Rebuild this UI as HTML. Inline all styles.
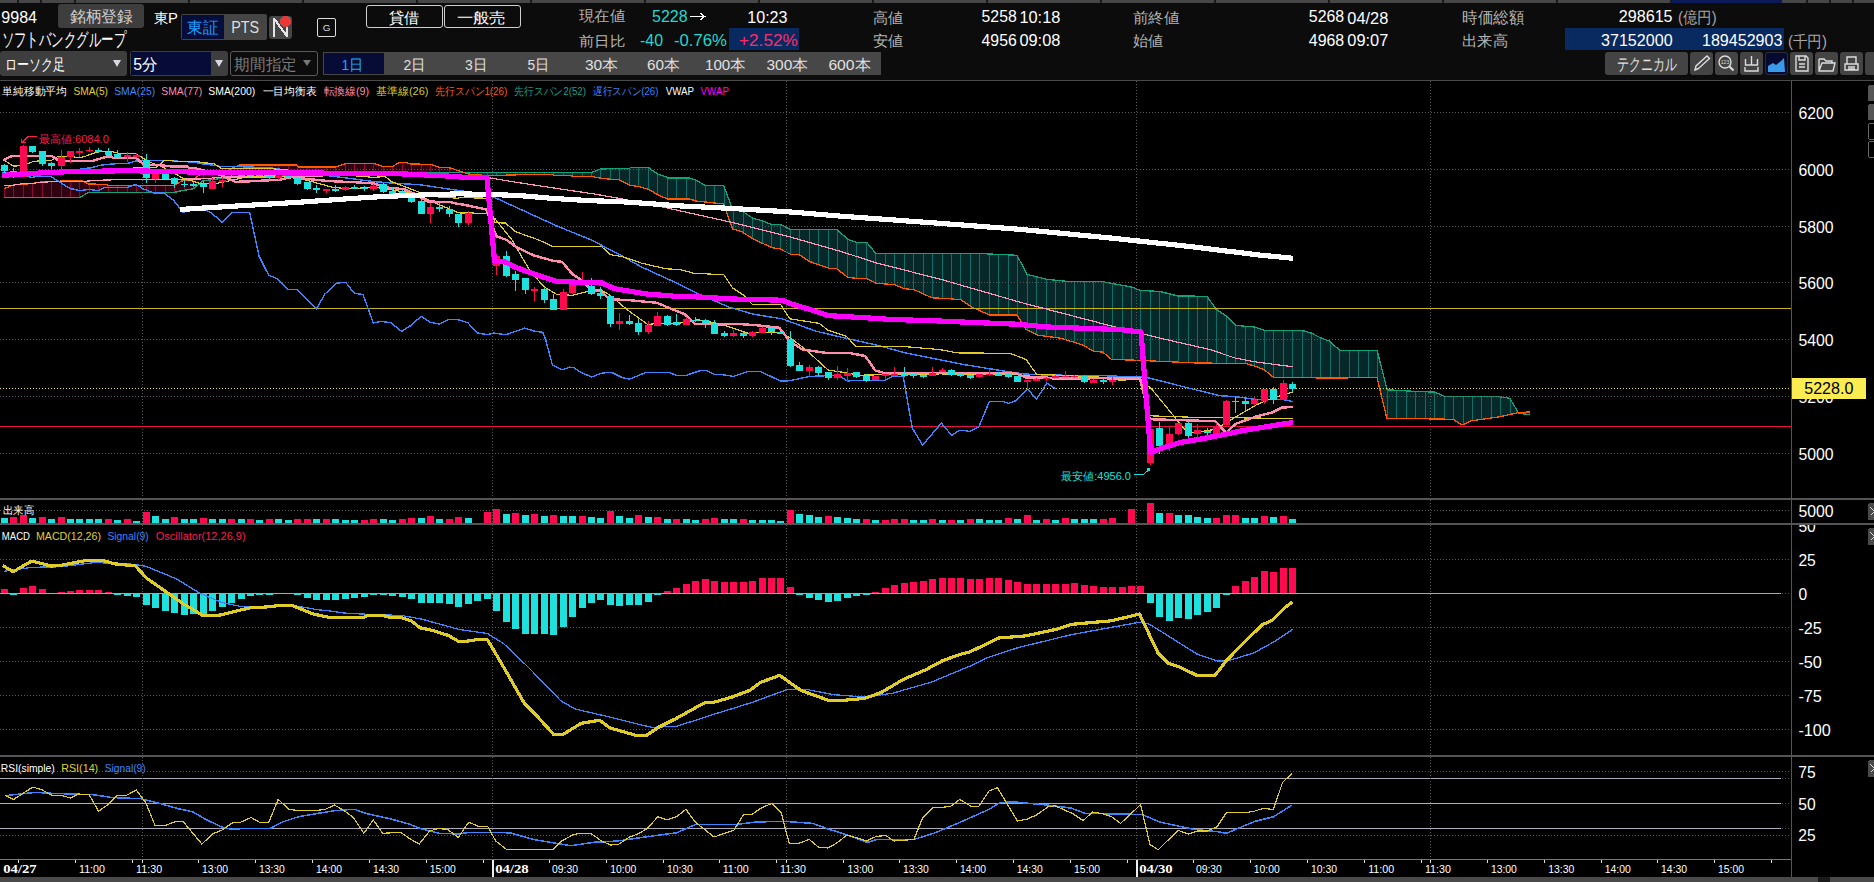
<!DOCTYPE html>
<html><head><meta charset="utf-8">
<style>
html,body{margin:0;padding:0;background:#000;width:1874px;height:882px;overflow:hidden;font-family:"Liberation Sans",sans-serif;}
#tb{position:absolute;left:0;top:0;width:1874px;height:80px;background:#0c0c0c;}
.a{position:absolute;white-space:nowrap;line-height:1;}
.btn{position:absolute;background:#3e3e3e;border-radius:3px;}
svg{position:absolute;left:0;top:0;}
</style></head><body>
<div id="tb">
<div style="position:absolute;left:0;top:0;width:1874px;height:3px;background:#464646"></div>
<div class="btn" style="left:58px;top:4px;width:86px;height:24px"></div>
<div style="position:absolute;left:181px;top:14px;width:86px;height:26px;background:#454545;border-radius:2px"></div>
<div style="position:absolute;left:182px;top:15px;width:42px;height:24px;background:#050d3a"></div>
<div class="btn" style="left:269px;top:16px;width:23px;height:23px;background:#454545"></div>
<div style="position:absolute;left:317px;top:18px;width:17px;height:17px;border:1px solid #ddd;border-radius:2px"></div>
<div style="position:absolute;left:366px;top:5px;width:75px;height:21px;border:1.5px solid #cfcfcf;border-radius:3px"></div>
<div style="position:absolute;left:444px;top:5px;width:75px;height:21px;border:1.5px solid #cfcfcf;border-radius:3px"></div>

<div style="position:absolute;left:729px;top:28px;width:70px;height:22px;background:#082a60"></div>


<div style="position:absolute;left:1565px;top:28px;width:219px;height:22px;background:#082a60"></div>

<div class="btn" style="left:0px;top:51px;width:127px;height:25px"></div>
<div style="position:absolute;left:113px;top:60px;width:0;height:0;border-left:4.5px solid transparent;border-right:4.5px solid transparent;border-top:7px solid #d8d8e0"></div>
<div class="btn" style="left:130px;top:51px;width:98px;height:25px"></div>
<div style="position:absolute;left:131px;top:52px;width:80px;height:23px;background:#060c36"></div>
<div style="position:absolute;left:215px;top:60px;width:0;height:0;border-left:4.5px solid transparent;border-right:4.5px solid transparent;border-top:7px solid #d8d8e0"></div>
<div style="position:absolute;left:230px;top:51px;width:86px;height:23px;border:1px solid #5a5a5a;border-radius:3px;background:#0c0c0c"></div>
<div style="position:absolute;left:303px;top:60px;width:0;height:0;border-left:4px solid transparent;border-right:4px solid transparent;border-top:6px solid #777"></div>
<div style="position:absolute;left:323px;top:52px;width:558px;height:23px;background:#474747"></div>
<div style="position:absolute;left:324px;top:53px;width:60px;height:21px;background:#060c36"></div>

<div class="btn" style="left:1605px;top:52px;width:83px;height:23px;background:#444"></div>
<div class="btn" style="left:1690px;top:52px;width:23px;height:23px;background:#444"></div>
<div class="btn" style="left:1715px;top:52px;width:23px;height:23px;background:#444"></div>
<div class="btn" style="left:1740px;top:52px;width:23px;height:23px;background:#444"></div>
<div class="btn" style="left:1765px;top:52px;width:23px;height:23px;background:#050b30;box-shadow:inset 0 0 0 1px #2a2a3a"></div>
<div class="btn" style="left:1790px;top:52px;width:23px;height:23px;background:#444"></div>
<div class="btn" style="left:1815px;top:52px;width:23px;height:23px;background:#444"></div>
<div class="btn" style="left:1840px;top:52px;width:23px;height:23px;background:#444"></div>
<div class="btn" style="left:1865px;top:52px;width:12px;height:23px;background:#444"></div>
<svg width="1874" height="80" style="position:absolute;left:0;top:0">
<g fill="none" stroke="#dcdcdc" stroke-width="1.4">
<path d="M1695,70 L1696,66 L1707,56 L1709.5,58.5 L1698.5,68.5 Z M1695,70 L1698.5,68.5"/>
<circle cx="1725" cy="62" r="6"/><path d="M1729.5,66.5 L1733.5,70.5" stroke-width="2.2"/>
<path d="M1751.5,56 V65 M1745.5,59 V65 H1757.5 V59 M1745,67 V71 H1758 V67"/>
<path d="M1796,56 H1806 L1808,58 V71 H1796 Z M1799,56 V60 H1805 V56 M1799,64 H1805 M1799,67 H1805"/>
<path d="M1819,59 V71 H1833 L1835,63 H1822 L1819,71 M1819,59 H1824 L1826,61 H1832 V63"/>
<path d="M1845,64 H1858 V70 H1845 Z M1847,64 V57 H1856 V64 M1848,67 H1855 M1848,69 H1855"/>
</g>
<text x="1725" y="64" font-size="5" fill="#dcdcdc" text-anchor="middle" font-family="Liberation Sans, sans-serif">123</text>
<path d="M1768,72 L1768,66 L1773,63 L1776,65 L1781,61 L1784,58 L1785,72 Z" fill="#3a9ae8"/>
</svg>

</div>
<svg width="1874" height="882" viewBox="0 0 1874 882" shape-rendering="crispEdges">
<rect x="0" y="81" width="1874" height="801" fill="#000"/>
<polygon points="4.0,188.6 4.5,188.5 5.0,188.3 5.5,188.1 6.0,187.9 6.5,187.7 7.0,187.5 7.5,187.3 8.0,187.1 8.5,186.9 9.0,186.7 9.5,186.5 10.0,186.3 10.5,186.1 11.0,185.9 11.5,185.7 12.0,185.5 12.5,185.3 13.0,185.1 13.5,184.9 14.0,184.7 14.5,184.7 15.0,184.6 15.5,184.6 16.0,184.5 16.5,184.5 17.0,184.5 17.5,184.4 18.0,184.4 18.5,184.3 19.0,184.3 19.5,184.3 20.0,184.2 20.5,184.2 21.0,184.1 21.5,184.1 22.0,184.1 22.5,184.0 23.0,184.0 23.5,184.0 24.0,184.0 24.5,184.0 25.0,183.9 25.5,183.9 26.0,183.9 26.5,183.9 27.0,183.9 27.5,183.9 28.0,183.8 28.5,183.8 29.0,183.8 29.5,183.8 30.0,183.8 30.5,183.8 31.0,183.7 31.5,183.7 32.0,183.7 32.5,183.7 33.0,183.6 33.5,183.4 34.0,183.3 34.5,183.2 35.0,183.0 35.5,182.9 36.0,182.7 36.5,182.6 37.0,182.4 37.5,182.3 38.0,182.3 38.5,182.3 39.0,182.2 39.5,182.2 40.0,182.2 40.5,182.2 41.0,182.1 41.5,182.1 42.0,182.1 42.5,182.1 43.0,182.0 43.5,182.0 44.0,182.0 44.5,182.0 45.0,181.9 45.5,181.9 46.0,181.9 46.5,181.9 47.0,181.8 47.5,181.8 48.0,181.8 48.5,181.8 49.0,181.7 49.5,181.7 50.0,181.7 50.5,181.7 51.0,181.6 51.5,181.6 52.0,181.6 52.5,181.6 53.0,181.5 53.5,181.5 54.0,181.5 54.5,181.5 55.0,181.4 55.5,181.4 56.0,181.4 56.5,181.4 57.0,181.3 57.5,181.3 58.0,181.3 58.5,181.3 59.0,181.2 59.5,181.2 60.0,181.2 60.5,181.1 61.0,181.1 61.5,181.1 62.0,181.1 62.5,181.0 63.0,181.0 63.5,181.0 64.0,181.0 64.5,180.9 65.0,180.9 65.5,180.9 66.0,180.9 66.5,180.8 67.0,180.8 67.5,180.8 68.0,180.7 68.5,180.7 69.0,180.7 69.5,180.7 70.0,180.6 70.5,180.6 71.0,180.6 71.5,180.6 72.0,180.6 72.5,180.6 73.0,180.6 73.5,180.6 74.0,180.6 74.5,180.6 75.0,180.6 75.5,180.6 76.0,180.6 76.5,180.6 77.0,180.6 77.5,180.6 78.0,180.6 78.5,180.6 79.0,180.6 79.5,180.6 80.0,180.6 80.5,180.6 81.0,180.6 81.5,180.6 82.0,180.6 82.5,180.9 83.0,181.1 83.5,181.4 84.0,181.6 84.5,181.9 85.0,182.1 85.5,182.4 86.0,182.6 86.5,182.9 87.0,183.1 87.5,183.4 88.0,183.6 88.5,183.9 89.0,184.0 89.5,184.0 90.0,184.0 90.5,184.0 91.0,184.0 91.5,184.1 92.0,184.1 92.5,184.1 93.0,184.1 93.5,184.1 94.0,184.1 94.5,184.1 95.0,184.1 95.5,184.1 96.0,184.2 96.5,184.2 97.0,184.2 97.5,184.2 98.0,184.2 98.5,184.2 99.0,184.2 99.5,184.2 100.0,184.2 100.5,184.3 101.0,184.3 101.5,184.3 102.0,184.3 102.5,184.3 103.0,184.3 103.5,184.3 104.0,184.3 104.5,184.3 105.0,184.3 105.5,184.4 106.0,184.4 106.5,184.4 107.0,184.4 107.5,184.4 108.0,185.3 108.5,185.6 109.0,185.6 109.5,185.6 110.0,185.6 110.5,185.6 111.0,185.6 111.5,185.6 112.0,185.6 112.5,185.6 113.0,185.6 113.5,185.6 114.0,185.6 114.5,185.6 115.0,185.6 115.5,185.6 116.0,185.6 116.5,185.5 117.0,185.5 117.5,185.5 118.0,185.5 118.5,185.5 119.0,185.5 119.5,185.5 120.0,185.5 120.5,185.5 121.0,185.5 121.5,185.5 122.0,185.5 122.5,185.5 123.0,185.5 123.5,185.5 124.0,185.5 124.5,185.5 125.0,185.5 125.5,185.5 126.0,185.5 126.5,185.5 127.0,185.5 127.5,185.5 128.0,185.5 128.5,185.5 129.0,185.5 129.5,185.5 130.0,185.5 130.5,185.5 131.0,185.5 131.5,185.5 132.0,185.5 132.5,185.5 133.0,185.4 133.5,185.4 134.0,185.4 134.5,185.4 135.0,185.4 135.5,185.4 136.0,185.4 136.5,185.4 137.0,185.4 137.5,185.4 138.0,185.4 138.5,185.4 139.0,185.4 139.5,185.4 140.0,185.4 140.5,185.4 141.0,185.4 141.5,185.4 142.0,185.4 142.5,185.4 143.0,185.4 143.5,185.4 144.0,185.4 144.5,185.4 145.0,185.4 145.5,185.4 146.0,185.4 146.5,185.4 147.0,185.4 147.5,185.4 148.0,185.4 148.5,185.4 149.0,185.4 149.5,185.3 150.0,185.3 150.5,185.3 151.0,185.3 151.5,185.3 152.0,185.3 152.5,185.3 153.0,185.3 153.5,185.3 154.0,185.3 154.5,185.3 155.0,185.3 155.5,185.3 156.0,185.3 156.5,185.3 157.0,185.3 157.5,185.3 158.0,185.3 158.5,185.3 159.0,185.3 159.5,185.3 160.0,185.3 160.5,185.3 161.0,185.3 161.5,185.3 162.0,185.3 162.5,185.3 163.0,185.3 163.5,185.3 164.0,185.3 164.5,185.3 165.0,185.3 165.5,185.3 166.0,185.2 166.5,185.2 167.0,185.2 167.5,185.2 168.0,185.2 168.5,185.2 169.0,185.2 169.5,185.2 170.0,185.2 170.5,185.2 171.0,185.2 171.5,185.2 172.0,185.2 172.5,185.2 173.0,185.2 173.5,185.2 174.0,185.2 174.5,185.0 175.0,184.8 175.5,184.5 176.0,184.2 176.5,183.9 177.0,183.7 177.5,183.4 178.0,183.1 178.5,182.9 179.0,182.6 179.5,182.3 180.0,182.0 180.5,181.8 181.0,181.5 181.5,181.2 182.0,181.0 182.5,180.9 183.0,180.9 183.5,180.8 184.0,180.8 184.5,180.7 185.0,180.6 185.5,180.6 186.0,180.5 186.5,180.5 187.0,180.4 187.5,180.4 188.0,180.3 188.5,180.3 189.0,180.2 189.5,180.1 190.0,180.1 190.5,180.0 191.0,180.0 191.5,179.9 192.0,179.9 192.5,179.8 193.0,179.7 193.5,179.6 194.0,179.2 194.5,178.8 195.0,178.4 195.5,178.0 196.0,177.6 196.5,177.2 197.0,176.8 197.5,176.4 198.0,176.0 198.5,175.6 199.0,175.2 199.5,174.8 200.0,174.6 200.5,174.6 201.0,174.6 201.5,174.6 202.0,174.5 202.5,174.5 203.0,174.5 203.5,174.5 204.0,174.5 204.5,174.5 205.0,174.5 205.5,174.4 206.0,174.4 206.5,174.4 207.0,174.4 207.5,174.4 208.0,174.4 208.5,174.4 209.0,174.3 209.5,174.3 210.0,174.3 210.5,174.3 211.0,174.3 211.5,174.3 212.0,174.3 212.5,174.3 213.0,174.2 213.5,174.2 214.0,174.2 214.5,174.2 215.0,174.2 215.5,174.2 216.0,174.2 216.5,174.1 217.0,174.1 217.5,174.1 218.0,174.1 218.5,174.1 219.0,174.1 219.5,174.1 220.0,174.0 220.5,174.0 221.0,174.0 221.5,174.0 222.0,173.7 222.5,173.4 223.0,173.0 223.5,172.7 224.0,172.4 224.5,172.0 225.0,171.7 225.5,171.4 226.0,171.1 226.5,170.9 227.0,170.7 227.5,170.4 228.0,170.2 228.5,170.0 229.0,169.7 229.5,169.5 230.0,169.3 230.5,169.0 231.0,168.8 231.5,168.6 232.0,168.3 232.5,168.1 233.0,167.9 233.5,167.6 234.0,167.4 234.5,167.2 235.0,166.9 235.5,166.7 236.0,166.5 236.5,166.3 237.0,166.0 237.5,165.8 238.0,165.6 238.5,165.3 239.0,165.1 239.5,165.0 240.0,165.0 240.5,165.0 241.0,165.0 241.5,165.0 242.0,165.0 242.5,165.0 243.0,165.0 243.5,165.0 244.0,165.0 244.5,165.0 245.0,165.0 245.5,165.0 246.0,165.0 246.5,165.0 247.0,165.0 247.5,165.0 248.0,165.0 248.5,165.0 249.0,165.0 249.5,165.0 250.0,165.0 250.5,165.0 251.0,165.0 251.5,165.0 252.0,165.0 252.5,165.0 253.0,165.0 253.5,165.0 254.0,165.0 254.5,165.0 255.0,165.0 255.5,165.0 256.0,165.0 256.5,165.0 257.0,165.0 257.5,165.0 258.0,165.0 258.5,165.0 259.0,165.0 259.5,165.0 260.0,165.0 260.5,165.0 261.0,165.0 261.5,165.0 262.0,165.0 262.5,165.0 263.0,165.0 263.5,165.0 264.0,165.0 264.5,165.0 265.0,165.0 265.5,165.0 266.0,165.0 266.5,165.0 267.0,165.0 267.5,165.0 268.0,165.0 268.5,165.0 269.0,165.0 269.5,165.0 270.0,165.0 270.5,165.0 271.0,165.0 271.5,165.0 272.0,165.0 272.5,165.0 273.0,165.0 273.5,165.0 274.0,165.0 274.5,165.0 275.0,165.0 275.5,165.0 276.0,165.0 276.5,165.0 277.0,165.0 277.5,165.0 278.0,165.0 278.5,165.0 279.0,165.0 279.5,165.0 280.0,165.0 280.5,165.0 281.0,165.0 281.5,165.0 282.0,165.0 282.5,165.0 283.0,165.0 283.5,165.0 284.0,165.0 284.5,165.0 285.0,165.0 285.5,165.0 286.0,165.0 286.5,165.0 287.0,165.0 287.5,165.0 288.0,165.0 288.5,165.0 289.0,165.0 289.5,165.0 290.0,165.0 290.5,165.0 291.0,165.0 291.5,165.0 292.0,165.0 292.5,165.0 293.0,165.0 293.5,165.0 294.0,165.0 294.5,165.0 295.0,165.0 295.5,165.0 296.0,165.0 296.5,165.0 297.0,165.3 297.5,166.1 298.0,166.9 298.5,166.9 299.0,166.9 299.5,166.9 300.0,166.9 300.5,166.9 301.0,166.9 301.5,166.9 302.0,166.9 302.5,166.9 303.0,166.9 303.5,166.9 304.0,166.9 304.5,166.9 305.0,166.9 305.5,166.9 306.0,166.9 306.5,166.9 307.0,166.9 307.5,166.9 308.0,166.9 308.5,166.9 309.0,166.9 309.5,166.9 310.0,166.9 310.5,166.9 311.0,166.9 311.5,166.9 312.0,166.9 312.5,166.9 313.0,166.9 313.5,166.9 314.0,166.9 314.5,166.9 315.0,166.9 315.5,166.9 316.0,166.9 316.5,166.9 317.0,166.9 317.5,166.9 318.0,166.9 318.5,166.9 319.0,166.9 319.5,166.9 320.0,166.9 320.5,166.9 321.0,166.9 321.5,166.9 322.0,166.9 322.5,166.9 323.0,166.9 323.5,166.9 324.0,166.9 324.5,166.9 325.0,166.9 325.5,166.9 326.0,166.9 326.5,166.9 327.0,166.9 327.5,166.9 328.0,166.9 328.5,166.9 329.0,166.9 329.5,166.9 330.0,166.9 330.5,166.9 331.0,166.9 331.5,166.9 332.0,166.9 332.5,166.9 333.0,166.9 333.5,166.9 334.0,166.9 334.5,166.9 335.0,166.9 335.5,166.8 336.0,166.7 336.5,166.5 337.0,166.4 337.5,166.2 338.0,166.1 338.5,165.9 339.0,165.7 339.5,165.6 340.0,165.4 340.5,165.3 341.0,165.1 341.5,165.0 342.0,164.8 342.5,164.6 343.0,164.5 343.5,164.3 344.0,164.2 344.5,164.0 345.0,163.9 345.5,163.7 346.0,163.7 346.5,163.7 347.0,163.7 347.5,163.7 348.0,163.7 348.5,163.7 349.0,163.7 349.5,163.7 350.0,163.7 350.5,163.7 351.0,163.7 351.5,163.7 352.0,163.7 352.5,163.7 353.0,163.7 353.5,163.7 354.0,163.7 354.5,163.7 355.0,163.7 355.5,163.7 356.0,163.7 356.5,163.7 357.0,163.7 357.5,163.7 358.0,163.7 358.5,163.7 359.0,163.7 359.5,163.7 360.0,163.7 360.5,163.7 361.0,163.7 361.5,163.7 362.0,163.7 362.5,163.7 363.0,163.7 363.5,163.7 364.0,163.7 364.5,163.7 365.0,163.7 365.5,163.7 366.0,163.7 366.5,163.7 367.0,163.7 367.5,163.7 368.0,163.7 368.5,163.7 369.0,163.7 369.5,163.7 370.0,163.7 370.5,163.7 371.0,163.7 371.5,163.7 372.0,163.7 372.5,163.7 373.0,163.7 373.5,163.7 374.0,163.7 374.5,163.7 375.0,163.7 375.5,163.9 376.0,164.1 376.5,164.3 377.0,164.5 377.5,164.6 378.0,164.8 378.5,165.0 379.0,165.2 379.5,165.4 380.0,165.6 380.5,165.8 381.0,166.0 381.5,166.2 382.0,166.3 382.5,166.5 383.0,166.5 383.5,166.5 384.0,166.5 384.5,166.5 385.0,166.5 385.5,166.5 386.0,166.5 386.5,166.5 387.0,166.5 387.5,166.5 388.0,166.5 388.5,166.5 389.0,166.5 389.5,166.5 390.0,166.5 390.5,166.5 391.0,166.5 391.5,166.5 392.0,166.5 392.5,166.5 393.0,166.2 393.5,165.9 394.0,165.6 394.5,165.3 395.0,165.0 395.5,164.7 396.0,164.4 396.5,164.1 397.0,163.8 397.5,163.5 398.0,163.2 398.5,162.9 399.0,162.6 399.5,162.5 400.0,162.5 400.5,162.5 401.0,162.5 401.5,162.5 402.0,162.5 402.5,162.5 403.0,162.5 403.5,162.5 404.0,162.5 404.5,162.5 405.0,162.5 405.5,162.5 406.0,162.6 406.5,162.8 407.0,162.9 407.5,163.0 408.0,163.2 408.5,163.3 409.0,163.4 409.5,163.6 410.0,163.7 410.5,163.8 411.0,163.9 411.5,163.9 412.0,163.9 412.5,163.9 413.0,164.0 413.5,164.0 414.0,164.0 414.5,164.0 415.0,164.0 415.5,164.0 416.0,164.0 416.5,164.1 417.0,164.1 417.5,164.1 418.0,164.1 418.5,164.1 419.0,164.1 419.5,164.1 420.0,164.1 420.5,164.2 421.0,164.2 421.5,164.2 422.0,164.2 422.5,164.2 423.0,164.2 423.5,164.2 424.0,164.2 424.5,164.3 425.0,164.3 425.5,164.3 426.0,164.3 426.5,164.3 427.0,164.3 427.5,164.3 428.0,164.3 428.5,164.4 429.0,164.4 429.5,164.4 430.0,164.4 430.5,164.5 431.0,164.7 431.5,164.8 432.0,164.9 432.5,165.0 433.0,165.2 433.5,165.3 434.0,165.4 434.5,165.5 435.0,165.7 435.5,165.8 436.0,166.0 436.5,166.2 437.0,166.4 437.5,166.6 438.0,166.7 438.5,166.9 439.0,167.1 439.5,167.3 440.0,167.3 440.5,167.3 441.0,167.4 441.5,167.4 442.0,167.4 442.5,167.5 443.0,167.5 443.5,167.5 444.0,167.5 444.5,167.6 445.0,167.6 445.5,167.6 446.0,167.6 446.5,167.7 447.0,167.7 447.5,167.7 448.0,167.7 448.5,167.8 449.0,167.8 449.5,167.9 450.0,168.0 450.5,168.2 451.0,168.3 451.5,168.5 452.0,168.6 452.5,168.8 453.0,168.9 453.5,169.1 454.0,169.2 454.5,169.4 455.0,169.6 455.5,169.7 456.0,169.9 456.5,170.1 457.0,170.3 457.5,170.5 458.0,170.6 458.5,170.8 459.0,171.0 459.5,171.2 460.0,171.3 460.5,171.5 461.0,171.7 461.5,171.8 462.0,172.0 462.5,172.2 463.0,172.3 463.5,172.5 464.0,172.6 464.5,172.8 464.5,172.7 464.0,172.7 463.5,172.7 463.0,172.7 462.5,172.7 462.0,172.7 461.5,172.7 461.0,172.7 460.5,172.7 460.0,172.7 459.5,172.7 459.0,172.7 458.5,172.7 458.0,172.7 457.5,172.7 457.0,172.7 456.5,172.7 456.0,172.7 455.5,172.7 455.0,172.7 454.5,172.7 454.0,172.7 453.5,172.7 453.0,172.7 452.5,172.7 452.0,172.7 451.5,172.7 451.0,172.7 450.5,172.7 450.0,172.7 449.5,172.7 449.0,172.7 448.5,172.7 448.0,172.7 447.5,172.7 447.0,172.7 446.5,172.7 446.0,172.7 445.5,172.7 445.0,172.7 444.5,172.7 444.0,172.7 443.5,172.7 443.0,172.7 442.5,172.7 442.0,172.7 441.5,172.7 441.0,172.7 440.5,172.7 440.0,172.7 439.5,172.7 439.0,172.7 438.5,172.7 438.0,172.7 437.5,172.7 437.0,172.7 436.5,172.7 436.0,172.7 435.5,172.7 435.0,172.7 434.5,172.7 434.0,172.7 433.5,172.7 433.0,172.7 432.5,172.7 432.0,172.7 431.5,172.7 431.0,172.7 430.5,172.7 430.0,172.7 429.5,172.7 429.0,172.7 428.5,172.7 428.0,172.8 427.5,172.8 427.0,172.8 426.5,172.8 426.0,172.8 425.5,172.8 425.0,172.8 424.5,172.9 424.0,172.9 423.5,172.9 423.0,172.9 422.5,172.9 422.0,172.9 421.5,172.9 421.0,173.0 420.5,173.0 420.0,173.0 419.5,173.0 419.0,173.0 418.5,173.0 418.0,173.0 417.5,173.1 417.0,173.1 416.5,173.1 416.0,173.1 415.5,173.1 415.0,173.1 414.5,173.1 414.0,173.2 413.5,173.2 413.0,173.2 412.5,173.2 412.0,173.2 411.5,173.2 411.0,173.2 410.5,173.3 410.0,173.3 409.5,173.3 409.0,173.3 408.5,173.3 408.0,173.3 407.5,173.3 407.0,173.4 406.5,173.4 406.0,173.4 405.5,173.4 405.0,173.4 404.5,173.4 404.0,173.4 403.5,173.5 403.0,173.5 402.5,173.5 402.0,173.5 401.5,173.5 401.0,173.5 400.5,173.5 400.0,173.6 399.5,173.6 399.0,173.6 398.5,173.6 398.0,173.6 397.5,173.6 397.0,173.6 396.5,173.7 396.0,173.7 395.5,173.7 395.0,173.7 394.5,173.7 394.0,173.7 393.5,173.7 393.0,173.8 392.5,173.8 392.0,173.8 391.5,173.8 391.0,173.8 390.5,173.8 390.0,173.8 389.5,173.9 389.0,173.9 388.5,173.9 388.0,173.9 387.5,173.9 387.0,173.9 386.5,173.9 386.0,174.0 385.5,174.0 385.0,174.0 384.5,174.0 384.0,174.0 383.5,174.0 383.0,174.0 382.5,174.1 382.0,174.1 381.5,174.1 381.0,174.1 380.5,174.1 380.0,174.1 379.5,174.1 379.0,174.2 378.5,174.2 378.0,174.2 377.5,174.2 377.0,174.2 376.5,174.2 376.0,174.2 375.5,174.3 375.0,174.3 374.5,174.3 374.0,174.3 373.5,174.3 373.0,174.3 372.5,174.3 372.0,174.4 371.5,174.4 371.0,174.4 370.5,174.4 370.0,174.4 369.5,174.4 369.0,174.4 368.5,174.5 368.0,174.5 367.5,174.5 367.0,174.5 366.5,174.5 366.0,174.5 365.5,174.5 365.0,174.6 364.5,174.6 364.0,174.6 363.5,174.6 363.0,174.6 362.5,174.6 362.0,174.6 361.5,174.6 361.0,174.7 360.5,174.7 360.0,174.7 359.5,174.7 359.0,174.7 358.5,174.7 358.0,174.7 357.5,174.8 357.0,174.8 356.5,174.8 356.0,174.8 355.5,174.8 355.0,174.8 354.5,174.8 354.0,174.9 353.5,174.9 353.0,174.9 352.5,174.9 352.0,174.9 351.5,174.9 351.0,174.9 350.5,175.0 350.0,175.0 349.5,175.0 349.0,175.0 348.5,175.0 348.0,175.0 347.5,175.0 347.0,175.1 346.5,175.1 346.0,175.1 345.5,175.1 345.0,175.1 344.5,175.1 344.0,175.1 343.5,175.2 343.0,175.2 342.5,175.2 342.0,175.2 341.5,175.2 341.0,175.2 340.5,175.2 340.0,175.3 339.5,175.3 339.0,175.3 338.5,175.3 338.0,175.3 337.5,175.3 337.0,175.3 336.5,175.4 336.0,175.4 335.5,175.4 335.0,175.4 334.5,175.4 334.0,175.4 333.5,175.4 333.0,175.5 332.5,175.5 332.0,175.5 331.5,175.5 331.0,175.5 330.5,175.5 330.0,175.5 329.5,175.6 329.0,175.6 328.5,175.6 328.0,175.6 327.5,175.6 327.0,175.6 326.5,175.6 326.0,175.7 325.5,175.7 325.0,175.7 324.5,175.7 324.0,175.7 323.5,175.7 323.0,175.7 322.5,175.8 322.0,175.8 321.5,175.8 321.0,175.8 320.5,175.8 320.0,175.8 319.5,175.8 319.0,175.9 318.5,175.9 318.0,175.9 317.5,175.9 317.0,175.9 316.5,175.9 316.0,175.9 315.5,176.0 315.0,176.0 314.5,176.0 314.0,176.0 313.5,176.0 313.0,176.0 312.5,176.0 312.0,176.1 311.5,176.1 311.0,176.1 310.5,176.1 310.0,176.1 309.5,176.1 309.0,176.1 308.5,176.2 308.0,176.2 307.5,176.2 307.0,176.2 306.5,176.2 306.0,176.2 305.5,176.2 305.0,176.3 304.5,176.3 304.0,176.3 303.5,176.3 303.0,176.3 302.5,176.3 302.0,176.3 301.5,176.4 301.0,176.4 300.5,176.4 300.0,176.4 299.5,176.4 299.0,176.4 298.5,176.4 298.0,176.4 297.5,176.4 297.0,176.4 296.5,176.4 296.0,176.4 295.5,176.4 295.0,176.4 294.5,176.4 294.0,176.4 293.5,176.4 293.0,176.4 292.5,176.4 292.0,176.4 291.5,176.4 291.0,176.4 290.5,176.4 290.0,176.4 289.5,176.4 289.0,176.4 288.5,176.4 288.0,176.4 287.5,176.4 287.0,176.4 286.5,176.4 286.0,176.4 285.5,176.4 285.0,176.4 284.5,176.4 284.0,176.4 283.5,176.4 283.0,176.4 282.5,176.4 282.0,176.4 281.5,176.4 281.0,176.4 280.5,176.4 280.0,176.4 279.5,176.4 279.0,176.4 278.5,176.4 278.0,176.4 277.5,176.4 277.0,176.4 276.5,176.4 276.0,176.4 275.5,176.4 275.0,176.4 274.5,176.4 274.0,176.4 273.5,176.4 273.0,176.4 272.5,176.4 272.0,176.4 271.5,176.4 271.0,176.4 270.5,176.4 270.0,176.4 269.5,176.5 269.0,176.5 268.5,176.5 268.0,176.5 267.5,176.5 267.0,176.5 266.5,176.5 266.0,176.5 265.5,176.5 265.0,176.5 264.5,176.5 264.0,176.5 263.5,176.5 263.0,176.5 262.5,176.5 262.0,176.5 261.5,176.5 261.0,176.5 260.5,176.5 260.0,176.5 259.5,176.5 259.0,176.5 258.5,176.5 258.0,176.5 257.5,176.5 257.0,176.5 256.5,176.5 256.0,176.5 255.5,176.5 255.0,176.5 254.5,176.5 254.0,176.5 253.5,176.5 253.0,176.5 252.5,176.5 252.0,176.5 251.5,176.5 251.0,176.5 250.5,176.5 250.0,176.5 249.5,176.5 249.0,176.5 248.5,176.5 248.0,176.5 247.5,176.5 247.0,176.5 246.5,176.5 246.0,176.5 245.5,176.5 245.0,176.5 244.5,176.5 244.0,176.5 243.5,176.5 243.0,176.5 242.5,176.5 242.0,176.5 241.5,176.5 241.0,176.5 240.5,176.5 240.0,176.5 239.5,176.5 239.0,176.6 238.5,176.6 238.0,176.7 237.5,176.7 237.0,176.8 236.5,176.8 236.0,176.9 235.5,176.9 235.0,177.0 234.5,177.0 234.0,177.1 233.5,177.1 233.0,177.2 232.5,177.2 232.0,177.2 231.5,177.3 231.0,177.3 230.5,177.4 230.0,177.4 229.5,177.5 229.0,177.5 228.5,177.6 228.0,177.6 227.5,177.7 227.0,177.7 226.5,177.8 226.0,177.8 225.5,177.9 225.0,177.9 224.5,178.0 224.0,178.0 223.5,178.1 223.0,178.1 222.5,178.2 222.0,178.3 221.5,178.3 221.0,178.4 220.5,178.5 220.0,178.6 219.5,178.6 219.0,178.7 218.5,178.8 218.0,178.8 217.5,178.9 217.0,179.0 216.5,179.0 216.0,179.1 215.5,179.2 215.0,179.2 214.5,179.3 214.0,179.4 213.5,179.5 213.0,179.5 212.5,179.6 212.0,179.7 211.5,179.7 211.0,179.8 210.5,179.9 210.0,179.9 209.5,180.0 209.0,180.1 208.5,180.2 208.0,180.2 207.5,180.3 207.0,180.4 206.5,180.4 206.0,180.5 205.5,180.6 205.0,180.6 204.5,180.7 204.0,180.8 203.5,180.8 203.0,180.9 202.5,181.0 202.0,181.4 201.5,181.8 201.0,182.3 200.5,182.7 200.0,183.2 199.5,183.7 199.0,184.1 198.5,184.6 198.0,185.0 197.5,185.5 197.0,185.9 196.5,186.4 196.0,186.9 195.5,187.3 195.0,187.8 194.5,188.2 194.0,188.7 193.5,188.8 193.0,188.9 192.5,188.9 192.0,189.0 191.5,189.1 191.0,189.2 190.5,189.2 190.0,189.3 189.5,189.4 189.0,189.5 188.5,189.6 188.0,189.6 187.5,189.7 187.0,189.8 186.5,189.9 186.0,190.0 185.5,190.0 185.0,190.1 184.5,190.2 184.0,190.3 183.5,190.3 183.0,190.4 182.5,190.5 182.0,190.6 181.5,190.7 181.0,190.8 180.5,190.9 180.0,191.1 179.5,191.2 179.0,191.3 178.5,191.4 178.0,191.5 177.5,191.6 177.0,191.8 176.5,191.9 176.0,192.0 175.5,192.1 175.0,192.2 174.5,192.4 174.0,192.4 173.5,192.4 173.0,192.4 172.5,192.4 172.0,192.4 171.5,192.4 171.0,192.4 170.5,192.4 170.0,192.4 169.5,192.4 169.0,192.4 168.5,192.4 168.0,192.4 167.5,192.4 167.0,192.4 166.5,192.4 166.0,192.4 165.5,192.4 165.0,192.4 164.5,192.4 164.0,192.4 163.5,192.4 163.0,192.4 162.5,192.4 162.0,192.4 161.5,192.4 161.0,192.4 160.5,192.4 160.0,192.4 159.5,192.4 159.0,192.4 158.5,192.4 158.0,192.4 157.5,192.4 157.0,192.4 156.5,192.4 156.0,192.4 155.5,192.4 155.0,192.4 154.5,192.4 154.0,192.4 153.5,192.4 153.0,192.4 152.5,192.4 152.0,192.4 151.5,192.4 151.0,192.4 150.5,192.4 150.0,192.4 149.5,192.4 149.0,192.4 148.5,192.4 148.0,192.4 147.5,192.4 147.0,192.4 146.5,192.4 146.0,192.4 145.5,192.4 145.0,192.4 144.5,192.4 144.0,192.4 143.5,192.4 143.0,192.4 142.5,192.4 142.0,192.4 141.5,192.4 141.0,192.4 140.5,192.4 140.0,192.4 139.5,192.4 139.0,192.4 138.5,192.4 138.0,192.4 137.5,192.4 137.0,192.4 136.5,192.4 136.0,192.4 135.5,192.4 135.0,192.4 134.5,192.4 134.0,192.4 133.5,192.4 133.0,192.4 132.5,192.4 132.0,192.4 131.5,192.4 131.0,192.4 130.5,192.4 130.0,192.4 129.5,192.4 129.0,192.4 128.5,192.4 128.0,192.4 127.5,192.4 127.0,192.4 126.5,192.4 126.0,192.4 125.5,192.4 125.0,192.4 124.5,192.4 124.0,192.4 123.5,192.4 123.0,192.4 122.5,192.4 122.0,192.4 121.5,192.4 121.0,192.4 120.5,192.4 120.0,192.4 119.5,192.4 119.0,192.4 118.5,192.4 118.0,192.4 117.5,192.4 117.0,192.4 116.5,192.4 116.0,192.4 115.5,192.4 115.0,192.4 114.5,192.4 114.0,192.4 113.5,192.4 113.0,192.4 112.5,192.4 112.0,192.4 111.5,192.4 111.0,192.4 110.5,192.4 110.0,192.4 109.5,192.4 109.0,192.4 108.5,192.4 108.0,192.4 107.5,192.4 107.0,192.4 106.5,192.4 106.0,192.4 105.5,192.4 105.0,192.4 104.5,192.4 104.0,192.4 103.5,192.4 103.0,192.4 102.5,192.4 102.0,192.4 101.5,192.4 101.0,192.4 100.5,192.4 100.0,192.4 99.5,192.4 99.0,192.4 98.5,192.4 98.0,192.4 97.5,192.4 97.0,192.4 96.5,192.4 96.0,192.4 95.5,192.4 95.0,192.4 94.5,192.4 94.0,192.4 93.5,192.4 93.0,192.4 92.5,192.4 92.0,192.4 91.5,192.4 91.0,192.4 90.5,192.4 90.0,192.4 89.5,192.4 89.0,192.4 88.5,192.4 88.0,192.7 87.5,193.0 87.0,193.3 86.5,193.5 86.0,193.8 85.5,194.1 85.0,194.4 84.5,194.7 84.0,195.0 83.5,195.3 83.0,195.6 82.5,195.8 82.0,196.1 81.5,196.4 81.0,196.7 80.5,197.0 80.0,197.3 79.5,197.4 79.0,197.4 78.5,197.4 78.0,197.4 77.5,197.4 77.0,197.4 76.5,197.4 76.0,197.4 75.5,197.4 75.0,197.4 74.5,197.4 74.0,197.4 73.5,197.4 73.0,197.4 72.5,197.4 72.0,197.4 71.5,197.4 71.0,197.4 70.5,197.4 70.0,197.4 69.5,197.4 69.0,197.4 68.5,197.4 68.0,197.4 67.5,197.4 67.0,197.4 66.5,197.4 66.0,197.4 65.5,197.4 65.0,197.4 64.5,197.4 64.0,197.4 63.5,197.4 63.0,197.4 62.5,197.4 62.0,197.4 61.5,197.4 61.0,197.4 60.5,197.4 60.0,197.4 59.5,197.4 59.0,197.4 58.5,197.4 58.0,197.4 57.5,197.4 57.0,197.4 56.5,197.4 56.0,197.4 55.5,197.4 55.0,197.4 54.5,197.4 54.0,197.4 53.5,197.4 53.0,197.4 52.5,197.4 52.0,197.4 51.5,197.4 51.0,197.4 50.5,197.4 50.0,197.4 49.5,197.4 49.0,197.4 48.5,197.4 48.0,197.4 47.5,197.4 47.0,197.4 46.5,197.4 46.0,197.4 45.5,197.4 45.0,197.4 44.5,197.4 44.0,197.4 43.5,197.4 43.0,197.4 42.5,197.4 42.0,197.4 41.5,197.4 41.0,197.4 40.5,197.4 40.0,197.4 39.5,197.4 39.0,197.4 38.5,197.4 38.0,197.4 37.5,197.4 37.0,197.4 36.5,197.4 36.0,197.4 35.5,197.4 35.0,197.4 34.5,197.4 34.0,197.4 33.5,197.4 33.0,197.4 32.5,197.4 32.0,197.4 31.5,197.4 31.0,197.4 30.5,197.4 30.0,197.4 29.5,197.4 29.0,197.4 28.5,197.4 28.0,197.4 27.5,197.4 27.0,197.4 26.5,197.4 26.0,197.4 25.5,197.4 25.0,197.4 24.5,197.4 24.0,197.4 23.5,197.4 23.0,197.4 22.5,197.4 22.0,197.4 21.5,197.4 21.0,197.4 20.5,197.4 20.0,197.4 19.5,197.4 19.0,197.4 18.5,197.4 18.0,197.4 17.5,197.4 17.0,197.4 16.5,197.4 16.0,197.4 15.5,197.4 15.0,197.4 14.5,197.4 14.0,197.4 13.5,197.4 13.0,197.4 12.5,197.4 12.0,197.4 11.5,197.4 11.0,197.4 10.5,197.4 10.0,197.4 9.5,197.4 9.0,197.4 8.5,197.4 8.0,197.4 7.5,197.4 7.0,197.4 6.5,197.4 6.0,197.4 5.5,197.4 5.0,197.4 4.5,197.4 4.0,197.4" fill="#300010"/>
<polygon points="464.5,172.8 465.0,172.9 465.5,173.1 466.0,173.3 466.5,173.4 467.0,173.6 467.5,173.7 468.0,173.9 468.5,174.0 469.0,174.0 469.5,174.1 470.0,174.1 470.5,174.2 471.0,174.2 471.5,174.3 472.0,174.3 472.5,174.3 473.0,174.4 473.5,174.4 474.0,174.5 474.5,174.5 475.0,174.5 475.5,174.6 476.0,174.6 476.5,174.7 477.0,174.7 477.5,174.8 478.0,174.8 478.5,174.8 479.0,174.9 479.5,174.9 480.0,175.0 480.5,175.0 481.0,175.0 481.5,175.1 482.0,175.1 482.5,175.2 483.0,175.2 483.5,175.2 484.0,175.3 484.5,175.3 485.0,175.4 485.5,175.4 486.0,175.5 486.5,175.5 487.0,175.5 487.5,175.5 488.0,175.5 488.5,175.5 489.0,175.5 489.5,175.4 490.0,175.4 490.5,175.4 491.0,175.4 491.5,175.4 492.0,175.4 492.5,175.4 493.0,175.4 493.5,175.4 494.0,175.4 494.5,175.4 495.0,175.4 495.5,175.3 496.0,175.3 496.5,175.3 497.0,175.3 497.5,175.3 498.0,175.3 498.5,175.3 499.0,175.3 499.5,175.3 500.0,175.3 500.5,175.3 501.0,175.2 501.5,175.2 502.0,175.2 502.5,175.2 503.0,175.2 503.5,175.2 504.0,175.2 504.5,175.2 505.0,175.2 505.5,175.2 506.0,175.2 506.5,175.2 507.0,175.1 507.5,175.1 508.0,175.1 508.5,175.1 509.0,175.1 509.5,175.1 510.0,175.1 510.5,175.1 511.0,175.1 511.5,175.1 512.0,175.1 512.5,175.1 513.0,175.0 513.5,175.0 514.0,175.0 514.5,175.0 515.0,175.0 515.5,174.9 516.0,174.7 516.5,174.5 517.0,174.5 517.5,174.5 518.0,174.5 518.5,174.5 519.0,174.5 519.5,174.5 520.0,174.5 520.5,174.5 521.0,174.5 521.5,174.5 522.0,174.5 522.5,174.5 523.0,174.5 523.5,174.5 524.0,174.5 524.5,174.5 525.0,174.5 525.5,174.5 526.0,174.5 526.5,174.5 527.0,174.5 527.5,174.5 528.0,174.5 528.5,174.5 529.0,174.5 529.5,174.5 530.0,174.5 530.5,174.5 531.0,174.5 531.5,174.5 532.0,174.5 532.5,174.5 533.0,174.5 533.5,174.5 534.0,174.5 534.5,174.5 535.0,174.5 535.5,174.5 536.0,174.5 536.5,174.5 537.0,174.5 537.5,174.5 538.0,174.5 538.5,174.5 539.0,174.5 539.5,174.5 540.0,174.5 540.5,174.5 541.0,174.5 541.5,174.5 542.0,174.5 542.5,174.5 543.0,174.5 543.5,174.5 544.0,174.5 544.5,174.5 545.0,174.5 545.5,174.5 546.0,174.5 546.5,174.5 547.0,174.5 547.5,174.5 548.0,174.5 548.5,174.5 549.0,174.5 549.5,174.5 550.0,174.5 550.5,174.5 551.0,174.5 551.5,174.5 552.0,174.5 552.5,174.5 553.0,174.5 553.5,175.1 554.0,175.5 554.5,175.5 555.0,175.5 555.5,175.5 556.0,175.5 556.5,175.5 557.0,175.5 557.5,175.5 558.0,175.5 558.5,175.5 559.0,175.5 559.5,175.5 560.0,175.5 560.5,175.5 561.0,175.5 561.5,175.5 562.0,175.5 562.5,175.5 563.0,175.6 563.5,175.6 564.0,175.6 564.5,175.6 565.0,175.6 565.5,175.6 566.0,175.6 566.5,175.6 567.0,175.6 567.5,175.6 568.0,175.6 568.5,175.6 569.0,175.6 569.5,175.6 570.0,175.6 570.5,175.6 571.0,175.6 571.5,175.6 572.0,176.4 572.5,176.4 573.0,176.4 573.5,176.4 574.0,176.4 574.5,176.4 575.0,176.4 575.5,176.4 576.0,176.4 576.5,176.4 577.0,176.4 577.5,176.4 578.0,176.4 578.5,176.4 579.0,176.4 579.5,176.4 580.0,176.4 580.5,176.4 581.0,176.4 581.5,176.4 582.0,176.4 582.5,176.4 583.0,176.4 583.5,176.4 584.0,176.4 584.5,176.4 585.0,176.4 585.5,176.4 586.0,176.4 586.5,176.4 587.0,176.4 587.5,176.4 588.0,176.4 588.5,176.4 589.0,176.4 589.5,176.4 590.0,176.4 590.5,176.4 591.0,176.4 591.5,176.5 592.0,176.6 592.5,176.7 593.0,176.7 593.5,176.8 594.0,176.9 594.5,177.0 595.0,177.1 595.5,177.2 596.0,177.3 596.5,177.4 597.0,177.5 597.5,177.6 598.0,177.6 598.5,177.7 599.0,177.8 599.5,177.9 600.0,178.0 600.5,178.1 601.0,178.1 601.5,178.2 602.0,178.2 602.5,178.3 603.0,178.3 603.5,178.4 604.0,178.5 604.5,178.5 605.0,178.6 605.5,178.6 606.0,178.7 606.5,178.8 607.0,178.8 607.5,178.9 608.0,178.9 608.5,179.0 609.0,179.0 609.5,179.1 610.0,179.2 610.5,179.2 611.0,179.2 611.5,179.2 612.0,179.2 612.5,179.2 613.0,179.2 613.5,179.2 614.0,179.2 614.5,179.2 615.0,179.2 615.5,179.2 616.0,179.2 616.5,179.2 617.0,179.2 617.5,179.2 618.0,179.2 618.5,179.4 619.0,179.7 619.5,179.9 620.0,180.2 620.5,180.4 621.0,180.7 621.5,180.9 622.0,181.2 622.5,181.4 623.0,181.7 623.5,181.9 624.0,182.2 624.5,182.4 625.0,182.7 625.5,182.9 626.0,183.2 626.5,183.4 627.0,183.7 627.5,183.9 628.0,184.2 628.5,184.4 629.0,184.7 629.5,184.9 630.0,185.1 630.5,185.2 631.0,185.3 631.5,185.3 632.0,185.4 632.5,185.5 633.0,185.6 633.5,185.7 634.0,185.8 634.5,185.9 635.0,186.0 635.5,186.1 636.0,186.2 636.5,186.3 637.0,186.4 637.5,186.4 638.0,186.5 638.5,186.6 639.0,186.7 639.5,186.8 640.0,186.9 640.5,187.0 641.0,187.2 641.5,187.3 642.0,187.5 642.5,187.6 643.0,187.8 643.5,187.9 644.0,188.1 644.5,188.2 645.0,188.4 645.5,188.5 646.0,188.7 646.5,188.8 647.0,189.0 647.5,189.1 648.0,189.3 648.5,189.4 649.0,189.6 649.5,189.9 650.0,190.2 650.5,190.5 651.0,190.8 651.5,191.0 652.0,191.3 652.5,191.6 653.0,191.9 653.5,192.2 654.0,192.5 654.5,192.8 655.0,193.1 655.5,193.3 656.0,193.6 656.5,193.9 657.0,194.2 657.5,194.5 658.0,194.7 658.5,195.0 659.0,195.2 659.5,195.4 660.0,195.7 660.5,195.9 661.0,196.1 661.5,196.3 662.0,196.6 662.5,196.8 663.0,197.0 663.5,197.3 664.0,197.5 664.5,197.7 665.0,197.9 665.5,198.2 666.0,198.4 666.5,198.6 667.0,198.9 667.5,199.0 668.0,199.0 668.5,199.0 669.0,199.0 669.5,199.0 670.0,199.0 670.5,199.0 671.0,199.0 671.5,199.0 672.0,199.0 672.5,199.0 673.0,199.0 673.5,199.0 674.0,199.0 674.5,199.0 675.0,199.0 675.5,199.0 676.0,199.0 676.5,199.0 677.0,199.0 677.5,199.0 678.0,199.0 678.5,199.0 679.0,199.0 679.5,199.0 680.0,199.0 680.5,199.0 681.0,199.0 681.5,199.0 682.0,199.0 682.5,199.0 683.0,199.0 683.5,199.0 684.0,199.0 684.5,199.0 685.0,199.0 685.5,199.0 686.0,199.0 686.5,199.0 687.0,199.0 687.5,199.0 688.0,199.0 688.5,199.0 689.0,199.0 689.5,199.0 690.0,199.0 690.5,199.2 691.0,199.4 691.5,199.5 692.0,199.7 692.5,199.9 693.0,200.0 693.5,200.2 694.0,200.3 694.5,200.5 695.0,200.7 695.5,200.8 696.0,201.0 696.5,201.1 697.0,201.2 697.5,201.2 698.0,201.3 698.5,201.3 699.0,201.4 699.5,201.4 700.0,201.5 700.5,201.5 701.0,201.6 701.5,201.6 702.0,201.7 702.5,201.7 703.0,201.8 703.5,201.8 704.0,201.9 704.5,201.9 705.0,202.0 705.5,202.0 706.0,202.1 706.5,202.2 707.0,202.2 707.5,202.3 708.0,202.3 708.5,202.4 709.0,202.4 709.5,202.5 710.0,202.5 710.5,202.6 711.0,202.6 711.5,202.7 712.0,202.7 712.5,202.8 713.0,202.8 713.5,202.9 714.0,202.9 714.5,203.0 715.0,203.0 715.5,203.1 716.0,203.1 716.5,203.2 717.0,203.2 717.5,203.3 718.0,203.3 718.5,203.4 719.0,203.4 719.5,203.5 720.0,203.5 720.5,203.6 721.0,203.6 721.5,203.7 722.0,203.7 722.5,203.8 723.0,203.8 723.5,203.9 724.0,205.3 724.5,206.7 725.0,208.1 725.5,209.5 726.0,210.8 726.5,212.2 727.0,213.6 727.5,215.0 728.0,216.4 728.5,217.8 729.0,219.2 729.5,220.6 730.0,222.0 730.5,223.3 731.0,224.7 731.5,226.1 732.0,227.5 732.5,228.9 733.0,229.0 733.5,229.2 734.0,229.3 734.5,229.5 735.0,229.6 735.5,229.8 736.0,229.9 736.5,230.1 737.0,230.2 737.5,230.4 738.0,230.5 738.5,230.7 739.0,230.8 739.5,231.0 740.0,231.1 740.5,231.3 741.0,231.4 741.5,231.6 742.0,231.9 742.5,232.2 743.0,232.5 743.5,232.8 744.0,233.1 744.5,233.4 745.0,233.8 745.5,234.1 746.0,234.4 746.5,234.7 747.0,235.0 747.5,235.3 748.0,235.7 748.5,236.0 749.0,236.3 749.5,236.6 750.0,236.9 750.5,237.2 751.0,237.6 751.5,237.9 752.0,238.2 752.5,238.5 753.0,238.7 753.5,239.0 754.0,239.2 754.5,239.5 755.0,239.7 755.5,239.9 756.0,240.2 756.5,240.4 757.0,240.7 757.5,240.9 758.0,241.1 758.5,241.4 759.0,241.6 759.5,241.9 760.0,242.1 760.5,242.3 761.0,242.6 761.5,242.8 762.0,243.1 762.5,243.3 763.0,243.5 763.5,243.8 764.0,244.0 764.5,244.2 765.0,244.5 765.5,244.7 766.0,245.0 766.5,245.2 767.0,245.4 767.5,245.7 768.0,245.9 768.5,246.2 769.0,246.4 769.5,246.6 770.0,246.9 770.5,247.1 771.0,247.4 771.5,247.6 772.0,247.7 772.5,247.7 773.0,247.8 773.5,247.9 774.0,248.0 774.5,248.0 775.0,248.1 775.5,248.2 776.0,248.3 776.5,248.3 777.0,248.4 777.5,248.5 778.0,248.6 778.5,248.6 779.0,248.7 779.5,248.8 780.0,249.0 780.5,249.2 781.0,249.5 781.5,249.7 782.0,250.0 782.5,250.2 783.0,250.5 783.5,250.7 784.0,251.0 784.5,251.2 785.0,251.5 785.5,251.7 786.0,252.0 786.5,252.2 787.0,252.5 787.5,252.7 788.0,253.0 788.5,253.2 789.0,253.5 789.5,253.7 790.0,254.0 790.5,254.2 791.0,254.3 791.5,254.4 792.0,254.4 792.5,254.4 793.0,254.4 793.5,254.5 794.0,254.5 794.5,254.5 795.0,254.5 795.5,254.6 796.0,254.6 796.5,254.6 797.0,254.7 797.5,254.7 798.0,254.7 798.5,254.7 799.0,254.8 799.5,254.8 800.0,255.1 800.5,255.4 801.0,255.7 801.5,256.1 802.0,256.4 802.5,256.7 803.0,257.1 803.5,257.4 804.0,257.7 804.5,258.1 805.0,258.4 805.5,258.8 806.0,259.1 806.5,259.4 807.0,259.8 807.5,260.1 808.0,260.4 808.5,260.8 809.0,261.1 809.5,261.4 810.0,261.6 810.5,261.8 811.0,262.0 811.5,262.2 812.0,262.3 812.5,262.5 813.0,262.7 813.5,262.9 814.0,263.0 814.5,263.2 815.0,263.4 815.5,263.6 816.0,263.7 816.5,263.9 817.0,264.1 817.5,264.3 818.0,264.4 818.5,264.6 819.0,264.8 819.5,265.0 820.0,265.1 820.5,265.3 821.0,265.5 821.5,265.7 822.0,265.8 822.5,266.0 823.0,266.2 823.5,266.4 824.0,266.6 824.5,266.7 825.0,266.9 825.5,267.1 826.0,267.3 826.5,267.4 827.0,267.6 827.5,267.8 828.0,268.0 828.5,268.1 829.0,268.2 829.5,268.3 830.0,268.3 830.5,268.3 831.0,268.4 831.5,268.4 832.0,268.4 832.5,268.5 833.0,268.5 833.5,268.6 834.0,268.6 834.5,268.6 835.0,268.7 835.5,268.7 836.0,268.7 836.5,268.8 837.0,269.0 837.5,269.3 838.0,269.7 838.5,270.1 839.0,270.5 839.5,270.9 840.0,271.3 840.5,271.7 841.0,272.1 841.5,272.5 842.0,272.9 842.5,273.2 843.0,273.6 843.5,274.0 844.0,274.4 844.5,274.8 845.0,275.2 845.5,275.6 846.0,276.0 846.5,276.4 847.0,276.8 847.5,277.1 848.0,277.3 848.5,277.4 849.0,277.5 849.5,277.5 850.0,277.6 850.5,277.6 851.0,277.7 851.5,277.8 852.0,277.8 852.5,277.9 853.0,277.9 853.5,278.0 854.0,278.1 854.5,278.1 855.0,278.2 855.5,278.2 856.0,278.3 856.5,278.4 857.0,278.4 857.5,278.4 858.0,278.4 858.5,278.5 859.0,278.5 859.5,278.5 860.0,278.5 860.5,278.5 861.0,278.6 861.5,278.6 862.0,278.6 862.5,278.6 863.0,278.6 863.5,278.7 864.0,278.7 864.5,278.7 865.0,278.7 865.5,278.7 866.0,278.8 866.5,278.8 867.0,278.9 867.5,279.2 868.0,279.4 868.5,279.7 869.0,279.9 869.5,280.2 870.0,280.4 870.5,280.7 871.0,280.9 871.5,281.2 872.0,281.4 872.5,281.7 873.0,281.9 873.5,282.2 874.0,282.4 874.5,282.7 875.0,282.9 875.5,283.2 876.0,283.3 876.5,283.4 877.0,283.4 877.5,283.4 878.0,283.5 878.5,283.5 879.0,283.5 879.5,283.6 880.0,283.6 880.5,283.6 881.0,283.7 881.5,283.7 882.0,283.7 882.5,283.8 883.0,283.8 883.5,283.9 884.0,283.9 884.5,283.9 885.0,284.0 885.5,284.0 886.0,284.0 886.5,284.1 887.0,284.1 887.5,284.1 888.0,284.2 888.5,284.2 889.0,284.2 889.5,284.3 890.0,284.3 890.5,284.4 891.0,284.4 891.5,284.4 892.0,284.5 892.5,284.5 893.0,284.5 893.5,284.6 894.0,284.6 894.5,284.8 895.0,285.0 895.5,285.2 896.0,285.4 896.5,285.5 897.0,285.7 897.5,285.9 898.0,286.1 898.5,286.3 899.0,286.5 899.5,286.7 900.0,286.9 900.5,287.1 901.0,287.3 901.5,287.4 902.0,287.6 902.5,287.8 903.0,288.0 903.5,288.2 904.0,288.4 904.5,288.6 905.0,288.7 905.5,288.8 906.0,288.8 906.5,288.9 907.0,288.9 907.5,289.0 908.0,289.0 908.5,289.1 909.0,289.1 909.5,289.2 910.0,289.2 910.5,289.3 911.0,289.3 911.5,289.4 912.0,289.4 912.5,289.5 913.0,289.5 913.5,289.6 914.0,289.6 914.5,289.9 915.0,290.1 915.5,290.3 916.0,290.6 916.5,290.8 917.0,291.0 917.5,291.2 918.0,291.5 918.5,291.7 919.0,291.9 919.5,292.1 920.0,292.4 920.5,292.6 921.0,292.8 921.5,293.0 922.0,293.3 922.5,293.5 923.0,293.7 923.5,293.9 924.0,294.2 924.5,294.4 925.0,294.6 925.5,294.9 926.0,295.1 926.5,295.3 927.0,295.5 927.5,295.8 928.0,296.0 928.5,296.2 929.0,296.4 929.5,296.7 930.0,296.9 930.5,297.1 931.0,297.3 931.5,297.6 932.0,297.8 932.5,297.8 933.0,297.9 933.5,297.9 934.0,297.9 934.5,297.9 935.0,298.0 935.5,298.0 936.0,298.0 936.5,298.1 937.0,298.1 937.5,298.1 938.0,298.1 938.5,298.2 939.0,298.2 939.5,298.2 940.0,298.2 940.5,298.3 941.0,298.3 941.5,298.3 942.0,298.4 942.5,298.4 943.0,298.4 943.5,298.4 944.0,298.5 944.5,298.5 945.0,298.5 945.5,298.6 946.0,298.6 946.5,298.6 947.0,298.6 947.5,298.7 948.0,298.7 948.5,298.7 949.0,298.7 949.5,298.8 950.0,298.8 950.5,298.8 951.0,298.9 951.5,298.9 952.0,299.0 952.5,299.0 953.0,299.1 953.5,299.1 954.0,299.1 954.5,299.2 955.0,299.2 955.5,299.3 956.0,299.3 956.5,299.3 957.0,299.4 957.5,299.4 958.0,299.5 958.5,299.5 959.0,299.6 959.5,299.6 960.0,299.6 960.5,299.7 961.0,299.8 961.5,300.2 962.0,300.5 962.5,300.8 963.0,301.2 963.5,301.5 964.0,301.8 964.5,302.2 965.0,302.5 965.5,302.8 966.0,303.2 966.5,303.5 967.0,303.9 967.5,304.2 968.0,304.5 968.5,304.9 969.0,305.2 969.5,305.5 970.0,305.9 970.5,306.2 971.0,306.5 971.5,306.9 972.0,307.1 972.5,307.4 973.0,307.6 973.5,307.8 974.0,308.0 974.5,308.3 975.0,308.5 975.5,308.7 976.0,308.9 976.5,309.1 977.0,309.4 977.5,309.6 978.0,309.8 978.5,310.0 979.0,310.3 979.5,310.5 980.0,310.7 980.5,310.9 981.0,311.2 981.5,311.4 982.0,311.6 982.5,311.8 983.0,312.1 983.5,312.3 984.0,312.5 984.5,312.7 985.0,313.0 985.5,313.2 986.0,313.4 986.5,313.6 987.0,313.8 987.5,314.1 988.0,314.3 988.5,314.5 989.0,314.7 989.5,315.0 990.0,315.1 990.5,315.1 991.0,315.1 991.5,315.1 992.0,315.1 992.5,315.1 993.0,315.1 993.5,315.1 994.0,315.1 994.5,315.1 995.0,315.1 995.5,315.1 996.0,315.1 996.5,315.1 997.0,315.1 997.5,315.1 998.0,315.1 998.5,315.1 999.0,315.1 999.5,315.1 1000.0,315.1 1000.5,315.1 1001.0,315.1 1001.5,315.1 1002.0,315.1 1002.5,315.1 1003.0,315.1 1003.5,315.1 1004.0,315.1 1004.5,315.1 1005.0,315.1 1005.5,315.1 1006.0,315.1 1006.5,315.1 1007.0,315.1 1007.5,315.1 1008.0,315.1 1008.5,315.1 1009.0,315.1 1009.5,315.1 1010.0,315.1 1010.5,315.1 1011.0,315.1 1011.5,315.1 1012.0,315.1 1012.5,315.1 1013.0,315.1 1013.5,315.1 1014.0,315.1 1014.5,315.1 1015.0,315.1 1015.5,315.1 1016.0,315.1 1016.5,315.1 1017.0,315.1 1017.5,315.9 1018.0,316.7 1018.5,317.5 1019.0,318.3 1019.5,319.1 1020.0,319.9 1020.5,320.7 1021.0,321.5 1021.5,322.3 1022.0,323.1 1022.5,323.9 1023.0,324.7 1023.5,325.5 1024.0,326.3 1024.5,327.1 1025.0,327.8 1025.5,328.6 1026.0,329.4 1026.5,329.8 1027.0,330.0 1027.5,330.3 1028.0,330.5 1028.5,330.7 1029.0,331.0 1029.5,331.2 1030.0,331.5 1030.5,331.7 1031.0,331.9 1031.5,332.2 1032.0,332.4 1032.5,332.6 1033.0,332.9 1033.5,333.1 1034.0,333.3 1034.5,333.6 1035.0,333.8 1035.5,334.1 1036.0,334.3 1036.5,334.5 1037.0,334.8 1037.5,335.0 1038.0,335.2 1038.5,335.3 1039.0,335.3 1039.5,335.4 1040.0,335.5 1040.5,335.5 1041.0,335.6 1041.5,335.7 1042.0,335.7 1042.5,335.8 1043.0,335.9 1043.5,335.9 1044.0,336.0 1044.5,336.1 1045.0,336.1 1045.5,336.2 1046.0,336.3 1046.5,336.3 1047.0,336.4 1047.5,336.5 1048.0,336.5 1048.5,336.6 1049.0,336.7 1049.5,336.7 1050.0,336.8 1050.5,336.9 1051.0,336.9 1051.5,337.0 1052.0,337.1 1052.5,337.1 1053.0,337.2 1053.5,337.2 1054.0,337.3 1054.5,337.4 1055.0,337.4 1055.5,337.5 1056.0,337.6 1056.5,337.6 1057.0,337.7 1057.5,337.8 1058.0,337.8 1058.5,337.9 1059.0,338.0 1059.5,338.0 1060.0,338.1 1060.5,338.2 1061.0,338.4 1061.5,338.5 1062.0,338.7 1062.5,338.8 1063.0,339.0 1063.5,339.1 1064.0,339.3 1064.5,339.4 1065.0,339.6 1065.5,339.7 1066.0,339.9 1066.5,340.0 1067.0,340.2 1067.5,340.3 1068.0,340.5 1068.5,340.6 1069.0,340.8 1069.5,340.9 1070.0,341.1 1070.5,341.2 1071.0,341.4 1071.5,341.5 1072.0,341.7 1072.5,341.8 1073.0,342.0 1073.5,342.1 1074.0,342.3 1074.5,342.4 1075.0,342.6 1075.5,342.7 1076.0,342.9 1076.5,343.0 1077.0,343.2 1077.5,343.3 1078.0,343.5 1078.5,343.6 1079.0,343.7 1079.5,343.9 1080.0,344.0 1080.5,344.2 1081.0,344.3 1081.5,344.5 1082.0,344.6 1082.5,344.9 1083.0,345.2 1083.5,345.4 1084.0,345.7 1084.5,346.0 1085.0,346.3 1085.5,346.6 1086.0,346.9 1086.5,347.1 1087.0,347.4 1087.5,347.7 1088.0,348.0 1088.5,348.3 1089.0,348.6 1089.5,348.8 1090.0,349.1 1090.5,349.4 1091.0,349.7 1091.5,350.0 1092.0,350.3 1092.5,350.5 1093.0,350.8 1093.5,351.1 1094.0,351.4 1094.5,351.4 1095.0,351.5 1095.5,351.5 1096.0,351.6 1096.5,351.6 1097.0,351.6 1097.5,351.7 1098.0,351.7 1098.5,351.8 1099.0,351.8 1099.5,351.8 1100.0,351.9 1100.5,351.9 1101.0,352.0 1101.5,352.0 1102.0,352.0 1102.5,352.1 1103.0,352.3 1103.5,352.7 1104.0,353.1 1104.5,353.5 1105.0,354.0 1105.5,354.4 1106.0,354.8 1106.5,355.2 1107.0,355.6 1107.5,356.1 1108.0,356.5 1108.5,356.9 1109.0,357.3 1109.5,357.7 1110.0,358.2 1110.5,358.6 1111.0,359.0 1111.5,359.4 1112.0,359.5 1112.5,359.5 1113.0,359.5 1113.5,359.5 1114.0,359.6 1114.5,359.6 1115.0,359.6 1115.5,359.6 1116.0,359.6 1116.5,359.6 1117.0,359.6 1117.5,359.7 1118.0,359.7 1118.5,359.7 1119.0,359.7 1119.5,359.7 1120.0,359.7 1120.5,359.7 1121.0,359.7 1121.5,359.8 1122.0,359.8 1122.5,359.8 1123.0,359.8 1123.5,359.8 1124.0,359.8 1124.5,359.8 1125.0,359.8 1125.5,359.9 1126.0,359.9 1126.5,359.9 1127.0,359.9 1127.5,359.9 1128.0,359.9 1128.5,359.9 1129.0,360.0 1129.5,360.0 1130.0,360.0 1130.5,360.0 1131.0,360.0 1131.5,360.0 1132.0,360.1 1132.5,360.1 1133.0,360.1 1133.5,360.1 1134.0,360.1 1134.5,360.2 1135.0,360.2 1135.5,360.2 1136.0,360.2 1136.5,360.3 1137.0,360.3 1137.5,360.3 1138.0,360.3 1138.5,360.3 1139.0,360.4 1139.5,360.4 1140.0,360.4 1140.5,360.4 1141.0,360.5 1141.5,360.5 1142.0,360.5 1142.5,360.5 1143.0,360.6 1143.5,360.6 1144.0,360.6 1144.5,360.6 1145.0,360.6 1145.5,360.7 1146.0,360.7 1146.5,360.7 1147.0,360.7 1147.5,360.8 1148.0,360.8 1148.5,360.8 1149.0,360.8 1149.5,360.8 1150.0,360.9 1150.5,360.9 1151.0,360.9 1151.5,360.9 1152.0,361.0 1152.5,361.0 1153.0,361.0 1153.5,361.0 1154.0,361.1 1154.5,361.1 1155.0,361.1 1155.5,361.1 1156.0,361.1 1156.5,361.2 1157.0,361.2 1157.5,361.2 1158.0,361.2 1158.5,361.3 1159.0,361.3 1159.5,361.3 1160.0,361.3 1160.5,361.3 1161.0,361.4 1161.5,361.4 1162.0,361.4 1162.5,361.4 1163.0,361.5 1163.5,361.5 1164.0,361.5 1164.5,361.5 1165.0,361.6 1165.5,361.6 1166.0,361.6 1166.5,361.6 1167.0,361.6 1167.5,361.7 1168.0,361.7 1168.5,361.7 1169.0,361.7 1169.5,361.8 1170.0,361.8 1170.5,361.8 1171.0,361.8 1171.5,361.8 1172.0,361.9 1172.5,361.9 1173.0,361.9 1173.5,361.9 1174.0,362.0 1174.5,362.0 1175.0,362.0 1175.5,362.0 1176.0,362.1 1176.5,362.1 1177.0,362.1 1177.5,362.1 1178.0,362.1 1178.5,362.2 1179.0,362.2 1179.5,362.2 1180.0,362.2 1180.5,362.3 1181.0,362.3 1181.5,362.3 1182.0,362.3 1182.5,362.3 1183.0,362.4 1183.5,362.4 1184.0,362.4 1184.5,362.4 1185.0,362.5 1185.5,362.5 1186.0,362.5 1186.5,362.5 1187.0,362.6 1187.5,362.6 1188.0,362.6 1188.5,362.6 1189.0,362.6 1189.5,362.7 1190.0,362.7 1190.5,362.7 1191.0,362.7 1191.5,362.8 1192.0,362.8 1192.5,362.8 1193.0,362.8 1193.5,362.8 1194.0,362.9 1194.5,362.9 1195.0,362.9 1195.5,362.9 1196.0,363.0 1196.5,363.0 1197.0,363.0 1197.5,363.0 1198.0,363.0 1198.5,363.0 1199.0,363.0 1199.5,363.0 1200.0,363.0 1200.5,363.0 1201.0,363.0 1201.5,363.0 1202.0,363.1 1202.5,363.1 1203.0,363.1 1203.5,363.1 1204.0,363.1 1204.5,363.1 1205.0,363.1 1205.5,363.1 1206.0,363.1 1206.5,363.1 1207.0,363.1 1207.5,363.1 1208.0,363.1 1208.5,363.1 1209.0,363.1 1209.5,363.1 1210.0,363.1 1210.5,363.1 1211.0,363.1 1211.5,363.2 1212.0,363.2 1212.5,363.2 1213.0,363.2 1213.5,363.2 1214.0,363.2 1214.5,363.2 1215.0,363.2 1215.5,363.2 1216.0,363.2 1216.5,363.2 1217.0,363.2 1217.5,363.2 1218.0,363.2 1218.5,363.2 1219.0,363.2 1219.5,363.2 1220.0,363.2 1220.5,363.2 1221.0,363.2 1221.5,363.3 1222.0,363.3 1222.5,363.3 1223.0,363.3 1223.5,363.3 1224.0,363.3 1224.5,363.3 1225.0,363.3 1225.5,363.3 1226.0,363.3 1226.5,363.3 1227.0,363.3 1227.5,363.3 1228.0,363.3 1228.5,363.3 1229.0,363.3 1229.5,363.3 1230.0,363.3 1230.5,363.3 1231.0,363.4 1231.5,363.4 1232.0,363.4 1232.5,363.4 1233.0,363.4 1233.5,363.4 1234.0,363.4 1234.5,363.4 1235.0,363.4 1235.5,363.4 1236.0,363.4 1236.5,363.4 1237.0,363.4 1237.5,363.4 1238.0,363.4 1238.5,363.4 1239.0,363.4 1239.5,363.4 1240.0,363.4 1240.5,363.4 1241.0,363.5 1241.5,363.5 1242.0,363.5 1242.5,363.5 1243.0,363.5 1243.5,363.5 1244.0,363.5 1244.5,363.5 1245.0,363.5 1245.5,363.5 1246.0,363.6 1246.5,363.8 1247.0,363.9 1247.5,364.0 1248.0,364.2 1248.5,364.3 1249.0,364.5 1249.5,364.6 1250.0,364.7 1250.5,364.9 1251.0,365.0 1251.5,365.1 1252.0,365.3 1252.5,365.4 1253.0,365.6 1253.5,365.7 1254.0,365.8 1254.5,366.0 1255.0,366.1 1255.5,366.3 1256.0,366.5 1256.5,366.7 1257.0,366.9 1257.5,367.1 1258.0,367.3 1258.5,367.5 1259.0,367.6 1259.5,367.8 1260.0,368.0 1260.5,368.2 1261.0,368.4 1261.5,368.6 1262.0,368.8 1262.5,369.0 1263.0,369.1 1263.5,369.3 1264.0,369.6 1264.5,370.0 1265.0,370.4 1265.5,370.8 1266.0,371.2 1266.5,371.7 1267.0,372.1 1267.5,372.5 1268.0,372.9 1268.5,373.3 1269.0,373.7 1269.5,374.1 1270.0,374.5 1270.5,374.9 1271.0,375.3 1271.5,375.7 1272.0,376.1 1272.5,376.5 1273.0,376.9 1273.5,377.3 1274.0,377.6 1274.5,377.6 1275.0,377.6 1275.5,377.6 1276.0,377.6 1276.5,377.6 1277.0,377.6 1277.5,377.6 1278.0,377.6 1278.5,377.6 1279.0,377.6 1279.5,377.6 1280.0,377.6 1280.5,377.6 1281.0,377.6 1281.5,377.6 1282.0,377.6 1282.5,377.7 1283.0,377.7 1283.5,377.7 1284.0,377.7 1284.5,377.7 1285.0,377.7 1285.5,377.7 1286.0,377.7 1286.5,377.7 1287.0,377.7 1287.5,377.7 1288.0,377.7 1288.5,377.7 1289.0,377.7 1289.5,377.7 1290.0,377.7 1290.5,377.7 1291.0,377.7 1291.5,377.7 1292.0,377.7 1292.5,377.7 1293.0,377.7 1293.5,377.7 1294.0,377.7 1294.5,377.7 1295.0,377.7 1295.5,377.7 1296.0,377.7 1296.5,377.7 1297.0,377.7 1297.5,377.7 1298.0,377.7 1298.5,377.7 1299.0,377.8 1299.5,377.8 1300.0,377.8 1300.5,377.8 1301.0,377.8 1301.5,377.8 1302.0,377.8 1302.5,377.8 1303.0,377.8 1303.5,377.8 1304.0,377.8 1304.5,377.8 1305.0,377.8 1305.5,377.8 1306.0,377.8 1306.5,377.8 1307.0,377.8 1307.5,377.8 1308.0,377.8 1308.5,377.8 1309.0,377.8 1309.5,377.8 1310.0,377.8 1310.5,377.8 1311.0,377.8 1311.5,377.8 1312.0,377.8 1312.5,377.8 1313.0,377.8 1313.5,377.8 1314.0,377.8 1314.5,377.8 1315.0,377.9 1315.5,377.9 1316.0,377.9 1316.5,377.9 1317.0,377.9 1317.5,377.9 1318.0,377.9 1318.5,377.9 1319.0,377.9 1319.5,377.9 1320.0,377.9 1320.5,377.9 1321.0,377.9 1321.5,377.9 1322.0,377.9 1322.5,377.9 1323.0,377.9 1323.5,377.9 1324.0,377.9 1324.5,377.9 1325.0,377.9 1325.5,377.9 1326.0,377.9 1326.5,377.9 1327.0,377.9 1327.5,377.9 1328.0,377.9 1328.5,377.9 1329.0,377.9 1329.5,377.9 1330.0,377.9 1330.5,377.9 1331.0,377.9 1331.5,378.0 1332.0,378.0 1332.5,378.0 1333.0,378.0 1333.5,378.0 1334.0,378.0 1334.5,378.0 1335.0,378.0 1335.5,378.0 1336.0,378.0 1336.5,378.0 1337.0,378.0 1337.5,378.0 1338.0,378.0 1338.5,378.0 1339.0,378.0 1339.5,378.0 1340.0,378.0 1340.5,378.0 1341.0,378.0 1341.5,378.0 1342.0,378.0 1342.5,378.0 1343.0,377.9 1343.5,377.9 1344.0,377.9 1344.5,377.9 1345.0,377.9 1345.5,377.9 1346.0,377.9 1346.5,377.9 1347.0,377.9 1347.5,377.9 1348.0,377.9 1348.5,377.9 1349.0,377.8 1349.5,377.8 1350.0,377.8 1350.5,377.8 1351.0,377.8 1351.5,377.8 1352.0,377.8 1352.5,377.8 1353.0,377.8 1353.5,377.8 1354.0,377.8 1354.5,377.8 1355.0,377.8 1355.5,377.7 1356.0,377.7 1356.5,377.7 1357.0,377.7 1357.5,377.7 1358.0,377.7 1358.5,377.7 1359.0,377.7 1359.5,377.7 1360.0,377.7 1360.5,377.7 1361.0,377.7 1361.5,377.6 1362.0,377.6 1362.5,377.6 1363.0,377.6 1363.5,377.6 1364.0,377.6 1364.5,377.6 1365.0,377.6 1365.5,377.6 1366.0,377.6 1366.5,377.6 1367.0,377.6 1367.5,377.6 1368.0,377.5 1368.5,377.5 1369.0,377.5 1369.5,377.5 1370.0,377.5 1370.5,377.5 1371.0,377.5 1371.5,377.5 1372.0,377.5 1372.5,377.5 1373.0,377.5 1373.5,377.5 1374.0,377.4 1374.5,377.4 1375.0,377.4 1375.5,377.4 1376.0,377.4 1376.5,377.4 1377.0,377.4 1377.5,379.5 1378.0,381.6 1378.5,383.6 1379.0,385.7 1379.5,387.8 1380.0,389.9 1380.5,392.0 1381.0,394.1 1381.5,396.1 1382.0,398.2 1382.5,400.3 1383.0,402.4 1383.5,404.5 1384.0,406.5 1384.5,408.6 1385.0,410.7 1385.5,412.8 1386.0,414.9 1386.5,417.0 1387.0,418.2 1387.5,418.2 1388.0,418.2 1388.5,418.2 1389.0,418.2 1389.5,418.2 1390.0,418.2 1390.5,418.3 1391.0,418.3 1391.5,418.3 1392.0,418.3 1392.5,418.3 1393.0,418.3 1393.5,418.3 1394.0,418.3 1394.5,418.3 1395.0,418.3 1395.5,418.3 1396.0,418.3 1396.5,418.3 1397.0,418.4 1397.5,418.4 1398.0,418.4 1398.5,418.4 1399.0,418.4 1399.5,418.4 1400.0,418.4 1400.5,418.4 1401.0,418.4 1401.5,418.4 1402.0,418.4 1402.5,418.4 1403.0,418.4 1403.5,418.5 1404.0,418.5 1404.5,418.5 1405.0,418.5 1405.5,418.5 1406.0,418.5 1406.5,418.5 1407.0,418.5 1407.5,418.5 1408.0,418.5 1408.5,418.5 1409.0,418.5 1409.5,418.5 1410.0,418.6 1410.5,418.6 1411.0,418.6 1411.5,418.6 1412.0,418.6 1412.5,418.6 1413.0,418.6 1413.5,418.6 1414.0,418.6 1414.5,418.6 1415.0,418.6 1415.5,418.6 1416.0,418.6 1416.5,418.7 1417.0,418.7 1417.5,418.7 1418.0,418.7 1418.5,418.7 1419.0,418.7 1419.5,418.7 1420.0,418.7 1420.5,418.7 1421.0,418.7 1421.5,418.7 1422.0,418.7 1422.5,418.7 1423.0,418.8 1423.5,418.8 1424.0,418.8 1424.5,418.8 1425.0,418.8 1425.5,418.8 1426.0,418.8 1426.5,418.8 1427.0,418.8 1427.5,418.8 1428.0,418.8 1428.5,418.8 1429.0,418.9 1429.5,418.9 1430.0,418.9 1430.5,418.9 1431.0,418.9 1431.5,418.9 1432.0,418.9 1432.5,418.9 1433.0,418.9 1433.5,418.9 1434.0,419.0 1434.5,419.0 1435.0,419.0 1435.5,419.0 1436.0,419.0 1436.5,419.0 1437.0,419.0 1437.5,419.0 1438.0,419.0 1438.5,419.0 1439.0,419.0 1439.5,419.1 1440.0,419.1 1440.5,419.1 1441.0,419.1 1441.5,419.1 1442.0,419.1 1442.5,419.1 1443.0,419.1 1443.5,419.1 1444.0,419.1 1444.5,419.1 1445.0,419.2 1445.5,419.2 1446.0,419.2 1446.5,419.2 1447.0,419.2 1447.5,419.2 1448.0,419.2 1448.5,419.2 1449.0,419.2 1449.5,419.2 1450.0,419.2 1450.5,419.3 1451.0,419.3 1451.5,419.3 1452.0,419.3 1452.5,419.3 1453.0,419.3 1453.5,419.6 1454.0,419.9 1454.5,420.2 1455.0,420.6 1455.5,420.9 1456.0,421.2 1456.5,421.5 1457.0,421.8 1457.5,422.1 1458.0,422.5 1458.5,422.8 1459.0,423.1 1459.5,423.4 1460.0,423.7 1460.5,424.1 1461.0,424.4 1461.5,424.7 1462.0,425.0 1462.5,424.8 1463.0,424.5 1463.5,424.3 1464.0,424.1 1464.5,423.9 1465.0,423.6 1465.5,423.4 1466.0,423.2 1466.5,422.9 1467.0,422.7 1467.5,422.5 1468.0,422.3 1468.5,422.0 1469.0,421.8 1469.5,421.6 1470.0,421.4 1470.5,421.1 1471.0,420.9 1471.5,420.8 1472.0,420.8 1472.5,420.7 1473.0,420.6 1473.5,420.5 1474.0,420.5 1474.5,420.4 1475.0,420.3 1475.5,420.3 1476.0,420.2 1476.5,420.1 1477.0,420.0 1477.5,420.0 1478.0,419.9 1478.5,419.8 1479.0,419.8 1479.5,419.7 1480.0,419.6 1480.5,419.5 1481.0,419.5 1481.5,419.4 1482.0,419.3 1482.5,419.3 1483.0,419.2 1483.5,419.1 1484.0,419.0 1484.5,419.0 1485.0,418.9 1485.5,418.8 1486.0,418.8 1486.5,418.7 1487.0,418.6 1487.5,418.5 1488.0,418.5 1488.5,418.4 1489.0,418.3 1489.5,418.3 1490.0,418.2 1490.5,418.1 1491.0,418.0 1491.5,418.0 1492.0,417.9 1492.5,417.8 1493.0,417.8 1493.5,417.7 1494.0,417.6 1494.5,417.5 1495.0,417.5 1495.5,417.4 1496.0,417.3 1496.5,417.3 1497.0,417.2 1497.5,417.1 1498.0,417.0 1498.5,417.0 1499.0,416.8 1499.5,416.7 1500.0,416.6 1500.5,416.5 1501.0,416.4 1501.5,416.3 1502.0,416.2 1502.5,416.1 1503.0,416.0 1503.5,415.9 1504.0,415.7 1504.5,415.6 1505.0,415.5 1505.5,415.4 1506.0,415.3 1506.5,415.2 1507.0,415.1 1507.5,415.0 1508.0,414.9 1508.5,414.8 1509.0,414.6 1509.5,414.5 1510.0,414.4 1510.5,414.3 1511.0,414.2 1511.5,414.1 1512.0,414.0 1512.5,413.9 1513.0,413.8 1513.5,413.6 1514.0,413.5 1514.5,413.4 1515.0,413.3 1515.5,413.2 1516.0,413.1 1516.5,413.0 1517.0,412.9 1517.5,412.8 1518.0,412.7 1518.5,412.5 1518.5,412.9 1518.0,412.0 1517.5,411.2 1517.0,410.4 1516.5,409.5 1516.0,408.7 1515.5,407.9 1515.0,407.0 1514.5,406.2 1514.0,405.4 1513.5,404.5 1513.0,403.7 1512.5,402.9 1512.0,402.0 1511.5,401.2 1511.0,400.4 1510.5,399.5 1510.0,398.7 1509.5,398.2 1509.0,398.1 1508.5,398.0 1508.0,398.0 1507.5,397.9 1507.0,397.8 1506.5,397.8 1506.0,397.7 1505.5,397.6 1505.0,397.5 1504.5,397.5 1504.0,397.4 1503.5,397.3 1503.0,397.3 1502.5,397.2 1502.0,397.1 1501.5,397.0 1501.0,397.0 1500.5,396.9 1500.0,396.8 1499.5,396.8 1499.0,396.7 1498.5,396.6 1498.0,396.6 1497.5,396.6 1497.0,396.6 1496.5,396.6 1496.0,396.6 1495.5,396.6 1495.0,396.6 1494.5,396.6 1494.0,396.6 1493.5,396.6 1493.0,396.6 1492.5,396.6 1492.0,396.6 1491.5,396.6 1491.0,396.5 1490.5,396.5 1490.0,396.5 1489.5,396.5 1489.0,396.5 1488.5,396.5 1488.0,396.5 1487.5,396.5 1487.0,396.5 1486.5,396.5 1486.0,396.5 1485.5,396.5 1485.0,396.5 1484.5,396.5 1484.0,396.5 1483.5,396.5 1483.0,396.5 1482.5,396.5 1482.0,396.5 1481.5,396.5 1481.0,396.5 1480.5,396.5 1480.0,396.5 1479.5,396.5 1479.0,396.5 1478.5,396.5 1478.0,396.5 1477.5,396.4 1477.0,396.4 1476.5,396.4 1476.0,396.4 1475.5,396.4 1475.0,396.4 1474.5,396.4 1474.0,396.4 1473.5,396.4 1473.0,396.4 1472.5,396.4 1472.0,396.4 1471.5,396.4 1471.0,396.4 1470.5,396.4 1470.0,396.4 1469.5,396.4 1469.0,396.4 1468.5,396.4 1468.0,396.4 1467.5,396.4 1467.0,396.4 1466.5,396.4 1466.0,396.4 1465.5,396.4 1465.0,396.4 1464.5,396.4 1464.0,396.3 1463.5,396.3 1463.0,396.3 1462.5,396.3 1462.0,396.3 1461.5,396.3 1461.0,396.3 1460.5,396.3 1460.0,396.3 1459.5,396.3 1459.0,396.3 1458.5,396.3 1458.0,396.3 1457.5,396.3 1457.0,396.3 1456.5,396.3 1456.0,396.3 1455.5,396.3 1455.0,396.3 1454.5,396.3 1454.0,396.3 1453.5,396.3 1453.0,396.3 1452.5,396.3 1452.0,396.3 1451.5,396.3 1451.0,396.3 1450.5,396.2 1450.0,396.2 1449.5,396.2 1449.0,396.2 1448.5,396.2 1448.0,396.2 1447.5,396.2 1447.0,396.2 1446.5,396.2 1446.0,396.2 1445.5,396.2 1445.0,396.2 1444.5,396.2 1444.0,396.2 1443.5,396.0 1443.0,395.8 1442.5,395.6 1442.0,395.3 1441.5,395.1 1441.0,394.9 1440.5,394.7 1440.0,394.4 1439.5,394.2 1439.0,394.0 1438.5,393.8 1438.0,393.5 1437.5,393.3 1437.0,393.1 1436.5,392.9 1436.0,392.6 1435.5,392.4 1435.0,392.2 1434.5,392.1 1434.0,392.1 1433.5,392.1 1433.0,392.0 1432.5,392.0 1432.0,392.0 1431.5,392.0 1431.0,392.0 1430.5,391.9 1430.0,391.9 1429.5,391.9 1429.0,391.9 1428.5,391.9 1428.0,391.9 1427.5,391.8 1427.0,391.8 1426.5,391.8 1426.0,391.8 1425.5,391.8 1425.0,391.7 1424.5,391.7 1424.0,391.7 1423.5,391.7 1423.0,391.7 1422.5,391.7 1422.0,391.6 1421.5,391.6 1421.0,391.6 1420.5,391.6 1420.0,391.6 1419.5,391.5 1419.0,391.5 1418.5,391.5 1418.0,391.5 1417.5,391.5 1417.0,391.5 1416.5,391.4 1416.0,391.4 1415.5,391.4 1415.0,391.4 1414.5,391.3 1414.0,391.3 1413.5,391.3 1413.0,391.3 1412.5,391.2 1412.0,391.2 1411.5,391.2 1411.0,391.1 1410.5,391.1 1410.0,391.1 1409.5,391.1 1409.0,391.0 1408.5,391.0 1408.0,391.0 1407.5,390.9 1407.0,390.9 1406.5,390.9 1406.0,390.9 1405.5,390.8 1405.0,390.8 1404.5,390.8 1404.0,390.7 1403.5,390.7 1403.0,390.7 1402.5,390.7 1402.0,390.6 1401.5,390.6 1401.0,390.6 1400.5,390.5 1400.0,390.5 1399.5,390.5 1399.0,390.5 1398.5,390.4 1398.0,390.4 1397.5,390.4 1397.0,390.4 1396.5,390.3 1396.0,390.3 1395.5,390.3 1395.0,390.2 1394.5,390.2 1394.0,390.2 1393.5,390.2 1393.0,390.1 1392.5,390.1 1392.0,390.1 1391.5,390.0 1391.0,390.0 1390.5,390.0 1390.0,390.0 1389.5,389.9 1389.0,389.9 1388.5,389.9 1388.0,389.8 1387.5,389.8 1387.0,389.0 1386.5,387.1 1386.0,385.1 1385.5,383.2 1385.0,381.3 1384.5,379.3 1384.0,377.4 1383.5,375.4 1383.0,373.5 1382.5,371.6 1382.0,369.6 1381.5,367.7 1381.0,365.7 1380.5,363.8 1380.0,361.8 1379.5,359.9 1379.0,358.0 1378.5,356.0 1378.0,354.1 1377.5,352.1 1377.0,350.2 1376.5,350.2 1376.0,350.2 1375.5,350.2 1375.0,350.2 1374.5,350.2 1374.0,350.2 1373.5,350.2 1373.0,350.2 1372.5,350.2 1372.0,350.2 1371.5,350.2 1371.0,350.2 1370.5,350.2 1370.0,350.2 1369.5,350.2 1369.0,350.2 1368.5,350.2 1368.0,350.2 1367.5,350.2 1367.0,350.2 1366.5,350.2 1366.0,350.2 1365.5,350.2 1365.0,350.2 1364.5,350.2 1364.0,350.2 1363.5,350.2 1363.0,350.2 1362.5,350.2 1362.0,350.2 1361.5,350.2 1361.0,350.2 1360.5,350.2 1360.0,350.2 1359.5,350.2 1359.0,350.2 1358.5,350.2 1358.0,350.2 1357.5,350.2 1357.0,350.2 1356.5,350.2 1356.0,350.2 1355.5,350.2 1355.0,350.2 1354.5,350.2 1354.0,350.2 1353.5,350.2 1353.0,350.2 1352.5,350.2 1352.0,350.2 1351.5,350.2 1351.0,350.2 1350.5,350.2 1350.0,350.2 1349.5,350.2 1349.0,350.2 1348.5,350.2 1348.0,350.2 1347.5,350.2 1347.0,350.2 1346.5,350.2 1346.0,350.2 1345.5,350.2 1345.0,350.2 1344.5,350.2 1344.0,350.2 1343.5,350.2 1343.0,350.2 1342.5,350.2 1342.0,350.2 1341.5,350.2 1341.0,350.2 1340.5,350.2 1340.0,350.2 1339.5,350.1 1339.0,349.7 1338.5,349.2 1338.0,348.8 1337.5,348.3 1337.0,347.9 1336.5,347.4 1336.0,347.0 1335.5,346.5 1335.0,346.1 1334.5,345.6 1334.0,345.2 1333.5,344.8 1333.0,344.3 1332.5,343.9 1332.0,343.4 1331.5,343.0 1331.0,342.5 1330.5,342.1 1330.0,341.6 1329.5,341.2 1329.0,340.9 1328.5,340.8 1328.0,340.6 1327.5,340.4 1327.0,340.2 1326.5,340.0 1326.0,339.8 1325.5,339.6 1325.0,339.4 1324.5,339.2 1324.0,339.1 1323.5,338.9 1323.0,338.7 1322.5,338.5 1322.0,338.3 1321.5,338.1 1321.0,337.9 1320.5,337.7 1320.0,337.5 1319.5,337.2 1319.0,337.0 1318.5,336.7 1318.0,336.5 1317.5,336.2 1317.0,336.0 1316.5,335.7 1316.0,335.5 1315.5,335.2 1315.0,335.0 1314.5,334.7 1314.0,334.5 1313.5,334.2 1313.0,334.0 1312.5,333.7 1312.0,333.5 1311.5,333.2 1311.0,333.0 1310.5,332.9 1310.0,332.7 1309.5,332.6 1309.0,332.4 1308.5,332.3 1308.0,332.2 1307.5,332.0 1307.0,331.9 1306.5,331.7 1306.0,331.6 1305.5,331.5 1305.0,331.3 1304.5,331.2 1304.0,331.0 1303.5,330.9 1303.0,330.7 1302.5,330.6 1302.0,330.5 1301.5,330.3 1301.0,330.2 1300.5,330.2 1300.0,330.2 1299.5,330.2 1299.0,330.2 1298.5,330.2 1298.0,330.2 1297.5,330.2 1297.0,330.2 1296.5,330.2 1296.0,330.2 1295.5,330.2 1295.0,330.2 1294.5,330.2 1294.0,330.2 1293.5,330.2 1293.0,330.2 1292.5,330.2 1292.0,330.2 1291.5,330.2 1291.0,330.2 1290.5,330.2 1290.0,330.2 1289.5,330.2 1289.0,330.2 1288.5,330.2 1288.0,330.2 1287.5,330.2 1287.0,330.2 1286.5,330.2 1286.0,330.2 1285.5,330.2 1285.0,330.2 1284.5,330.2 1284.0,330.2 1283.5,330.2 1283.0,330.2 1282.5,330.2 1282.0,330.2 1281.5,330.2 1281.0,330.2 1280.5,330.2 1280.0,330.2 1279.5,330.2 1279.0,330.2 1278.5,330.2 1278.0,330.2 1277.5,330.2 1277.0,330.2 1276.5,330.2 1276.0,330.2 1275.5,330.2 1275.0,330.2 1274.5,330.2 1274.0,330.2 1273.5,330.2 1273.0,330.2 1272.5,330.2 1272.0,330.2 1271.5,330.2 1271.0,330.2 1270.5,330.2 1270.0,330.2 1269.5,330.2 1269.0,330.2 1268.5,330.2 1268.0,330.2 1267.5,330.2 1267.0,330.2 1266.5,330.2 1266.0,330.2 1265.5,330.2 1265.0,330.2 1264.5,330.2 1264.0,330.2 1263.5,330.1 1263.0,330.0 1262.5,329.8 1262.0,329.6 1261.5,329.4 1261.0,329.3 1260.5,329.1 1260.0,328.9 1259.5,328.7 1259.0,328.5 1258.5,328.4 1258.0,328.2 1257.5,328.0 1257.0,327.8 1256.5,327.7 1256.0,327.5 1255.5,327.3 1255.0,327.1 1254.5,327.0 1254.0,327.0 1253.5,326.9 1253.0,326.9 1252.5,326.8 1252.0,326.8 1251.5,326.8 1251.0,326.7 1250.5,326.7 1250.0,326.6 1249.5,326.6 1249.0,326.6 1248.5,326.5 1248.0,326.5 1247.5,326.5 1247.0,326.4 1246.5,326.4 1246.0,326.3 1245.5,326.3 1245.0,326.2 1244.5,326.2 1244.0,326.1 1243.5,326.1 1243.0,326.0 1242.5,326.0 1242.0,325.9 1241.5,325.9 1241.0,325.8 1240.5,325.8 1240.0,325.7 1239.5,325.7 1239.0,325.6 1238.5,325.5 1238.0,325.5 1237.5,325.4 1237.0,325.4 1236.5,325.3 1236.0,325.3 1235.5,325.2 1235.0,324.9 1234.5,324.4 1234.0,323.9 1233.5,323.4 1233.0,322.9 1232.5,322.4 1232.0,321.9 1231.5,321.4 1231.0,320.9 1230.5,320.3 1230.0,319.8 1229.5,319.3 1229.0,318.8 1228.5,318.3 1228.0,317.8 1227.5,317.3 1227.0,316.8 1226.5,316.3 1226.0,315.9 1225.5,315.6 1225.0,315.2 1224.5,314.9 1224.0,314.6 1223.5,314.2 1223.0,313.9 1222.5,313.6 1222.0,313.2 1221.5,312.9 1221.0,312.6 1220.5,312.2 1220.0,311.9 1219.5,311.6 1219.0,311.2 1218.5,310.9 1218.0,310.6 1217.5,310.2 1217.0,309.9 1216.5,309.6 1216.0,309.2 1215.5,308.4 1215.0,307.7 1214.5,307.0 1214.0,306.3 1213.5,305.6 1213.0,304.8 1212.5,304.1 1212.0,303.4 1211.5,302.7 1211.0,302.0 1210.5,301.2 1210.0,300.5 1209.5,299.8 1209.0,299.1 1208.5,298.4 1208.0,297.6 1207.5,296.9 1207.0,296.2 1206.5,296.2 1206.0,296.2 1205.5,296.2 1205.0,296.2 1204.5,296.2 1204.0,296.2 1203.5,296.2 1203.0,296.2 1202.5,296.2 1202.0,296.2 1201.5,296.2 1201.0,296.2 1200.5,296.2 1200.0,296.2 1199.5,296.2 1199.0,296.2 1198.5,296.2 1198.0,296.2 1197.5,296.2 1197.0,296.2 1196.5,296.2 1196.0,296.2 1195.5,296.2 1195.0,296.2 1194.5,296.2 1194.0,296.2 1193.5,296.2 1193.0,296.2 1192.5,296.1 1192.0,296.1 1191.5,296.1 1191.0,296.1 1190.5,296.1 1190.0,296.1 1189.5,296.1 1189.0,296.1 1188.5,296.1 1188.0,296.1 1187.5,296.1 1187.0,296.1 1186.5,296.1 1186.0,296.1 1185.5,296.1 1185.0,296.1 1184.5,296.1 1184.0,296.1 1183.5,296.1 1183.0,296.1 1182.5,296.1 1182.0,296.1 1181.5,296.1 1181.0,296.1 1180.5,296.1 1180.0,296.1 1179.5,296.1 1179.0,296.1 1178.5,296.1 1178.0,296.0 1177.5,295.9 1177.0,295.7 1176.5,295.6 1176.0,295.5 1175.5,295.4 1175.0,295.2 1174.5,295.1 1174.0,295.0 1173.5,294.9 1173.0,294.7 1172.5,294.6 1172.0,294.5 1171.5,294.4 1171.0,294.2 1170.5,294.1 1170.0,294.0 1169.5,293.9 1169.0,293.8 1168.5,293.6 1168.0,293.5 1167.5,293.4 1167.0,293.3 1166.5,293.1 1166.0,293.0 1165.5,292.9 1165.0,292.8 1164.5,292.6 1164.0,292.5 1163.5,292.4 1163.0,292.3 1162.5,292.1 1162.0,292.0 1161.5,291.9 1161.0,291.8 1160.5,291.6 1160.0,291.6 1159.5,291.5 1159.0,291.5 1158.5,291.5 1158.0,291.4 1157.5,291.4 1157.0,291.4 1156.5,291.4 1156.0,291.3 1155.5,291.3 1155.0,291.3 1154.5,291.2 1154.0,291.2 1153.5,291.2 1153.0,291.1 1152.5,291.1 1152.0,291.1 1151.5,291.0 1151.0,291.0 1150.5,291.0 1150.0,290.9 1149.5,290.9 1149.0,290.9 1148.5,290.8 1148.0,290.8 1147.5,290.8 1147.0,290.7 1146.5,290.7 1146.0,290.7 1145.5,290.6 1145.0,290.6 1144.5,290.6 1144.0,290.5 1143.5,290.5 1143.0,290.5 1142.5,290.4 1142.0,290.4 1141.5,290.4 1141.0,290.3 1140.5,290.3 1140.0,290.2 1139.5,290.0 1139.0,289.8 1138.5,289.6 1138.0,289.4 1137.5,289.2 1137.0,289.1 1136.5,288.9 1136.0,288.7 1135.5,288.5 1135.0,288.3 1134.5,288.2 1134.0,288.0 1133.5,287.8 1133.0,287.6 1132.5,287.4 1132.0,287.3 1131.5,287.1 1131.0,286.9 1130.5,286.9 1130.0,286.8 1129.5,286.7 1129.0,286.6 1128.5,286.5 1128.0,286.4 1127.5,286.3 1127.0,286.2 1126.5,286.1 1126.0,286.0 1125.5,285.9 1125.0,285.8 1124.5,285.7 1124.0,285.6 1123.5,285.5 1123.0,285.5 1122.5,285.4 1122.0,285.3 1121.5,285.2 1121.0,285.1 1120.5,285.0 1120.0,284.9 1119.5,284.8 1119.0,284.7 1118.5,284.6 1118.0,284.5 1117.5,284.4 1117.0,284.3 1116.5,284.2 1116.0,284.2 1115.5,284.1 1115.0,284.0 1114.5,283.9 1114.0,283.8 1113.5,283.7 1113.0,283.6 1112.5,283.5 1112.0,283.4 1111.5,283.3 1111.0,283.2 1110.5,283.1 1110.0,283.0 1109.5,282.9 1109.0,282.8 1108.5,282.8 1108.0,282.7 1107.5,282.6 1107.0,282.5 1106.5,282.4 1106.0,282.3 1105.5,282.2 1105.0,282.1 1104.5,282.0 1104.0,281.9 1103.5,281.8 1103.0,281.7 1102.5,281.6 1102.0,281.6 1101.5,281.6 1101.0,281.6 1100.5,281.6 1100.0,281.6 1099.5,281.6 1099.0,281.6 1098.5,281.6 1098.0,281.6 1097.5,281.5 1097.0,281.5 1096.5,281.5 1096.0,281.5 1095.5,281.5 1095.0,281.5 1094.5,281.5 1094.0,281.5 1093.5,281.5 1093.0,281.5 1092.5,281.5 1092.0,281.5 1091.5,281.5 1091.0,281.5 1090.5,281.5 1090.0,281.5 1089.5,281.5 1089.0,281.5 1088.5,281.5 1088.0,281.4 1087.5,281.4 1087.0,281.4 1086.5,281.4 1086.0,281.4 1085.5,281.4 1085.0,281.4 1084.5,281.4 1084.0,281.4 1083.5,281.4 1083.0,281.4 1082.5,281.4 1082.0,281.4 1081.5,281.4 1081.0,281.4 1080.5,281.4 1080.0,281.4 1079.5,281.4 1079.0,281.3 1078.5,281.3 1078.0,281.3 1077.5,281.3 1077.0,281.3 1076.5,281.3 1076.0,281.3 1075.5,281.3 1075.0,281.3 1074.5,281.3 1074.0,281.3 1073.5,281.3 1073.0,281.3 1072.5,281.3 1072.0,281.3 1071.5,281.3 1071.0,281.3 1070.5,281.3 1070.0,281.3 1069.5,281.2 1069.0,281.2 1068.5,281.2 1068.0,281.2 1067.5,281.2 1067.0,281.2 1066.5,281.2 1066.0,281.2 1065.5,281.2 1065.0,281.2 1064.5,281.1 1064.0,281.1 1063.5,281.0 1063.0,281.0 1062.5,280.9 1062.0,280.9 1061.5,280.8 1061.0,280.8 1060.5,280.7 1060.0,280.7 1059.5,280.6 1059.0,280.6 1058.5,280.5 1058.0,280.5 1057.5,280.4 1057.0,280.4 1056.5,280.3 1056.0,280.2 1055.5,280.2 1055.0,280.1 1054.5,280.1 1054.0,280.0 1053.5,280.0 1053.0,279.9 1052.5,279.9 1052.0,279.8 1051.5,279.8 1051.0,279.7 1050.5,279.7 1050.0,279.6 1049.5,279.6 1049.0,279.5 1048.5,279.5 1048.0,279.4 1047.5,279.4 1047.0,279.3 1046.5,279.3 1046.0,279.2 1045.5,279.1 1045.0,278.9 1044.5,278.8 1044.0,278.7 1043.5,278.6 1043.0,278.4 1042.5,278.3 1042.0,278.2 1041.5,278.0 1041.0,277.9 1040.5,277.8 1040.0,277.7 1039.5,277.5 1039.0,277.4 1038.5,277.3 1038.0,277.1 1037.5,277.0 1037.0,276.9 1036.5,276.8 1036.0,276.6 1035.5,276.5 1035.0,276.4 1034.5,276.2 1034.0,276.1 1033.5,276.0 1033.0,275.8 1032.5,275.7 1032.0,275.6 1031.5,275.5 1031.0,275.3 1030.5,275.2 1030.0,275.1 1029.5,274.9 1029.0,274.8 1028.5,274.7 1028.0,274.6 1027.5,274.4 1027.0,274.3 1026.5,273.4 1026.0,272.4 1025.5,271.4 1025.0,270.5 1024.5,269.6 1024.0,268.6 1023.5,267.7 1023.0,266.7 1022.5,265.8 1022.0,264.8 1021.5,263.9 1021.0,262.9 1020.5,261.9 1020.0,261.0 1019.5,260.1 1019.0,259.1 1018.5,258.2 1018.0,257.2 1017.5,256.2 1017.0,255.3 1016.5,255.3 1016.0,255.3 1015.5,255.2 1015.0,255.2 1014.5,255.2 1014.0,255.2 1013.5,255.1 1013.0,255.1 1012.5,255.1 1012.0,255.1 1011.5,255.0 1011.0,255.0 1010.5,255.0 1010.0,255.0 1009.5,254.9 1009.0,254.9 1008.5,254.9 1008.0,254.9 1007.5,254.9 1007.0,254.8 1006.5,254.8 1006.0,254.8 1005.5,254.8 1005.0,254.7 1004.5,254.7 1004.0,254.7 1003.5,254.7 1003.0,254.6 1002.5,254.6 1002.0,254.6 1001.5,254.6 1001.0,254.5 1000.5,254.5 1000.0,254.5 999.5,254.5 999.0,254.4 998.5,254.4 998.0,254.4 997.5,254.4 997.0,254.4 996.5,254.3 996.0,254.3 995.5,254.3 995.0,254.3 994.5,254.2 994.0,254.2 993.5,254.2 993.0,254.2 992.5,254.1 992.0,254.1 991.5,254.1 991.0,254.1 990.5,254.0 990.0,254.0 989.5,254.0 989.0,254.0 988.5,253.9 988.0,253.9 987.5,253.9 987.0,253.9 986.5,253.9 986.0,253.8 985.5,253.8 985.0,253.8 984.5,253.8 984.0,253.7 983.5,253.7 983.0,253.7 982.5,253.7 982.0,253.6 981.5,253.6 981.0,253.6 980.5,253.6 980.0,253.5 979.5,253.5 979.0,253.5 978.5,253.5 978.0,253.5 977.5,253.5 977.0,253.5 976.5,253.5 976.0,253.5 975.5,253.5 975.0,253.5 974.5,253.5 974.0,253.5 973.5,253.5 973.0,253.5 972.5,253.5 972.0,253.5 971.5,253.5 971.0,253.5 970.5,253.5 970.0,253.5 969.5,253.5 969.0,253.5 968.5,253.5 968.0,253.5 967.5,253.5 967.0,253.5 966.5,253.5 966.0,253.5 965.5,253.5 965.0,253.5 964.5,253.5 964.0,253.5 963.5,253.5 963.0,253.5 962.5,253.5 962.0,253.5 961.5,253.5 961.0,253.5 960.5,253.5 960.0,253.5 959.5,253.5 959.0,253.5 958.5,253.5 958.0,253.5 957.5,253.5 957.0,253.5 956.5,253.5 956.0,253.5 955.5,253.5 955.0,253.5 954.5,253.5 954.0,253.5 953.5,253.5 953.0,253.5 952.5,253.5 952.0,253.5 951.5,253.5 951.0,253.5 950.5,253.5 950.0,253.5 949.5,253.5 949.0,253.5 948.5,253.5 948.0,253.5 947.5,253.5 947.0,253.5 946.5,253.5 946.0,253.5 945.5,253.5 945.0,253.5 944.5,253.5 944.0,253.5 943.5,253.5 943.0,253.5 942.5,253.5 942.0,253.5 941.5,253.5 941.0,253.5 940.5,253.5 940.0,253.5 939.5,253.5 939.0,253.5 938.5,253.5 938.0,253.5 937.5,253.5 937.0,253.5 936.5,253.5 936.0,253.5 935.5,253.5 935.0,253.5 934.5,253.5 934.0,253.5 933.5,253.5 933.0,253.5 932.5,253.5 932.0,253.5 931.5,253.5 931.0,253.5 930.5,253.5 930.0,253.5 929.5,253.5 929.0,253.5 928.5,253.5 928.0,253.5 927.5,253.5 927.0,253.4 926.5,253.4 926.0,253.4 925.5,253.4 925.0,253.4 924.5,253.4 924.0,253.4 923.5,253.4 923.0,253.4 922.5,253.4 922.0,253.4 921.5,253.4 921.0,253.4 920.5,253.4 920.0,253.4 919.5,253.4 919.0,253.4 918.5,253.4 918.0,253.4 917.5,253.4 917.0,253.4 916.5,253.4 916.0,253.4 915.5,253.4 915.0,253.4 914.5,253.4 914.0,253.4 913.5,253.4 913.0,253.4 912.5,253.4 912.0,253.4 911.5,253.4 911.0,253.4 910.5,253.4 910.0,253.4 909.5,253.4 909.0,253.4 908.5,253.4 908.0,253.4 907.5,253.4 907.0,253.4 906.5,253.4 906.0,253.4 905.5,253.4 905.0,253.4 904.5,253.4 904.0,253.4 903.5,253.4 903.0,253.4 902.5,253.4 902.0,253.4 901.5,253.4 901.0,253.4 900.5,253.4 900.0,253.4 899.5,253.4 899.0,253.4 898.5,253.4 898.0,253.4 897.5,253.4 897.0,253.4 896.5,253.4 896.0,253.4 895.5,253.4 895.0,253.4 894.5,253.4 894.0,253.4 893.5,253.4 893.0,253.4 892.5,253.4 892.0,253.4 891.5,253.4 891.0,253.4 890.5,253.4 890.0,253.4 889.5,253.4 889.0,253.4 888.5,253.4 888.0,253.4 887.5,253.4 887.0,253.4 886.5,253.4 886.0,253.4 885.5,253.4 885.0,253.4 884.5,253.4 884.0,253.4 883.5,253.4 883.0,253.4 882.5,253.4 882.0,253.4 881.5,253.4 881.0,253.4 880.5,253.4 880.0,253.4 879.5,253.4 879.0,253.4 878.5,253.4 878.0,253.4 877.5,253.4 877.0,253.4 876.5,253.4 876.0,253.4 875.5,253.0 875.0,252.4 874.5,251.8 874.0,251.2 873.5,250.6 873.0,250.0 872.5,249.4 872.0,248.8 871.5,248.2 871.0,247.6 870.5,247.0 870.0,246.4 869.5,245.8 869.0,245.2 868.5,244.6 868.0,244.0 867.5,243.3 867.0,242.7 866.5,242.5 866.0,242.5 865.5,242.5 865.0,242.5 864.5,242.5 864.0,242.5 863.5,242.5 863.0,242.5 862.5,242.5 862.0,242.5 861.5,242.5 861.0,242.5 860.5,242.5 860.0,242.5 859.5,242.5 859.0,242.5 858.5,242.5 858.0,242.5 857.5,242.5 857.0,242.5 856.5,242.4 856.0,242.2 855.5,242.0 855.0,241.8 854.5,241.7 854.0,241.5 853.5,241.3 853.0,241.1 852.5,240.9 852.0,240.8 851.5,240.6 851.0,240.4 850.5,240.2 850.0,240.0 849.5,239.9 849.0,239.7 848.5,239.5 848.0,239.3 847.5,239.0 847.0,238.6 846.5,238.1 846.0,237.7 845.5,237.2 845.0,236.8 844.5,236.3 844.0,235.9 843.5,235.4 843.0,235.0 842.5,234.5 842.0,234.1 841.5,233.6 841.0,233.2 840.5,232.7 840.0,232.3 839.5,231.8 839.0,231.4 838.5,230.9 838.0,230.5 837.5,230.0 837.0,229.6 836.5,229.4 836.0,229.4 835.5,229.4 835.0,229.4 834.5,229.4 834.0,229.4 833.5,229.4 833.0,229.4 832.5,229.4 832.0,229.4 831.5,229.4 831.0,229.4 830.5,229.4 830.0,229.4 829.5,229.4 829.0,229.4 828.5,229.4 828.0,229.4 827.5,229.4 827.0,229.4 826.5,229.4 826.0,229.4 825.5,229.4 825.0,229.4 824.5,229.4 824.0,229.4 823.5,229.4 823.0,229.4 822.5,229.4 822.0,229.4 821.5,229.4 821.0,229.4 820.5,229.4 820.0,229.4 819.5,229.4 819.0,229.4 818.5,229.4 818.0,229.4 817.5,229.4 817.0,229.4 816.5,229.4 816.0,229.4 815.5,229.4 815.0,229.4 814.5,229.4 814.0,229.4 813.5,229.4 813.0,229.4 812.5,229.4 812.0,229.4 811.5,229.4 811.0,229.4 810.5,229.4 810.0,229.4 809.5,229.4 809.0,229.4 808.5,229.4 808.0,229.4 807.5,229.4 807.0,229.4 806.5,229.4 806.0,229.4 805.5,229.4 805.0,229.4 804.5,229.4 804.0,229.4 803.5,229.4 803.0,229.4 802.5,229.4 802.0,229.4 801.5,229.4 801.0,229.4 800.5,229.4 800.0,229.4 799.5,229.4 799.0,229.4 798.5,229.4 798.0,229.4 797.5,229.4 797.0,229.4 796.5,229.4 796.0,229.4 795.5,229.4 795.0,229.4 794.5,229.4 794.0,229.4 793.5,229.4 793.0,229.4 792.5,229.4 792.0,229.4 791.5,229.4 791.0,229.4 790.5,229.4 790.0,229.1 789.5,228.9 789.0,228.7 788.5,228.4 788.0,228.2 787.5,228.0 787.0,227.7 786.5,227.5 786.0,227.3 785.5,227.1 785.0,226.8 784.5,226.6 784.0,226.4 783.5,226.1 783.0,225.9 782.5,225.7 782.0,225.5 781.5,225.2 781.0,225.0 780.5,224.8 780.0,224.5 779.5,224.4 779.0,224.4 778.5,224.4 778.0,224.4 777.5,224.4 777.0,224.4 776.5,224.4 776.0,224.4 775.5,224.4 775.0,224.4 774.5,224.4 774.0,224.4 773.5,224.4 773.0,224.4 772.5,224.4 772.0,224.4 771.5,224.4 771.0,224.2 770.5,224.0 770.0,223.8 769.5,223.7 769.0,223.5 768.5,223.3 768.0,223.1 767.5,222.9 767.0,222.7 766.5,222.5 766.0,222.3 765.5,222.2 765.0,222.0 764.5,221.8 764.0,221.6 763.5,221.4 763.0,221.2 762.5,221.0 762.0,220.8 761.5,220.7 761.0,220.5 760.5,220.4 760.0,220.2 759.5,220.1 759.0,219.9 758.5,219.8 758.0,219.6 757.5,219.5 757.0,219.3 756.5,219.2 756.0,219.0 755.5,218.9 755.0,218.7 754.5,218.6 754.0,218.4 753.5,218.3 753.0,218.1 752.5,218.0 752.0,217.7 751.5,217.3 751.0,217.0 750.5,216.7 750.0,216.3 749.5,216.0 749.0,215.7 748.5,215.4 748.0,215.0 747.5,214.7 747.0,214.4 746.5,214.0 746.0,213.7 745.5,213.4 745.0,213.0 744.5,212.7 744.0,212.4 743.5,212.1 743.0,211.7 742.5,211.4 742.0,211.1 741.5,210.8 741.0,210.7 740.5,210.6 740.0,210.5 739.5,210.4 739.0,210.3 738.5,210.2 738.0,210.0 737.5,209.9 737.0,209.8 736.5,209.7 736.0,209.6 735.5,209.5 735.0,209.4 734.5,209.3 734.0,209.2 733.5,209.1 733.0,209.0 732.5,208.9 732.0,207.6 731.5,206.3 731.0,205.0 730.5,203.7 730.0,202.4 729.5,201.1 729.0,199.8 728.5,198.5 728.0,197.2 727.5,195.8 727.0,194.5 726.5,193.2 726.0,191.9 725.5,190.6 725.0,189.3 724.5,188.0 724.0,186.7 723.5,185.4 723.0,185.4 722.5,185.4 722.0,185.4 721.5,185.4 721.0,185.4 720.5,185.4 720.0,185.4 719.5,185.4 719.0,185.4 718.5,185.4 718.0,185.4 717.5,185.4 717.0,185.4 716.5,185.4 716.0,185.4 715.5,185.4 715.0,185.4 714.5,185.4 714.0,185.4 713.5,185.4 713.0,185.4 712.5,185.4 712.0,185.4 711.5,185.4 711.0,185.4 710.5,185.4 710.0,185.4 709.5,185.4 709.0,185.4 708.5,185.4 708.0,185.4 707.5,185.4 707.0,185.4 706.5,185.4 706.0,185.4 705.5,185.4 705.0,185.2 704.5,185.0 704.0,184.7 703.5,184.4 703.0,184.1 702.5,183.8 702.0,183.6 701.5,183.3 701.0,183.0 700.5,182.7 700.0,182.5 699.5,182.2 699.0,181.9 698.5,181.6 698.0,181.3 697.5,181.1 697.0,180.8 696.5,180.5 696.0,180.2 695.5,180.0 695.0,179.8 694.5,179.6 694.0,179.4 693.5,179.3 693.0,179.1 692.5,178.9 692.0,178.8 691.5,178.6 691.0,178.4 690.5,178.3 690.0,178.1 689.5,178.1 689.0,178.1 688.5,178.1 688.0,178.1 687.5,178.1 687.0,178.1 686.5,178.1 686.0,178.1 685.5,178.1 685.0,178.1 684.5,178.1 684.0,178.1 683.5,178.1 683.0,178.1 682.5,178.1 682.0,178.1 681.5,178.1 681.0,178.1 680.5,178.1 680.0,178.1 679.5,178.1 679.0,178.1 678.5,178.1 678.0,178.1 677.5,178.1 677.0,178.1 676.5,178.1 676.0,178.1 675.5,178.1 675.0,178.1 674.5,178.1 674.0,178.1 673.5,178.1 673.0,178.1 672.5,178.1 672.0,178.1 671.5,178.1 671.0,178.1 670.5,178.1 670.0,178.1 669.5,178.1 669.0,178.1 668.5,178.1 668.0,178.1 667.5,177.8 667.0,177.5 666.5,177.2 666.0,176.9 665.5,176.7 665.0,176.5 664.5,176.3 664.0,176.1 663.5,176.0 663.0,175.8 662.5,175.7 662.0,175.5 661.5,175.3 661.0,175.2 660.5,175.0 660.0,174.8 659.5,174.7 659.0,174.5 658.5,174.4 658.0,174.2 657.5,174.0 657.0,173.6 656.5,173.2 656.0,172.9 655.5,172.5 655.0,172.2 654.5,171.8 654.0,171.5 653.5,171.1 653.0,170.8 652.5,170.4 652.0,170.1 651.5,169.7 651.0,169.4 650.5,169.0 650.0,168.6 649.5,168.3 649.0,167.9 648.5,167.6 648.0,167.3 647.5,167.3 647.0,167.3 646.5,167.3 646.0,167.3 645.5,167.3 645.0,167.3 644.5,167.3 644.0,167.3 643.5,167.3 643.0,167.3 642.5,167.3 642.0,167.3 641.5,167.3 641.0,167.3 640.5,167.3 640.0,167.3 639.5,167.3 639.0,167.3 638.5,167.3 638.0,167.3 637.5,167.3 637.0,167.3 636.5,167.3 636.0,167.3 635.5,167.3 635.0,167.3 634.5,167.3 634.0,167.3 633.5,167.3 633.0,167.3 632.5,167.3 632.0,167.3 631.5,167.3 631.0,167.3 630.5,167.5 630.0,168.0 629.5,168.3 629.0,168.3 628.5,168.3 628.0,168.3 627.5,168.3 627.0,168.4 626.5,168.4 626.0,168.4 625.5,168.4 625.0,168.4 624.5,168.4 624.0,168.4 623.5,168.4 623.0,168.5 622.5,168.5 622.0,168.5 621.5,168.5 621.0,168.5 620.5,168.5 620.0,168.5 619.5,168.5 619.0,168.6 618.5,168.6 618.0,168.6 617.5,168.6 617.0,168.6 616.5,168.6 616.0,168.6 615.5,168.6 615.0,168.6 614.5,168.7 614.0,168.7 613.5,168.7 613.0,168.7 612.5,168.7 612.0,168.7 611.5,168.7 611.0,168.7 610.5,168.8 610.0,168.8 609.5,168.8 609.0,168.8 608.5,168.8 608.0,168.8 607.5,168.8 607.0,168.8 606.5,168.8 606.0,168.9 605.5,168.9 605.0,168.9 604.5,168.9 604.0,168.9 603.5,168.9 603.0,168.9 602.5,168.9 602.0,169.0 601.5,169.0 601.0,169.0 600.5,169.0 600.0,169.0 599.5,169.3 599.0,169.5 598.5,169.7 598.0,169.9 597.5,170.1 597.0,170.3 596.5,170.5 596.0,170.7 595.5,170.9 595.0,171.2 594.5,171.4 594.0,171.6 593.5,171.8 593.0,172.0 592.5,172.2 592.0,172.4 591.5,172.6 591.0,172.8 590.5,172.8 590.0,172.8 589.5,172.8 589.0,172.8 588.5,172.8 588.0,172.8 587.5,172.8 587.0,172.8 586.5,172.8 586.0,172.8 585.5,172.8 585.0,172.8 584.5,172.8 584.0,172.8 583.5,172.8 583.0,172.8 582.5,172.8 582.0,172.8 581.5,172.8 581.0,172.8 580.5,172.8 580.0,172.8 579.5,172.8 579.0,172.8 578.5,172.8 578.0,172.8 577.5,172.8 577.0,172.8 576.5,172.8 576.0,172.8 575.5,172.8 575.0,172.8 574.5,172.8 574.0,172.8 573.5,172.8 573.0,172.8 572.5,172.8 572.0,172.8 571.5,172.8 571.0,172.8 570.5,172.8 570.0,172.8 569.5,172.8 569.0,172.8 568.5,172.8 568.0,172.8 567.5,172.8 567.0,172.8 566.5,172.8 566.0,172.8 565.5,172.8 565.0,172.8 564.5,172.8 564.0,172.8 563.5,172.8 563.0,172.8 562.5,172.8 562.0,172.8 561.5,172.8 561.0,172.8 560.5,172.8 560.0,172.8 559.5,172.8 559.0,172.8 558.5,172.8 558.0,172.8 557.5,172.8 557.0,172.8 556.5,172.8 556.0,172.8 555.5,172.8 555.0,172.8 554.5,172.8 554.0,172.8 553.5,172.8 553.0,172.8 552.5,172.8 552.0,172.8 551.5,172.8 551.0,172.8 550.5,172.8 550.0,172.8 549.5,172.8 549.0,172.8 548.5,172.8 548.0,172.8 547.5,172.8 547.0,172.8 546.5,172.8 546.0,172.8 545.5,172.8 545.0,172.8 544.5,172.8 544.0,172.8 543.5,172.8 543.0,172.8 542.5,172.8 542.0,172.8 541.5,172.8 541.0,172.8 540.5,172.8 540.0,172.8 539.5,172.8 539.0,172.8 538.5,172.8 538.0,172.8 537.5,172.8 537.0,172.8 536.5,172.8 536.0,172.8 535.5,172.8 535.0,172.8 534.5,172.8 534.0,172.8 533.5,172.8 533.0,172.8 532.5,172.8 532.0,172.8 531.5,172.8 531.0,172.8 530.5,172.8 530.0,172.8 529.5,172.8 529.0,172.8 528.5,172.8 528.0,172.8 527.5,172.8 527.0,172.8 526.5,172.8 526.0,172.8 525.5,172.8 525.0,172.8 524.5,172.8 524.0,172.8 523.5,172.8 523.0,172.8 522.5,172.8 522.0,172.8 521.5,172.8 521.0,172.8 520.5,172.8 520.0,172.8 519.5,172.8 519.0,172.8 518.5,172.8 518.0,172.8 517.5,172.8 517.0,172.8 516.5,172.8 516.0,172.8 515.5,172.8 515.0,172.8 514.5,172.8 514.0,172.8 513.5,172.8 513.0,172.8 512.5,172.8 512.0,172.8 511.5,172.8 511.0,172.8 510.5,172.7 510.0,172.7 509.5,172.7 509.0,172.7 508.5,172.7 508.0,172.7 507.5,172.7 507.0,172.7 506.5,172.7 506.0,172.7 505.5,172.7 505.0,172.7 504.5,172.7 504.0,172.7 503.5,172.7 503.0,172.7 502.5,172.7 502.0,172.7 501.5,172.7 501.0,172.7 500.5,172.7 500.0,172.7 499.5,172.7 499.0,172.7 498.5,172.7 498.0,172.7 497.5,172.7 497.0,172.7 496.5,172.7 496.0,172.7 495.5,172.7 495.0,172.7 494.5,172.7 494.0,172.7 493.5,172.7 493.0,172.7 492.5,172.7 492.0,172.7 491.5,172.7 491.0,172.7 490.5,172.7 490.0,172.7 489.5,172.7 489.0,172.7 488.5,172.7 488.0,172.7 487.5,172.7 487.0,172.7 486.5,172.7 486.0,172.7 485.5,172.7 485.0,172.7 484.5,172.7 484.0,172.7 483.5,172.7 483.0,172.7 482.5,172.7 482.0,172.7 481.5,172.7 481.0,172.7 480.5,172.7 480.0,172.7 479.5,172.7 479.0,172.7 478.5,172.7 478.0,172.7 477.5,172.7 477.0,172.7 476.5,172.7 476.0,172.7 475.5,172.7 475.0,172.7 474.5,172.7 474.0,172.7 473.5,172.7 473.0,172.7 472.5,172.7 472.0,172.7 471.5,172.7 471.0,172.7 470.5,172.7 470.0,172.7 469.5,172.7 469.0,172.7 468.5,172.7 468.0,172.7 467.5,172.7 467.0,172.7 466.5,172.7 466.0,172.7 465.5,172.7 465.0,172.7 464.5,172.7" fill="#072828"/>
<polygon points="1518.5,412.5 1519.0,412.5 1519.5,412.5 1520.0,412.4 1520.5,412.4 1521.0,412.4 1521.5,412.4 1522.0,412.4 1522.5,412.3 1523.0,412.3 1523.5,412.3 1524.0,412.3 1524.5,412.2 1525.0,412.2 1525.5,412.2 1526.0,412.2 1526.5,412.2 1527.0,412.1 1527.5,412.1 1528.0,412.1 1528.5,412.1 1529.0,412.0 1529.5,412.0 1530.0,412.0 1530.0,414.8 1529.5,414.7 1529.0,414.7 1528.5,414.6 1528.0,414.5 1527.5,414.4 1527.0,414.4 1526.5,414.3 1526.0,414.2 1525.5,414.2 1525.0,414.1 1524.5,414.0 1524.0,414.0 1523.5,413.9 1523.0,413.8 1522.5,413.7 1522.0,413.7 1521.5,413.6 1521.0,413.5 1520.5,413.5 1520.0,413.4 1519.5,413.3 1519.0,413.2 1518.5,412.9" fill="#300010"/>
<line x1="4.5" y1="188.6" x2="4.5" y2="197.4" stroke="#8c0a32" stroke-width="1"/>
<line x1="13.5" y1="184.8" x2="13.5" y2="197.4" stroke="#8c0a32" stroke-width="1"/>
<line x1="23.5" y1="184.0" x2="23.5" y2="197.4" stroke="#8c0a32" stroke-width="1"/>
<line x1="32.5" y1="183.7" x2="32.5" y2="197.4" stroke="#8c0a32" stroke-width="1"/>
<line x1="42.5" y1="182.1" x2="42.5" y2="197.4" stroke="#8c0a32" stroke-width="1"/>
<line x1="51.5" y1="181.6" x2="51.5" y2="197.4" stroke="#8c0a32" stroke-width="1"/>
<line x1="61.5" y1="181.1" x2="61.5" y2="197.4" stroke="#8c0a32" stroke-width="1"/>
<line x1="70.5" y1="180.6" x2="70.5" y2="197.4" stroke="#8c0a32" stroke-width="1"/>
<line x1="79.5" y1="180.6" x2="79.5" y2="197.3" stroke="#8c0a32" stroke-width="1"/>
<line x1="89.5" y1="184.0" x2="89.5" y2="192.4" stroke="#8c0a32" stroke-width="1"/>
<line x1="98.5" y1="184.2" x2="98.5" y2="192.4" stroke="#8c0a32" stroke-width="1"/>
<line x1="108.5" y1="185.6" x2="108.5" y2="192.4" stroke="#8c0a32" stroke-width="1"/>
<line x1="117.5" y1="185.5" x2="117.5" y2="192.4" stroke="#8c0a32" stroke-width="1"/>
<line x1="127.5" y1="185.5" x2="127.5" y2="192.4" stroke="#8c0a32" stroke-width="1"/>
<line x1="136.5" y1="185.4" x2="136.5" y2="192.4" stroke="#8c0a32" stroke-width="1"/>
<line x1="146.5" y1="185.4" x2="146.5" y2="192.4" stroke="#8c0a32" stroke-width="1"/>
<line x1="155.5" y1="185.3" x2="155.5" y2="192.4" stroke="#8c0a32" stroke-width="1"/>
<line x1="165.5" y1="185.3" x2="165.5" y2="192.4" stroke="#8c0a32" stroke-width="1"/>
<line x1="174.5" y1="184.9" x2="174.5" y2="192.3" stroke="#8c0a32" stroke-width="1"/>
<line x1="184.5" y1="180.7" x2="184.5" y2="190.2" stroke="#8c0a32" stroke-width="1"/>
<line x1="193.5" y1="179.5" x2="193.5" y2="188.8" stroke="#8c0a32" stroke-width="1"/>
<line x1="203.5" y1="174.5" x2="203.5" y2="180.9" stroke="#8c0a32" stroke-width="1"/>
<line x1="212.5" y1="174.2" x2="212.5" y2="179.6" stroke="#8c0a32" stroke-width="1"/>
<line x1="222.5" y1="173.7" x2="222.5" y2="178.3" stroke="#8c0a32" stroke-width="1"/>
<line x1="231.5" y1="168.5" x2="231.5" y2="177.3" stroke="#8c0a32" stroke-width="1"/>
<line x1="241.5" y1="165.0" x2="241.5" y2="176.5" stroke="#8c0a32" stroke-width="1"/>
<line x1="250.5" y1="165.0" x2="250.5" y2="176.5" stroke="#8c0a32" stroke-width="1"/>
<line x1="259.5" y1="165.0" x2="259.5" y2="176.5" stroke="#8c0a32" stroke-width="1"/>
<line x1="269.5" y1="165.0" x2="269.5" y2="176.5" stroke="#8c0a32" stroke-width="1"/>
<line x1="278.5" y1="165.0" x2="278.5" y2="176.4" stroke="#8c0a32" stroke-width="1"/>
<line x1="288.5" y1="165.0" x2="288.5" y2="176.4" stroke="#8c0a32" stroke-width="1"/>
<line x1="297.5" y1="166.7" x2="297.5" y2="176.4" stroke="#8c0a32" stroke-width="1"/>
<line x1="307.5" y1="166.9" x2="307.5" y2="176.2" stroke="#8c0a32" stroke-width="1"/>
<line x1="316.5" y1="166.9" x2="316.5" y2="175.9" stroke="#8c0a32" stroke-width="1"/>
<line x1="326.5" y1="166.9" x2="326.5" y2="175.7" stroke="#8c0a32" stroke-width="1"/>
<line x1="335.5" y1="166.8" x2="335.5" y2="175.4" stroke="#8c0a32" stroke-width="1"/>
<line x1="345.5" y1="163.8" x2="345.5" y2="175.1" stroke="#8c0a32" stroke-width="1"/>
<line x1="354.5" y1="163.7" x2="354.5" y2="174.8" stroke="#8c0a32" stroke-width="1"/>
<line x1="364.5" y1="163.7" x2="364.5" y2="174.6" stroke="#8c0a32" stroke-width="1"/>
<line x1="373.5" y1="163.7" x2="373.5" y2="174.3" stroke="#8c0a32" stroke-width="1"/>
<line x1="383.5" y1="166.5" x2="383.5" y2="174.0" stroke="#8c0a32" stroke-width="1"/>
<line x1="392.5" y1="166.4" x2="392.5" y2="173.8" stroke="#8c0a32" stroke-width="1"/>
<line x1="402.5" y1="162.5" x2="402.5" y2="173.5" stroke="#8c0a32" stroke-width="1"/>
<line x1="411.5" y1="163.9" x2="411.5" y2="173.2" stroke="#8c0a32" stroke-width="1"/>
<line x1="421.5" y1="164.2" x2="421.5" y2="173.0" stroke="#8c0a32" stroke-width="1"/>
<line x1="430.5" y1="164.5" x2="430.5" y2="172.7" stroke="#8c0a32" stroke-width="1"/>
<line x1="439.5" y1="167.3" x2="439.5" y2="172.7" stroke="#8c0a32" stroke-width="1"/>
<line x1="449.5" y1="167.9" x2="449.5" y2="172.7" stroke="#8c0a32" stroke-width="1"/>
<line x1="458.5" y1="171.0" x2="458.5" y2="172.7" stroke="#8c0a32" stroke-width="1"/>
<line x1="468.5" y1="172.7" x2="468.5" y2="174.0" stroke="#0c706a" stroke-width="1"/>
<line x1="477.5" y1="172.7" x2="477.5" y2="174.8" stroke="#0c706a" stroke-width="1"/>
<line x1="487.5" y1="172.7" x2="487.5" y2="175.5" stroke="#0c706a" stroke-width="1"/>
<line x1="496.5" y1="172.7" x2="496.5" y2="175.3" stroke="#0c706a" stroke-width="1"/>
<line x1="506.5" y1="172.7" x2="506.5" y2="175.2" stroke="#0c706a" stroke-width="1"/>
<line x1="515.5" y1="172.8" x2="515.5" y2="174.8" stroke="#0c706a" stroke-width="1"/>
<line x1="525.5" y1="172.8" x2="525.5" y2="174.5" stroke="#0c706a" stroke-width="1"/>
<line x1="534.5" y1="172.8" x2="534.5" y2="174.5" stroke="#0c706a" stroke-width="1"/>
<line x1="544.5" y1="172.8" x2="544.5" y2="174.5" stroke="#0c706a" stroke-width="1"/>
<line x1="553.5" y1="172.8" x2="553.5" y2="175.2" stroke="#0c706a" stroke-width="1"/>
<line x1="563.5" y1="172.8" x2="563.5" y2="175.6" stroke="#0c706a" stroke-width="1"/>
<line x1="572.5" y1="172.8" x2="572.5" y2="176.4" stroke="#0c706a" stroke-width="1"/>
<line x1="582.5" y1="172.8" x2="582.5" y2="176.4" stroke="#0c706a" stroke-width="1"/>
<line x1="591.5" y1="172.6" x2="591.5" y2="176.5" stroke="#0c706a" stroke-width="1"/>
<line x1="600.5" y1="169.0" x2="600.5" y2="178.1" stroke="#0c706a" stroke-width="1"/>
<line x1="610.5" y1="168.8" x2="610.5" y2="179.2" stroke="#0c706a" stroke-width="1"/>
<line x1="619.5" y1="168.5" x2="619.5" y2="180.2" stroke="#0c706a" stroke-width="1"/>
<line x1="629.5" y1="168.3" x2="629.5" y2="184.9" stroke="#0c706a" stroke-width="1"/>
<line x1="638.5" y1="167.3" x2="638.5" y2="186.7" stroke="#0c706a" stroke-width="1"/>
<line x1="648.5" y1="167.5" x2="648.5" y2="189.4" stroke="#0c706a" stroke-width="1"/>
<line x1="657.5" y1="174.1" x2="657.5" y2="194.7" stroke="#0c706a" stroke-width="1"/>
<line x1="667.5" y1="177.7" x2="667.5" y2="199.0" stroke="#0c706a" stroke-width="1"/>
<line x1="676.5" y1="178.1" x2="676.5" y2="199.0" stroke="#0c706a" stroke-width="1"/>
<line x1="686.5" y1="178.1" x2="686.5" y2="199.0" stroke="#0c706a" stroke-width="1"/>
<line x1="695.5" y1="180.1" x2="695.5" y2="200.9" stroke="#0c706a" stroke-width="1"/>
<line x1="705.5" y1="185.3" x2="705.5" y2="202.0" stroke="#0c706a" stroke-width="1"/>
<line x1="714.5" y1="185.4" x2="714.5" y2="203.0" stroke="#0c706a" stroke-width="1"/>
<line x1="724.5" y1="187.1" x2="724.5" y2="205.7" stroke="#0c706a" stroke-width="1"/>
<line x1="733.5" y1="209.1" x2="733.5" y2="229.2" stroke="#0c706a" stroke-width="1"/>
<line x1="743.5" y1="211.8" x2="743.5" y2="232.5" stroke="#0c706a" stroke-width="1"/>
<line x1="752.5" y1="218.0" x2="752.5" y2="238.5" stroke="#0c706a" stroke-width="1"/>
<line x1="762.5" y1="220.9" x2="762.5" y2="243.1" stroke="#0c706a" stroke-width="1"/>
<line x1="771.5" y1="224.4" x2="771.5" y2="247.6" stroke="#0c706a" stroke-width="1"/>
<line x1="780.5" y1="225.0" x2="780.5" y2="249.4" stroke="#0c706a" stroke-width="1"/>
<line x1="790.5" y1="229.3" x2="790.5" y2="254.2" stroke="#0c706a" stroke-width="1"/>
<line x1="799.5" y1="229.4" x2="799.5" y2="255.0" stroke="#0c706a" stroke-width="1"/>
<line x1="809.5" y1="229.4" x2="809.5" y2="261.4" stroke="#0c706a" stroke-width="1"/>
<line x1="818.5" y1="229.4" x2="818.5" y2="264.8" stroke="#0c706a" stroke-width="1"/>
<line x1="828.5" y1="229.4" x2="828.5" y2="268.1" stroke="#0c706a" stroke-width="1"/>
<line x1="837.5" y1="230.3" x2="837.5" y2="269.6" stroke="#0c706a" stroke-width="1"/>
<line x1="847.5" y1="238.8" x2="847.5" y2="277.0" stroke="#0c706a" stroke-width="1"/>
<line x1="856.5" y1="242.5" x2="856.5" y2="278.4" stroke="#0c706a" stroke-width="1"/>
<line x1="866.5" y1="242.5" x2="866.5" y2="278.8" stroke="#0c706a" stroke-width="1"/>
<line x1="875.5" y1="253.3" x2="875.5" y2="283.3" stroke="#0c706a" stroke-width="1"/>
<line x1="885.5" y1="253.4" x2="885.5" y2="284.0" stroke="#0c706a" stroke-width="1"/>
<line x1="894.5" y1="253.4" x2="894.5" y2="284.9" stroke="#0c706a" stroke-width="1"/>
<line x1="904.5" y1="253.4" x2="904.5" y2="288.4" stroke="#0c706a" stroke-width="1"/>
<line x1="913.5" y1="253.4" x2="913.5" y2="289.6" stroke="#0c706a" stroke-width="1"/>
<line x1="923.5" y1="253.4" x2="923.5" y2="293.8" stroke="#0c706a" stroke-width="1"/>
<line x1="932.5" y1="253.5" x2="932.5" y2="297.8" stroke="#0c706a" stroke-width="1"/>
<line x1="942.5" y1="253.5" x2="942.5" y2="298.4" stroke="#0c706a" stroke-width="1"/>
<line x1="951.5" y1="253.5" x2="951.5" y2="298.9" stroke="#0c706a" stroke-width="1"/>
<line x1="960.5" y1="253.5" x2="960.5" y2="299.8" stroke="#0c706a" stroke-width="1"/>
<line x1="970.5" y1="253.5" x2="970.5" y2="306.2" stroke="#0c706a" stroke-width="1"/>
<line x1="979.5" y1="253.5" x2="979.5" y2="310.7" stroke="#0c706a" stroke-width="1"/>
<line x1="989.5" y1="254.0" x2="989.5" y2="314.9" stroke="#0c706a" stroke-width="1"/>
<line x1="998.5" y1="254.4" x2="998.5" y2="315.1" stroke="#0c706a" stroke-width="1"/>
<line x1="1008.5" y1="254.9" x2="1008.5" y2="315.1" stroke="#0c706a" stroke-width="1"/>
<line x1="1017.5" y1="256.8" x2="1017.5" y2="316.4" stroke="#0c706a" stroke-width="1"/>
<line x1="1027.5" y1="274.4" x2="1027.5" y2="330.2" stroke="#0c706a" stroke-width="1"/>
<line x1="1036.5" y1="276.8" x2="1036.5" y2="334.7" stroke="#0c706a" stroke-width="1"/>
<line x1="1046.5" y1="279.2" x2="1046.5" y2="336.3" stroke="#0c706a" stroke-width="1"/>
<line x1="1055.5" y1="280.2" x2="1055.5" y2="337.5" stroke="#0c706a" stroke-width="1"/>
<line x1="1065.5" y1="281.2" x2="1065.5" y2="339.6" stroke="#0c706a" stroke-width="1"/>
<line x1="1074.5" y1="281.3" x2="1074.5" y2="342.5" stroke="#0c706a" stroke-width="1"/>
<line x1="1084.5" y1="281.4" x2="1084.5" y2="345.8" stroke="#0c706a" stroke-width="1"/>
<line x1="1093.5" y1="281.5" x2="1093.5" y2="351.2" stroke="#0c706a" stroke-width="1"/>
<line x1="1103.5" y1="281.7" x2="1103.5" y2="352.3" stroke="#0c706a" stroke-width="1"/>
<line x1="1112.5" y1="283.5" x2="1112.5" y2="359.5" stroke="#0c706a" stroke-width="1"/>
<line x1="1122.5" y1="285.3" x2="1122.5" y2="359.8" stroke="#0c706a" stroke-width="1"/>
<line x1="1131.5" y1="287.1" x2="1131.5" y2="360.0" stroke="#0c706a" stroke-width="1"/>
<line x1="1140.5" y1="290.3" x2="1140.5" y2="360.5" stroke="#0c706a" stroke-width="1"/>
<line x1="1150.5" y1="291.0" x2="1150.5" y2="360.9" stroke="#0c706a" stroke-width="1"/>
<line x1="1159.5" y1="291.6" x2="1159.5" y2="361.3" stroke="#0c706a" stroke-width="1"/>
<line x1="1169.5" y1="293.8" x2="1169.5" y2="361.8" stroke="#0c706a" stroke-width="1"/>
<line x1="1178.5" y1="296.1" x2="1178.5" y2="362.2" stroke="#0c706a" stroke-width="1"/>
<line x1="1188.5" y1="296.1" x2="1188.5" y2="362.6" stroke="#0c706a" stroke-width="1"/>
<line x1="1197.5" y1="296.2" x2="1197.5" y2="363.0" stroke="#0c706a" stroke-width="1"/>
<line x1="1207.5" y1="296.6" x2="1207.5" y2="363.1" stroke="#0c706a" stroke-width="1"/>
<line x1="1216.5" y1="309.7" x2="1216.5" y2="363.2" stroke="#0c706a" stroke-width="1"/>
<line x1="1226.5" y1="316.0" x2="1226.5" y2="363.3" stroke="#0c706a" stroke-width="1"/>
<line x1="1235.5" y1="325.2" x2="1235.5" y2="363.4" stroke="#0c706a" stroke-width="1"/>
<line x1="1245.5" y1="326.3" x2="1245.5" y2="363.5" stroke="#0c706a" stroke-width="1"/>
<line x1="1254.5" y1="327.0" x2="1254.5" y2="366.0" stroke="#0c706a" stroke-width="1"/>
<line x1="1264.5" y1="330.2" x2="1264.5" y2="369.7" stroke="#0c706a" stroke-width="1"/>
<line x1="1273.5" y1="330.2" x2="1273.5" y2="377.3" stroke="#0c706a" stroke-width="1"/>
<line x1="1283.5" y1="330.2" x2="1283.5" y2="377.7" stroke="#0c706a" stroke-width="1"/>
<line x1="1292.5" y1="330.2" x2="1292.5" y2="377.7" stroke="#0c706a" stroke-width="1"/>
<line x1="1302.5" y1="330.5" x2="1302.5" y2="377.8" stroke="#0c706a" stroke-width="1"/>
<line x1="1311.5" y1="333.2" x2="1311.5" y2="377.8" stroke="#0c706a" stroke-width="1"/>
<line x1="1320.5" y1="337.9" x2="1320.5" y2="377.9" stroke="#0c706a" stroke-width="1"/>
<line x1="1330.5" y1="342.0" x2="1330.5" y2="377.9" stroke="#0c706a" stroke-width="1"/>
<line x1="1339.5" y1="350.2" x2="1339.5" y2="378.0" stroke="#0c706a" stroke-width="1"/>
<line x1="1349.5" y1="350.2" x2="1349.5" y2="377.8" stroke="#0c706a" stroke-width="1"/>
<line x1="1358.5" y1="350.2" x2="1358.5" y2="377.7" stroke="#0c706a" stroke-width="1"/>
<line x1="1368.5" y1="350.2" x2="1368.5" y2="377.5" stroke="#0c706a" stroke-width="1"/>
<line x1="1377.5" y1="353.2" x2="1377.5" y2="380.7" stroke="#0c706a" stroke-width="1"/>
<line x1="1387.5" y1="389.8" x2="1387.5" y2="418.2" stroke="#0c706a" stroke-width="1"/>
<line x1="1396.5" y1="390.3" x2="1396.5" y2="418.4" stroke="#0c706a" stroke-width="1"/>
<line x1="1406.5" y1="390.9" x2="1406.5" y2="418.5" stroke="#0c706a" stroke-width="1"/>
<line x1="1415.5" y1="391.4" x2="1415.5" y2="418.6" stroke="#0c706a" stroke-width="1"/>
<line x1="1425.5" y1="391.7" x2="1425.5" y2="418.8" stroke="#0c706a" stroke-width="1"/>
<line x1="1434.5" y1="392.1" x2="1434.5" y2="419.0" stroke="#0c706a" stroke-width="1"/>
<line x1="1444.5" y1="396.2" x2="1444.5" y2="419.1" stroke="#0c706a" stroke-width="1"/>
<line x1="1453.5" y1="396.3" x2="1453.5" y2="419.7" stroke="#0c706a" stroke-width="1"/>
<line x1="1463.5" y1="396.3" x2="1463.5" y2="424.5" stroke="#0c706a" stroke-width="1"/>
<line x1="1472.5" y1="396.4" x2="1472.5" y2="420.7" stroke="#0c706a" stroke-width="1"/>
<line x1="1481.5" y1="396.5" x2="1481.5" y2="419.3" stroke="#0c706a" stroke-width="1"/>
<line x1="1491.5" y1="396.5" x2="1491.5" y2="418.0" stroke="#0c706a" stroke-width="1"/>
<line x1="1500.5" y1="397.0" x2="1500.5" y2="416.4" stroke="#0c706a" stroke-width="1"/>
<line x1="1510.5" y1="399.4" x2="1510.5" y2="414.3" stroke="#0c706a" stroke-width="1"/>
<line x1="1519.5" y1="412.4" x2="1519.5" y2="413.4" stroke="#8c0a32" stroke-width="1"/>
<line x1="1529.5" y1="412.0" x2="1529.5" y2="414.7" stroke="#8c0a32" stroke-width="1"/>
<polyline points="4.2,197.4 79.8,197.4 88.5,192.4 174.3,192.4 181.9,190.6 194.0,188.7 202.4,181.0 224.0,178.0 240.0,176.5 300.0,176.4 430.0,172.7 591.1,172.8 600.1,169.0 629.6,168.3 630.8,167.3 648.1,167.3 657.7,174.1 665.4,176.6 668.0,178.1 690.0,178.1 695.4,179.9 705.3,185.4 723.5,185.4 732.5,208.9 741.6,210.8 752.5,218.0 761.6,220.7 771.5,224.4 779.7,224.4 790.6,229.4 836.8,229.4 847.7,239.2 856.8,242.5 866.8,242.5 875.8,253.4 979.0,253.5 1017.0,255.3 1027.0,274.3 1046.0,279.2 1065.1,281.2 1102.3,281.6 1131.3,287.0 1140.4,290.3 1160.3,291.6 1178.5,296.1 1207.0,296.2 1216.1,309.3 1226.3,316.1 1235.3,325.2 1245.5,326.3 1254.6,327.0 1263.7,330.2 1301.1,330.2 1311.3,333.1 1320.4,337.7 1329.4,341.1 1339.6,350.2 1377.0,350.2 1387.2,389.8 1415.6,391.4 1434.8,392.1 1443.9,396.2 1498.3,396.6 1509.7,398.2 1518.7,413.2 1530.0,414.8" fill="none" stroke="#0ea57c" stroke-width="1.3" stroke-linejoin="round" />
<polyline points="4.2,188.6 6.9,187.5 13.9,184.7 22.9,184.0 32.6,183.7 37.5,182.3 52.0,181.6 70.8,180.6 81.9,180.6 88.8,184.0 107.5,184.4 108.2,185.6 174.2,185.2 181.9,181.0 193.4,179.7 199.8,174.6 221.6,174.0 225.4,171.4 239.2,165.0 296.8,165.0 298.0,166.9 335.3,166.9 345.5,163.7 375.0,163.7 382.4,166.5 392.5,166.5 399.2,162.5 405.5,162.5 410.7,163.9 430.0,164.4 434.8,165.6 439.6,167.3 449.2,167.8 454.0,169.2 460.7,171.6 468.4,174.0 486.6,175.5 515.4,175.0 516.4,174.5 553.0,174.5 553.9,175.5 571.9,175.6 571.9,176.4 591.1,176.4 600.0,178.0 610.3,179.2 618.0,179.2 629.6,185.0 640.0,186.9 648.8,189.5 657.7,194.6 667.3,199.0 689.9,199.0 696.3,201.1 723.5,203.9 732.5,228.9 741.6,231.6 752.5,238.5 771.5,247.6 779.7,248.8 790.6,254.3 799.6,254.8 809.6,261.5 828.7,268.2 836.8,268.8 847.7,277.3 856.8,278.4 866.8,278.8 875.8,283.3 894.0,284.6 904.8,288.7 913.9,289.6 932.0,297.8 950.0,298.8 960.8,299.7 971.7,307.0 989.8,315.1 1017.0,315.1 1026.1,329.6 1037.9,335.2 1060.0,338.1 1082.2,344.7 1094.0,351.4 1102.8,352.1 1111.6,359.5 1130.9,360.0 1196.8,363.0 1245.5,363.5 1254.6,366.0 1263.7,369.4 1273.9,377.6 1339.6,378.0 1377.0,377.4 1386.8,418.2 1425.8,418.8 1453.0,419.3 1462.0,425.0 1471.0,420.9 1498.3,417.0 1518.7,412.5 1530.0,412.0" fill="none" stroke="#ff5800" stroke-width="1.3" stroke-linejoin="round" />
<line x1="0" y1="112.5" x2="1790" y2="112.5" stroke="#5a5a5a" stroke-width="1" stroke-dasharray="1 2"/>
<line x1="0" y1="169.5" x2="1790" y2="169.5" stroke="#5a5a5a" stroke-width="1" stroke-dasharray="1 2"/>
<line x1="0" y1="226.5" x2="1790" y2="226.5" stroke="#5a5a5a" stroke-width="1" stroke-dasharray="1 2"/>
<line x1="0" y1="282.5" x2="1790" y2="282.5" stroke="#5a5a5a" stroke-width="1" stroke-dasharray="1 2"/>
<line x1="0" y1="339.5" x2="1790" y2="339.5" stroke="#5a5a5a" stroke-width="1" stroke-dasharray="1 2"/>
<line x1="0" y1="396.5" x2="1790" y2="396.5" stroke="#5a5a5a" stroke-width="1" stroke-dasharray="1 2"/>
<line x1="0" y1="453.5" x2="1790" y2="453.5" stroke="#5a5a5a" stroke-width="1" stroke-dasharray="1 2"/>
<line x1="0" y1="510.5" x2="1790" y2="510.5" stroke="#5a5a5a" stroke-width="1" stroke-dasharray="1 2"/>
<line x1="0" y1="559.5" x2="1790" y2="559.5" stroke="#5a5a5a" stroke-width="1" stroke-dasharray="1 2"/>
<line x1="0" y1="627.5" x2="1790" y2="627.5" stroke="#5a5a5a" stroke-width="1" stroke-dasharray="1 2"/>
<line x1="0" y1="661.5" x2="1790" y2="661.5" stroke="#5a5a5a" stroke-width="1" stroke-dasharray="1 2"/>
<line x1="0" y1="695.5" x2="1790" y2="695.5" stroke="#5a5a5a" stroke-width="1" stroke-dasharray="1 2"/>
<line x1="0" y1="729.5" x2="1790" y2="729.5" stroke="#5a5a5a" stroke-width="1" stroke-dasharray="1 2"/>
<line x1="1782" y1="593.5" x2="1790" y2="593.5" stroke="#5a5a5a" stroke-width="1" stroke-dasharray="1 2"/>
<line x1="0" y1="771.5" x2="1790" y2="771.5" stroke="#5a5a5a" stroke-width="1" stroke-dasharray="1 2"/>
<line x1="0" y1="835.5" x2="1790" y2="835.5" stroke="#5a5a5a" stroke-width="1" stroke-dasharray="1 2"/>
<rect x="0" y="778" width="1781" height="1" fill="#aeacbc"/>
<line x1="1782" y1="778.5" x2="1790" y2="778.5" stroke="#5a5a5a" stroke-width="1" stroke-dasharray="1 2"/>
<rect x="0" y="803" width="1781" height="1" fill="#aeacbc"/>
<line x1="1782" y1="803.5" x2="1790" y2="803.5" stroke="#5a5a5a" stroke-width="1" stroke-dasharray="1 2"/>
<rect x="0" y="828" width="1781" height="1" fill="#aeacbc"/>
<line x1="1782" y1="828.5" x2="1790" y2="828.5" stroke="#5a5a5a" stroke-width="1" stroke-dasharray="1 2"/>
<line x1="142.5" y1="81" x2="142.5" y2="498" stroke="#5a5a5a" stroke-width="1" stroke-dasharray="1 2"/>
<line x1="142.5" y1="525" x2="142.5" y2="755" stroke="#5a5a5a" stroke-width="1" stroke-dasharray="1 2"/>
<line x1="142.5" y1="757" x2="142.5" y2="859" stroke="#5a5a5a" stroke-width="1" stroke-dasharray="1 2"/>
<line x1="786.5" y1="81" x2="786.5" y2="498" stroke="#5a5a5a" stroke-width="1" stroke-dasharray="1 2"/>
<line x1="786.5" y1="525" x2="786.5" y2="755" stroke="#5a5a5a" stroke-width="1" stroke-dasharray="1 2"/>
<line x1="786.5" y1="757" x2="786.5" y2="859" stroke="#5a5a5a" stroke-width="1" stroke-dasharray="1 2"/>
<line x1="1430.5" y1="81" x2="1430.5" y2="498" stroke="#5a5a5a" stroke-width="1" stroke-dasharray="1 2"/>
<line x1="1430.5" y1="525" x2="1430.5" y2="755" stroke="#5a5a5a" stroke-width="1" stroke-dasharray="1 2"/>
<line x1="1430.5" y1="757" x2="1430.5" y2="859" stroke="#5a5a5a" stroke-width="1" stroke-dasharray="1 2"/>
<line x1="492.5" y1="81" x2="492.5" y2="498" stroke="#5a5a5a" stroke-width="1" stroke-dasharray="1 2"/>
<line x1="492.5" y1="525" x2="492.5" y2="755" stroke="#5a5a5a" stroke-width="1" stroke-dasharray="1 2"/>
<line x1="492.5" y1="757" x2="492.5" y2="859" stroke="#5a5a5a" stroke-width="1" stroke-dasharray="1 2"/>
<line x1="492.5" y1="500" x2="492.5" y2="523" stroke="#5a5a5a" stroke-width="1" stroke-dasharray="1 2"/>
<line x1="1136.5" y1="81" x2="1136.5" y2="498" stroke="#5a5a5a" stroke-width="1" stroke-dasharray="1 2"/>
<line x1="1136.5" y1="525" x2="1136.5" y2="755" stroke="#5a5a5a" stroke-width="1" stroke-dasharray="1 2"/>
<line x1="1136.5" y1="757" x2="1136.5" y2="859" stroke="#5a5a5a" stroke-width="1" stroke-dasharray="1 2"/>
<line x1="1136.5" y1="500" x2="1136.5" y2="523" stroke="#5a5a5a" stroke-width="1" stroke-dasharray="1 2"/>
<line x1="142.5" y1="500" x2="142.5" y2="523" stroke="#5a5a5a" stroke-width="1" stroke-dasharray="1 2"/>
<line x1="786.5" y1="500" x2="786.5" y2="523" stroke="#5a5a5a" stroke-width="1" stroke-dasharray="1 2"/>
<line x1="1430.5" y1="500" x2="1430.5" y2="523" stroke="#5a5a5a" stroke-width="1" stroke-dasharray="1 2"/>
<rect x="0" y="308" width="1791" height="1.3" fill="#c8b41e"/>
<rect x="0" y="426" width="1791" height="1.3" fill="#e8104a"/>
<line x1="0" y1="388.5" x2="1790" y2="388.5" stroke="#f0e040" stroke-width="1" stroke-dasharray="1 2"/>
<polyline points="4.2,185.6 11.1,185.6 22.9,183.6 32.6,183.6 37.5,182.7 52.0,181.6 70.8,181.5 81.9,181.5 99.2,180.2 128.3,179.5 200.1,179.0 227.3,177.0 270.0,177.2 348.1,175.3 460.0,175.5 489.9,177.9 516.8,182.4 555.3,188.2 593.7,193.9 619.3,198.4 667.3,208.0 732.5,222.5 786.9,236.1 841.4,251.6 877.6,263.3 940.0,279.1 1020.7,302.4 1111.4,326.0 1160.0,338.1 1210.0,349.6 1235.3,358.1 1256.1,362.0 1292.8,366.8" fill="none" stroke="#ff98b8" stroke-width="1.2" stroke-linejoin="round" />
<polyline points="80.5,168.4 90.2,168.1 99.9,165.3 112.4,163.9 127.6,163.4 136.0,161.0 143.2,160.2 163.2,160.2 193.7,162.2 201.7,163.8 212.1,165.0 221.7,166.6 237.7,166.6 270.0,167.8 331.4,176.1 348.1,178.2 373.7,181.6 390.3,182.9 419.8,184.8 437.7,187.4 460.0,190.6 465.6,191.4 493.8,197.1 555.3,225.3 591.4,240.0 620.9,255.4 641.4,266.9 672.1,281.0 697.7,293.8 711.5,299.6 729.5,307.3 753.8,314.3 782.0,318.8 815.3,331.0 844.7,338.0 879.3,345.7 904.9,352.8 940.0,359.8 964.2,364.6 1005.5,371.3 1023.2,373.9 1045.3,375.0 1104.3,375.7 1141.1,377.2 1145.2,377.0 1188.0,387.9 1219.3,395.6 1235.6,396.7 1256.1,399.5 1283.3,399.7 1292.8,401.5" fill="none" stroke="#3a86ff" stroke-width="1.4" stroke-linejoin="round" />
<polyline points="2.1,172.3 27.1,176.4 32.3,177.5 36.8,176.4 50.6,176.4 59.0,181.6 70.1,188.6 74.9,189.4 79.8,190.6 88.8,189.4 98.5,190.6 105.4,187.2 127.6,187.5 135.3,184.4 144.1,189.2 153.7,192.9 164.1,193.2 173.7,200.4 183.3,212.4 192.1,207.6 201.7,208.1 212.1,213.2 221.7,222.5 232.1,212.4 249.7,212.4 259.0,256.0 268.6,275.1 277.3,278.6 288.4,289.4 297.1,289.4 316.2,309.2 324.9,294.1 336.0,283.3 345.6,282.2 354.3,293.3 363.0,294.4 373.3,323.0 381.3,321.4 390.8,322.7 401.6,331.4 411.4,325.1 421.0,316.3 430.5,322.4 439.2,324.0 448.7,319.2 457.5,319.5 467.8,322.7 477.3,333.0 487.6,334.6 494.0,333.0 505.6,334.8 524.8,328.1 534.8,331.2 541.5,332.2 542.8,332.6 545.5,339.2 552.4,364.8 562.0,369.9 569.5,367.2 573.8,367.5 578.0,370.7 591.4,377.1 601.0,373.4 609.0,372.3 613.2,373.1 621.8,377.4 629.3,379.2 646.3,372.3 668.7,372.3 676.2,375.3 686.4,375.3 700.8,370.4 706.1,370.4 714.6,374.4 722.1,374.6 733.3,376.4 748.7,371.3 760.2,371.3 780.7,381.2 789.7,380.7 810.1,376.4 838.3,375.2 847.3,380.9 870.0,380.2 885.3,380.2 892.4,376.3 903.2,376.3 912.3,428.2 922.6,445.0 941.4,423.1 951.6,435.3 958.8,430.7 964.4,430.4 969.4,431.7 979.0,426.6 989.3,401.5 1002.6,401.5 1008.5,403.3 1015.8,400.8 1027.6,389.0 1036.5,399.3 1046.8,383.1 1055.6,388.7" fill="none" stroke="#3a86ff" stroke-width="1.4" stroke-linejoin="round" />
<polyline points="4.2,172.5 11.1,172.5 147.2,167.6 156.0,167.6 164.0,160.6 173.6,160.6 174.4,161.4 197.7,161.4 201.7,162.8 213.7,163.4 221.7,168.6 232.1,168.6 270.0,168.6 373.7,177.4 385.2,176.5 391.6,181.6 430.0,196.4 457.9,198.2 460.0,197.6 487.4,198.2 495.1,222.8 505.3,223.0 515.6,231.7 538.9,240.0 552.7,246.4 601.4,246.4 610.6,254.7 622.2,256.6 641.4,263.1 665.7,268.8 679.8,269.5 695.2,273.6 696.3,273.3 720.0,274.6 723.5,274.2 732.5,287.8 743.4,295.1 752.5,304.5 780.6,304.5 789.7,318.8 819.1,323.3 828.1,330.3 846.0,336.1 856.2,346.4 902.4,346.4 940.0,349.6 956.9,352.9 1009.9,353.3 1026.1,359.5 1036.5,374.2 1140.4,379.0 1149.9,415.8 1188.0,417.1 1235.6,417.8 1292.8,418.5" fill="none" stroke="#e0cc28" stroke-width="1.2" stroke-linejoin="round" />
<polyline points="4.2,160.1 13.5,166.2 22.9,165.3 33.3,161.5 42.3,160.5 51.3,160.5 57.6,156.6 69.4,156.3 79.1,157.7 84.6,156.5 99.2,151.4 112.4,151.4 113.8,152.5 120.0,153.4 135.6,153.4 145.6,159.8 153.6,163.8 161.6,166.6 176.0,174.2 183.3,178.6 193.7,181.4 200.1,183.4 213.7,183.8 220.9,182.6 228.9,181.0 235.3,179.4 246.5,177.0 270.0,175.8 294.3,177.1 309.7,181.0 332.7,187.4 348.1,188.7 373.7,187.4 386.5,188.7 399.3,191.2 412.1,192.5 437.7,204.0 457.9,212.5 460.0,213.0 486.1,213.2 495.1,218.9 512.0,240.0 529.9,270.7 544.0,286.7 556.8,294.4 572.2,295.3 586.3,291.9 600.4,289.3 610.6,295.7 627.3,309.8 647.8,324.5 659.3,323.2 679.8,323.2 697.7,319.7 720.0,323.9 748.7,333.5 764.0,332.3 782.0,332.9 792.2,339.3 805.0,348.9 828.1,370.0 840.9,372.0 860.1,375.2 892.1,374.5 940.0,373.9 979.0,374.2 1014.4,374.2 1055.6,379.4 1104.3,378.7 1120.5,380.1 1141.1,379.4 1147.0,385.3 1151.3,388.6 1188.0,433.5 1215.2,429.4 1235.6,417.1 1256.1,404.9 1272.4,398.1 1292.8,392.0" fill="none" stroke="#e0cc28" stroke-width="1.2" stroke-linejoin="round" />
<polyline points="3.1,160.1 12.5,155.8 51.3,155.8 59.0,160.8 93.0,160.8 99.9,158.7 106.8,156.6 111.7,156.6 113.1,158.2 120.0,157.8 136.0,157.8 144.0,165.0 156.8,165.0 166.4,165.8 172.0,166.6 187.3,166.6 188.9,168.2 196.9,168.6 221.7,175.4 226.5,177.8 235.3,181.8 244.3,181.6 280.2,179.7 291.7,177.1 302.0,178.4 327.6,181.0 355.8,182.3 373.7,183.5 386.5,187.4 404.4,189.3 414.7,193.8 427.5,201.5 450.5,202.1 459.2,204.2 460.0,204.0 486.1,209.3 496.4,236.2 506.6,240.0 515.9,247.0 533.8,255.4 554.3,261.1 562.0,261.8 572.2,273.9 582.5,281.0 591.4,289.9 600.4,291.2 609.4,299.2 629.8,300.2 656.7,302.8 684.9,314.3 695.2,323.9 720.0,324.5 737.1,323.9 756.4,325.2 779.4,327.8 789.7,341.2 802.5,349.6 825.5,352.8 848.6,352.8 865.2,356.0 875.5,370.7 884.4,373.0 940.0,373.0 1014.4,372.8 1026.1,377.5 1067.4,377.9 1139.7,377.9 1149.9,419.2 1215.2,421.2 1226.1,432.8 1235.6,423.9 1256.1,416.5 1272.4,412.4 1281.9,407.6 1292.8,406.9" fill="none" stroke="#ff8cac" stroke-width="2.4" stroke-linejoin="round" />
<rect x="4" y="163.7" width="1" height="9.0" fill="#1ee0dc"/>
<rect x="1" y="165.0" width="7" height="5.7" fill="#1ee0dc"/>
<rect x="13" y="168.4" width="1" height="10.0" fill="#1ee0dc"/>
<rect x="10" y="170.7" width="7" height="1.5" fill="#1ee0dc"/>
<rect x="23" y="144.9" width="1" height="31.6" fill="#ff0a50"/>
<rect x="20" y="145.8" width="7" height="30.7" fill="#ff0a50"/>
<rect x="32" y="145.8" width="1" height="7.0" fill="#1ee0dc"/>
<rect x="29" y="145.8" width="7" height="5.7" fill="#1ee0dc"/>
<rect x="42" y="150.9" width="1" height="14.7" fill="#1ee0dc"/>
<rect x="39" y="150.9" width="7" height="12.8" fill="#1ee0dc"/>
<rect x="51" y="161.8" width="1" height="7.0" fill="#1ee0dc"/>
<rect x="48" y="163.0" width="7" height="2.6" fill="#1ee0dc"/>
<rect x="61" y="149.6" width="1" height="20.4" fill="#ff0a50"/>
<rect x="58" y="156.6" width="7" height="9.0" fill="#ff0a50"/>
<rect x="70" y="150.9" width="1" height="12.1" fill="#ff0a50"/>
<rect x="67" y="150.9" width="7" height="6.4" fill="#ff0a50"/>
<rect x="79" y="147.7" width="1" height="8.9" fill="#ff0a50"/>
<rect x="76" y="151.2" width="7" height="1.5" fill="#ff0a50"/>
<rect x="89" y="147.0" width="1" height="5.2" fill="#ff0a50"/>
<rect x="86" y="149.7" width="7" height="1.5" fill="#ff0a50"/>
<rect x="98" y="148.0" width="1" height="4.8" fill="#1ee0dc"/>
<rect x="95" y="150.2" width="7" height="2.0" fill="#1ee0dc"/>
<rect x="108" y="148.0" width="1" height="8.0" fill="#1ee0dc"/>
<rect x="105" y="152.2" width="7" height="2.5" fill="#1ee0dc"/>
<rect x="117" y="150.0" width="1" height="7.3" fill="#1ee0dc"/>
<rect x="114" y="154.1" width="7" height="2.5" fill="#1ee0dc"/>
<rect x="127" y="151.8" width="1" height="10.0" fill="#ff0a50"/>
<rect x="124" y="155.1" width="7" height="1.5" fill="#ff0a50"/>
<rect x="136" y="153.0" width="1" height="4.0" fill="#ff0a50"/>
<rect x="133" y="155.0" width="7" height="1.5" fill="#ff0a50"/>
<rect x="146" y="154.0" width="1" height="29.0" fill="#1ee0dc"/>
<rect x="143" y="160.2" width="7" height="18.2" fill="#1ee0dc"/>
<rect x="155" y="173.3" width="1" height="9.7" fill="#ff0a50"/>
<rect x="152" y="173.3" width="7" height="5.7" fill="#ff0a50"/>
<rect x="165" y="172.0" width="1" height="7.0" fill="#1ee0dc"/>
<rect x="162" y="173.3" width="7" height="5.7" fill="#1ee0dc"/>
<rect x="174" y="176.5" width="1" height="11.1" fill="#1ee0dc"/>
<rect x="171" y="177.8" width="7" height="6.4" fill="#1ee0dc"/>
<rect x="184" y="179.7" width="1" height="7.0" fill="#1ee0dc"/>
<rect x="181" y="183.8" width="7" height="1.5" fill="#1ee0dc"/>
<rect x="193" y="181.6" width="1" height="5.1" fill="#1ee0dc"/>
<rect x="190" y="184.2" width="7" height="1.5" fill="#1ee0dc"/>
<rect x="203" y="181.0" width="1" height="11.5" fill="#1ee0dc"/>
<rect x="200" y="184.2" width="7" height="2.5" fill="#1ee0dc"/>
<rect x="212" y="178.4" width="1" height="10.9" fill="#ff0a50"/>
<rect x="209" y="181.0" width="7" height="7.7" fill="#ff0a50"/>
<rect x="222" y="177.0" width="1" height="9.7" fill="#ff0a50"/>
<rect x="219" y="179.7" width="7" height="2.6" fill="#ff0a50"/>
<rect x="231" y="172.0" width="1" height="4.0" fill="#1ee0dc"/>
<rect x="228" y="173.0" width="7" height="2.0" fill="#1ee0dc"/>
<rect x="241" y="173.0" width="1" height="4.0" fill="#1ee0dc"/>
<rect x="238" y="174.6" width="7" height="1.5" fill="#1ee0dc"/>
<rect x="250" y="173.0" width="1" height="4.0" fill="#1ee0dc"/>
<rect x="247" y="174.6" width="7" height="1.5" fill="#1ee0dc"/>
<rect x="259" y="173.0" width="1" height="4.0" fill="#1ee0dc"/>
<rect x="256" y="174.6" width="7" height="1.5" fill="#1ee0dc"/>
<rect x="269" y="174.6" width="1" height="5.4" fill="#1ee0dc"/>
<rect x="266" y="175.9" width="7" height="1.9" fill="#1ee0dc"/>
<rect x="278" y="175.0" width="1" height="5.0" fill="#ff0a50"/>
<rect x="275" y="176.2" width="7" height="2.0" fill="#ff0a50"/>
<rect x="288" y="175.0" width="1" height="3.0" fill="#1ee0dc"/>
<rect x="285" y="175.9" width="7" height="1.9" fill="#1ee0dc"/>
<rect x="297" y="176.5" width="1" height="8.3" fill="#1ee0dc"/>
<rect x="294" y="178.4" width="7" height="5.1" fill="#1ee0dc"/>
<rect x="307" y="182.0" width="1" height="8.0" fill="#1ee0dc"/>
<rect x="304" y="182.0" width="7" height="7.0" fill="#1ee0dc"/>
<rect x="316" y="184.8" width="1" height="7.7" fill="#1ee0dc"/>
<rect x="313" y="188.0" width="7" height="2.2" fill="#1ee0dc"/>
<rect x="326" y="189.0" width="1" height="3.5" fill="#ff0a50"/>
<rect x="323" y="189.0" width="7" height="1.5" fill="#ff0a50"/>
<rect x="335" y="185.0" width="1" height="6.9" fill="#1ee0dc"/>
<rect x="332" y="188.7" width="7" height="1.9" fill="#1ee0dc"/>
<rect x="345" y="185.5" width="1" height="5.5" fill="#ff0a50"/>
<rect x="342" y="187.1" width="7" height="3.1" fill="#ff0a50"/>
<rect x="354" y="185.0" width="1" height="4.3" fill="#1ee0dc"/>
<rect x="351" y="187.1" width="7" height="1.5" fill="#1ee0dc"/>
<rect x="364" y="185.9" width="1" height="5.1" fill="#1ee0dc"/>
<rect x="361" y="187.6" width="7" height="1.5" fill="#1ee0dc"/>
<rect x="373" y="184.2" width="1" height="6.4" fill="#ff0a50"/>
<rect x="370" y="185.5" width="7" height="3.5" fill="#ff0a50"/>
<rect x="383" y="183.0" width="1" height="9.5" fill="#1ee0dc"/>
<rect x="380" y="184.2" width="7" height="7.7" fill="#1ee0dc"/>
<rect x="392" y="186.7" width="1" height="7.7" fill="#1ee0dc"/>
<rect x="389" y="191.0" width="7" height="2.8" fill="#1ee0dc"/>
<rect x="402" y="190.3" width="1" height="4.1" fill="#1ee0dc"/>
<rect x="399" y="192.3" width="7" height="1.5" fill="#1ee0dc"/>
<rect x="411" y="196.4" width="1" height="6.6" fill="#1ee0dc"/>
<rect x="408" y="198.3" width="7" height="3.8" fill="#1ee0dc"/>
<rect x="421" y="198.7" width="1" height="15.3" fill="#1ee0dc"/>
<rect x="418" y="201.2" width="7" height="12.4" fill="#1ee0dc"/>
<rect x="430" y="203.4" width="1" height="19.2" fill="#ff0a50"/>
<rect x="427" y="206.9" width="7" height="7.1" fill="#ff0a50"/>
<rect x="439" y="203.4" width="1" height="8.3" fill="#1ee0dc"/>
<rect x="436" y="207.2" width="7" height="1.5" fill="#1ee0dc"/>
<rect x="449" y="206.3" width="1" height="10.5" fill="#1ee0dc"/>
<rect x="446" y="209.2" width="7" height="4.8" fill="#1ee0dc"/>
<rect x="458" y="214.3" width="1" height="12.7" fill="#1ee0dc"/>
<rect x="455" y="214.3" width="7" height="8.7" fill="#1ee0dc"/>
<rect x="468" y="211.2" width="1" height="13.5" fill="#ff0a50"/>
<rect x="465" y="213.1" width="7" height="9.7" fill="#ff0a50"/>
<rect x="496" y="256.0" width="1" height="18.6" fill="#ff0a50"/>
<rect x="493" y="256.0" width="7" height="9.6" fill="#ff0a50"/>
<rect x="506" y="251.3" width="1" height="25.8" fill="#1ee0dc"/>
<rect x="503" y="256.0" width="7" height="19.9" fill="#1ee0dc"/>
<rect x="515" y="270.7" width="1" height="19.9" fill="#1ee0dc"/>
<rect x="512" y="274.0" width="7" height="6.0" fill="#1ee0dc"/>
<rect x="525" y="278.2" width="1" height="16.2" fill="#1ee0dc"/>
<rect x="522" y="278.2" width="7" height="11.8" fill="#1ee0dc"/>
<rect x="534" y="287.1" width="1" height="13.7" fill="#ff0a50"/>
<rect x="531" y="289.0" width="7" height="1.5" fill="#ff0a50"/>
<rect x="544" y="286.7" width="1" height="16.1" fill="#1ee0dc"/>
<rect x="541" y="289.3" width="7" height="10.3" fill="#1ee0dc"/>
<rect x="553" y="293.8" width="1" height="16.6" fill="#1ee0dc"/>
<rect x="550" y="299.0" width="7" height="10.8" fill="#1ee0dc"/>
<rect x="563" y="289.3" width="1" height="21.1" fill="#ff0a50"/>
<rect x="560" y="291.9" width="7" height="17.9" fill="#ff0a50"/>
<rect x="572" y="284.2" width="1" height="10.2" fill="#ff0a50"/>
<rect x="569" y="284.2" width="7" height="8.3" fill="#ff0a50"/>
<rect x="582" y="272.0" width="1" height="13.5" fill="#ff0a50"/>
<rect x="579" y="281.0" width="7" height="1.5" fill="#ff0a50"/>
<rect x="591" y="278.2" width="1" height="16.8" fill="#1ee0dc"/>
<rect x="588" y="285.5" width="7" height="8.3" fill="#1ee0dc"/>
<rect x="600" y="287.4" width="1" height="11.5" fill="#1ee0dc"/>
<rect x="597" y="293.1" width="7" height="2.6" fill="#1ee0dc"/>
<rect x="610" y="296.4" width="1" height="30.6" fill="#1ee0dc"/>
<rect x="607" y="296.4" width="7" height="27.5" fill="#1ee0dc"/>
<rect x="619" y="313.0" width="1" height="16.7" fill="#ff0a50"/>
<rect x="616" y="321.0" width="7" height="2.5" fill="#ff0a50"/>
<rect x="629" y="315.0" width="1" height="9.5" fill="#1ee0dc"/>
<rect x="626" y="321.0" width="7" height="2.9" fill="#1ee0dc"/>
<rect x="638" y="319.4" width="1" height="16.0" fill="#1ee0dc"/>
<rect x="635" y="323.2" width="7" height="8.4" fill="#1ee0dc"/>
<rect x="648" y="321.0" width="1" height="12.5" fill="#ff0a50"/>
<rect x="645" y="324.5" width="7" height="7.5" fill="#ff0a50"/>
<rect x="657" y="312.4" width="1" height="14.0" fill="#ff0a50"/>
<rect x="654" y="316.2" width="7" height="9.6" fill="#ff0a50"/>
<rect x="667" y="315.0" width="1" height="10.8" fill="#1ee0dc"/>
<rect x="664" y="316.2" width="7" height="8.3" fill="#1ee0dc"/>
<rect x="676" y="314.0" width="1" height="11.8" fill="#1ee0dc"/>
<rect x="673" y="322.0" width="7" height="2.5" fill="#1ee0dc"/>
<rect x="686" y="317.0" width="1" height="8.0" fill="#ff0a50"/>
<rect x="683" y="319.4" width="7" height="5.1" fill="#ff0a50"/>
<rect x="695" y="316.5" width="1" height="5.5" fill="#1ee0dc"/>
<rect x="692" y="319.7" width="7" height="1.5" fill="#1ee0dc"/>
<rect x="705" y="319.4" width="1" height="8.6" fill="#1ee0dc"/>
<rect x="702" y="320.4" width="7" height="2.8" fill="#1ee0dc"/>
<rect x="714" y="320.0" width="1" height="14.0" fill="#1ee0dc"/>
<rect x="711" y="323.9" width="7" height="9.6" fill="#1ee0dc"/>
<rect x="724" y="331.0" width="1" height="5.7" fill="#1ee0dc"/>
<rect x="721" y="332.9" width="7" height="3.0" fill="#1ee0dc"/>
<rect x="733" y="330.3" width="1" height="6.4" fill="#ff0a50"/>
<rect x="730" y="332.9" width="7" height="3.0" fill="#ff0a50"/>
<rect x="743" y="331.6" width="1" height="6.0" fill="#1ee0dc"/>
<rect x="740" y="332.9" width="7" height="3.0" fill="#1ee0dc"/>
<rect x="752" y="331.0" width="1" height="5.7" fill="#ff0a50"/>
<rect x="749" y="332.3" width="7" height="3.2" fill="#ff0a50"/>
<rect x="762" y="326.5" width="1" height="6.5" fill="#ff0a50"/>
<rect x="759" y="327.8" width="7" height="4.7" fill="#ff0a50"/>
<rect x="771" y="327.8" width="1" height="7.0" fill="#1ee0dc"/>
<rect x="768" y="327.8" width="7" height="3.8" fill="#1ee0dc"/>
<rect x="780" y="331.0" width="1" height="3.0" fill="#1ee0dc"/>
<rect x="777" y="331.6" width="7" height="1.9" fill="#1ee0dc"/>
<rect x="790" y="331.0" width="1" height="35.8" fill="#1ee0dc"/>
<rect x="787" y="339.3" width="7" height="26.9" fill="#1ee0dc"/>
<rect x="799" y="362.4" width="1" height="8.5" fill="#1ee0dc"/>
<rect x="796" y="364.9" width="7" height="6.0" fill="#1ee0dc"/>
<rect x="809" y="364.9" width="1" height="10.9" fill="#ff0a50"/>
<rect x="806" y="366.8" width="7" height="4.1" fill="#ff0a50"/>
<rect x="818" y="365.6" width="1" height="10.2" fill="#1ee0dc"/>
<rect x="815" y="366.6" width="7" height="6.4" fill="#1ee0dc"/>
<rect x="828" y="372.0" width="1" height="7.6" fill="#1ee0dc"/>
<rect x="825" y="372.0" width="7" height="6.1" fill="#1ee0dc"/>
<rect x="837" y="366.2" width="1" height="13.4" fill="#ff0a50"/>
<rect x="834" y="373.9" width="7" height="3.8" fill="#ff0a50"/>
<rect x="847" y="368.1" width="1" height="13.5" fill="#ff0a50"/>
<rect x="844" y="373.0" width="7" height="3.1" fill="#ff0a50"/>
<rect x="856" y="372.0" width="1" height="6.1" fill="#1ee0dc"/>
<rect x="853" y="372.0" width="7" height="5.1" fill="#1ee0dc"/>
<rect x="866" y="373.9" width="1" height="7.7" fill="#1ee0dc"/>
<rect x="863" y="375.6" width="7" height="5.1" fill="#1ee0dc"/>
<rect x="875" y="376.1" width="1" height="3.6" fill="#ff0a50"/>
<rect x="872" y="376.1" width="7" height="3.6" fill="#ff0a50"/>
<rect x="885" y="373.9" width="1" height="5.1" fill="#ff0a50"/>
<rect x="882" y="373.9" width="7" height="1.9" fill="#ff0a50"/>
<rect x="894" y="366.8" width="1" height="7.7" fill="#ff0a50"/>
<rect x="891" y="374.0" width="7" height="1.5" fill="#ff0a50"/>
<rect x="904" y="366.8" width="1" height="10.3" fill="#1ee0dc"/>
<rect x="901" y="374.0" width="7" height="1.5" fill="#1ee0dc"/>
<rect x="913" y="373.9" width="1" height="4.2" fill="#1ee0dc"/>
<rect x="910" y="373.9" width="7" height="1.7" fill="#1ee0dc"/>
<rect x="923" y="373.2" width="1" height="5.2" fill="#1ee0dc"/>
<rect x="920" y="375.2" width="7" height="1.5" fill="#1ee0dc"/>
<rect x="932" y="366.8" width="1" height="9.3" fill="#ff0a50"/>
<rect x="929" y="373.2" width="7" height="2.6" fill="#ff0a50"/>
<rect x="942" y="368.0" width="1" height="4.0" fill="#ff0a50"/>
<rect x="939" y="369.5" width="7" height="2.5" fill="#ff0a50"/>
<rect x="951" y="369.0" width="1" height="7.0" fill="#1ee0dc"/>
<rect x="948" y="369.5" width="7" height="5.0" fill="#1ee0dc"/>
<rect x="960" y="374.0" width="1" height="3.2" fill="#1ee0dc"/>
<rect x="957" y="374.0" width="7" height="2.0" fill="#1ee0dc"/>
<rect x="970" y="375.0" width="1" height="3.7" fill="#1ee0dc"/>
<rect x="967" y="375.4" width="7" height="2.1" fill="#1ee0dc"/>
<rect x="979" y="373.5" width="1" height="4.0" fill="#ff0a50"/>
<rect x="976" y="374.0" width="7" height="2.9" fill="#ff0a50"/>
<rect x="989" y="369.0" width="1" height="7.0" fill="#ff0a50"/>
<rect x="986" y="373.5" width="7" height="1.5" fill="#ff0a50"/>
<rect x="998" y="372.0" width="1" height="4.0" fill="#1ee0dc"/>
<rect x="995" y="374.0" width="7" height="1.5" fill="#1ee0dc"/>
<rect x="1008" y="373.0" width="1" height="5.0" fill="#1ee0dc"/>
<rect x="1005" y="373.5" width="7" height="3.7" fill="#1ee0dc"/>
<rect x="1017" y="376.0" width="1" height="5.6" fill="#1ee0dc"/>
<rect x="1014" y="376.0" width="7" height="5.6" fill="#1ee0dc"/>
<rect x="1027" y="379.8" width="1" height="9.2" fill="#ff0a50"/>
<rect x="1024" y="379.8" width="7" height="2.1" fill="#ff0a50"/>
<rect x="1036" y="378.0" width="1" height="3.0" fill="#ff0a50"/>
<rect x="1033" y="378.7" width="7" height="2.2" fill="#ff0a50"/>
<rect x="1046" y="377.0" width="1" height="4.0" fill="#ff0a50"/>
<rect x="1043" y="377.9" width="7" height="1.5" fill="#ff0a50"/>
<rect x="1055" y="375.0" width="1" height="3.0" fill="#ff0a50"/>
<rect x="1052" y="376.0" width="7" height="1.5" fill="#ff0a50"/>
<rect x="1065" y="371.0" width="1" height="6.2" fill="#ff0a50"/>
<rect x="1062" y="375.7" width="7" height="1.5" fill="#ff0a50"/>
<rect x="1074" y="375.0" width="1" height="3.0" fill="#ff0a50"/>
<rect x="1071" y="375.7" width="7" height="1.5" fill="#ff0a50"/>
<rect x="1084" y="375.0" width="1" height="7.8" fill="#1ee0dc"/>
<rect x="1081" y="375.7" width="7" height="6.2" fill="#1ee0dc"/>
<rect x="1093" y="379.0" width="1" height="4.0" fill="#ff0a50"/>
<rect x="1090" y="379.8" width="7" height="3.0" fill="#ff0a50"/>
<rect x="1103" y="379.0" width="1" height="4.8" fill="#1ee0dc"/>
<rect x="1100" y="379.8" width="7" height="2.1" fill="#1ee0dc"/>
<rect x="1112" y="377.2" width="1" height="7.6" fill="#ff0a50"/>
<rect x="1109" y="379.8" width="7" height="2.1" fill="#ff0a50"/>
<rect x="1150" y="428.7" width="1" height="36.7" fill="#ff0a50"/>
<rect x="1147" y="428.7" width="7" height="34.0" fill="#ff0a50"/>
<rect x="1159" y="421.9" width="1" height="32.0" fill="#1ee0dc"/>
<rect x="1156" y="428.0" width="7" height="17.7" fill="#1ee0dc"/>
<rect x="1169" y="426.7" width="1" height="23.8" fill="#ff0a50"/>
<rect x="1166" y="434.1" width="7" height="9.6" fill="#ff0a50"/>
<rect x="1178" y="422.9" width="1" height="12.1" fill="#ff0a50"/>
<rect x="1175" y="422.9" width="7" height="11.2" fill="#ff0a50"/>
<rect x="1188" y="421.2" width="1" height="23.2" fill="#1ee0dc"/>
<rect x="1185" y="422.9" width="7" height="12.6" fill="#1ee0dc"/>
<rect x="1197" y="424.0" width="1" height="14.2" fill="#ff0a50"/>
<rect x="1194" y="430.0" width="7" height="4.1" fill="#ff0a50"/>
<rect x="1207" y="428.0" width="1" height="8.2" fill="#1ee0dc"/>
<rect x="1204" y="430.7" width="7" height="2.1" fill="#1ee0dc"/>
<rect x="1216" y="423.3" width="1" height="11.7" fill="#ff0a50"/>
<rect x="1213" y="426.7" width="7" height="6.8" fill="#ff0a50"/>
<rect x="1226" y="400.2" width="1" height="25.1" fill="#ff0a50"/>
<rect x="1223" y="400.8" width="7" height="24.5" fill="#ff0a50"/>
<rect x="1235" y="396.7" width="1" height="16.3" fill="#1ee0dc"/>
<rect x="1232" y="400.8" width="7" height="1.5" fill="#1ee0dc"/>
<rect x="1245" y="398.0" width="1" height="13.0" fill="#1ee0dc"/>
<rect x="1242" y="400.8" width="7" height="3.0" fill="#1ee0dc"/>
<rect x="1254" y="396.7" width="1" height="9.3" fill="#ff0a50"/>
<rect x="1251" y="399.5" width="7" height="4.0" fill="#ff0a50"/>
<rect x="1264" y="389.3" width="1" height="14.2" fill="#ff0a50"/>
<rect x="1261" y="389.3" width="7" height="11.2" fill="#ff0a50"/>
<rect x="1273" y="386.5" width="1" height="17.0" fill="#1ee0dc"/>
<rect x="1270" y="388.6" width="7" height="10.9" fill="#1ee0dc"/>
<rect x="1283" y="379.7" width="1" height="19.8" fill="#ff0a50"/>
<rect x="1280" y="383.1" width="7" height="16.4" fill="#ff0a50"/>
<rect x="1292" y="381.8" width="1" height="10.2" fill="#1ee0dc"/>
<rect x="1289" y="384.2" width="7" height="4.4" fill="#1ee0dc"/>
<polyline points="180.0,209.5 220.0,207.0 296.8,202.4 344.9,199.0 382.7,196.5 430.0,194.7 460.0,193.8 506.0,195.0 524.5,196.0 552.7,198.4 571.9,199.6 591.1,200.7 619.3,201.6 647.5,203.5 680.0,205.9 723.5,208.0 787.0,211.7 841.4,216.2 930.0,222.6 1020.7,229.4 1111.4,238.1 1190.0,246.5 1258.0,254.9 1293.0,258.3" fill="none" stroke="#ffffff" stroke-width="5.2" stroke-linejoin="round" stroke-linecap="butt"/>
<polyline points="2.0,175.4 21.0,174.0 51.0,172.4 70.0,171.7 108.0,171.0 130.0,170.7 220.0,172.6 300.0,173.0 345.0,173.2 380.0,173.2 411.0,174.2 430.0,175.2 449.0,176.1 468.0,177.6 487.0,177.8 494.5,261.0 505.6,262.0 516.0,267.5 534.0,274.0 557.0,281.5 580.0,282.3 602.0,283.0 614.5,288.7 646.5,294.0 678.5,296.5 700.0,297.0 732.0,299.0 782.0,300.2 789.7,303.4 808.9,309.2 828.0,315.6 866.5,317.8 892.0,319.5 930.0,320.6 971.7,322.4 1017.0,324.2 1047.9,327.0 1120.4,329.6 1141.0,332.0 1150.6,452.5 1160.8,448.4 1181.0,442.3 1201.6,438.9 1226.0,434.1 1242.4,430.7 1262.8,427.3 1283.0,424.0 1293.0,422.6" fill="none" stroke="#ff00ff" stroke-width="5.2" stroke-linejoin="round" stroke-linecap="butt"/>
<rect x="1" y="517.9" width="7" height="5.1" fill="#1ee0dc"/>
<rect x="10" y="517.0" width="7" height="6.0" fill="#ff0a50"/>
<rect x="20" y="515.3" width="7" height="7.7" fill="#ff0a50"/>
<rect x="29" y="517.9" width="7" height="5.1" fill="#1ee0dc"/>
<rect x="39" y="517.0" width="7" height="6.0" fill="#ff0a50"/>
<rect x="48" y="519.1" width="7" height="3.9" fill="#1ee0dc"/>
<rect x="58" y="517.0" width="7" height="6.0" fill="#ff0a50"/>
<rect x="67" y="519.1" width="7" height="3.9" fill="#1ee0dc"/>
<rect x="76" y="519.1" width="7" height="3.9" fill="#1ee0dc"/>
<rect x="86" y="519.1" width="7" height="3.9" fill="#1ee0dc"/>
<rect x="95" y="519.1" width="7" height="3.9" fill="#1ee0dc"/>
<rect x="105" y="519.1" width="7" height="3.9" fill="#ff0a50"/>
<rect x="114" y="520.0" width="7" height="3.0" fill="#1ee0dc"/>
<rect x="124" y="519.1" width="7" height="3.9" fill="#ff0a50"/>
<rect x="133" y="521.0" width="7" height="2.0" fill="#1ee0dc"/>
<rect x="143" y="511.7" width="7" height="11.3" fill="#ff0a50"/>
<rect x="152" y="516.1" width="7" height="6.9" fill="#1ee0dc"/>
<rect x="162" y="519.1" width="7" height="3.9" fill="#1ee0dc"/>
<rect x="171" y="517.0" width="7" height="6.0" fill="#ff0a50"/>
<rect x="181" y="519.1" width="7" height="3.9" fill="#1ee0dc"/>
<rect x="190" y="519.1" width="7" height="3.9" fill="#1ee0dc"/>
<rect x="200" y="517.9" width="7" height="5.1" fill="#ff0a50"/>
<rect x="209" y="519.1" width="7" height="3.9" fill="#1ee0dc"/>
<rect x="219" y="519.1" width="7" height="3.9" fill="#1ee0dc"/>
<rect x="228" y="519.1" width="7" height="3.9" fill="#ff0a50"/>
<rect x="238" y="519.1" width="7" height="3.9" fill="#1ee0dc"/>
<rect x="247" y="519.1" width="7" height="3.9" fill="#ff0a50"/>
<rect x="256" y="520.0" width="7" height="3.0" fill="#1ee0dc"/>
<rect x="266" y="519.1" width="7" height="3.9" fill="#ff0a50"/>
<rect x="275" y="519.1" width="7" height="3.9" fill="#1ee0dc"/>
<rect x="285" y="520.0" width="7" height="3.0" fill="#1ee0dc"/>
<rect x="294" y="519.1" width="7" height="3.9" fill="#ff0a50"/>
<rect x="304" y="519.1" width="7" height="3.9" fill="#ff0a50"/>
<rect x="313" y="519.1" width="7" height="3.9" fill="#1ee0dc"/>
<rect x="323" y="519.0" width="7" height="4.0" fill="#ff0a50"/>
<rect x="332" y="519.0" width="7" height="4.0" fill="#1ee0dc"/>
<rect x="342" y="519.9" width="7" height="3.1" fill="#1ee0dc"/>
<rect x="351" y="519.9" width="7" height="3.1" fill="#1ee0dc"/>
<rect x="361" y="519.9" width="7" height="3.1" fill="#ff0a50"/>
<rect x="370" y="519.0" width="7" height="4.0" fill="#ff0a50"/>
<rect x="380" y="519.0" width="7" height="4.0" fill="#1ee0dc"/>
<rect x="389" y="519.9" width="7" height="3.1" fill="#1ee0dc"/>
<rect x="399" y="519.0" width="7" height="4.0" fill="#ff0a50"/>
<rect x="408" y="518.0" width="7" height="5.0" fill="#ff0a50"/>
<rect x="418" y="518.0" width="7" height="5.0" fill="#1ee0dc"/>
<rect x="427" y="515.8" width="7" height="7.2" fill="#ff0a50"/>
<rect x="436" y="519.0" width="7" height="4.0" fill="#1ee0dc"/>
<rect x="446" y="519.0" width="7" height="4.0" fill="#ff0a50"/>
<rect x="455" y="516.9" width="7" height="6.1" fill="#ff0a50"/>
<rect x="465" y="518.0" width="7" height="5.0" fill="#1ee0dc"/>
<rect x="484" y="512.0" width="7" height="11.0" fill="#ff0a50"/>
<rect x="493" y="509.2" width="7" height="13.8" fill="#ff0a50"/>
<rect x="503" y="514.1" width="7" height="8.9" fill="#1ee0dc"/>
<rect x="512" y="512.9" width="7" height="10.1" fill="#ff0a50"/>
<rect x="522" y="515.0" width="7" height="8.0" fill="#1ee0dc"/>
<rect x="531" y="514.1" width="7" height="8.9" fill="#ff0a50"/>
<rect x="541" y="515.8" width="7" height="7.2" fill="#1ee0dc"/>
<rect x="550" y="515.0" width="7" height="8.0" fill="#ff0a50"/>
<rect x="560" y="515.8" width="7" height="7.2" fill="#1ee0dc"/>
<rect x="569" y="515.8" width="7" height="7.2" fill="#1ee0dc"/>
<rect x="579" y="515.8" width="7" height="7.2" fill="#ff0a50"/>
<rect x="588" y="516.9" width="7" height="6.1" fill="#1ee0dc"/>
<rect x="597" y="518.0" width="7" height="5.0" fill="#1ee0dc"/>
<rect x="607" y="510.9" width="7" height="12.1" fill="#ff0a50"/>
<rect x="616" y="515.8" width="7" height="7.2" fill="#1ee0dc"/>
<rect x="626" y="518.0" width="7" height="5.0" fill="#1ee0dc"/>
<rect x="635" y="515.0" width="7" height="8.0" fill="#ff0a50"/>
<rect x="645" y="516.9" width="7" height="6.1" fill="#1ee0dc"/>
<rect x="654" y="516.9" width="7" height="6.1" fill="#ff0a50"/>
<rect x="664" y="519.0" width="7" height="4.0" fill="#1ee0dc"/>
<rect x="673" y="519.0" width="7" height="4.0" fill="#ff0a50"/>
<rect x="683" y="519.0" width="7" height="4.0" fill="#1ee0dc"/>
<rect x="692" y="519.9" width="7" height="3.1" fill="#1ee0dc"/>
<rect x="702" y="519.0" width="7" height="4.0" fill="#ff0a50"/>
<rect x="711" y="518.0" width="7" height="5.0" fill="#ff0a50"/>
<rect x="721" y="519.0" width="7" height="4.0" fill="#1ee0dc"/>
<rect x="730" y="519.0" width="7" height="4.0" fill="#1ee0dc"/>
<rect x="740" y="519.0" width="7" height="4.0" fill="#ff0a50"/>
<rect x="749" y="519.9" width="7" height="3.1" fill="#1ee0dc"/>
<rect x="759" y="519.9" width="7" height="3.1" fill="#1ee0dc"/>
<rect x="768" y="519.9" width="7" height="3.1" fill="#1ee0dc"/>
<rect x="777" y="521.0" width="7" height="2.0" fill="#1ee0dc"/>
<rect x="787" y="510.0" width="7" height="13.0" fill="#ff0a50"/>
<rect x="796" y="514.1" width="7" height="8.9" fill="#1ee0dc"/>
<rect x="806" y="515.0" width="7" height="8.0" fill="#1ee0dc"/>
<rect x="815" y="516.9" width="7" height="6.1" fill="#1ee0dc"/>
<rect x="825" y="515.8" width="7" height="7.2" fill="#ff0a50"/>
<rect x="834" y="516.9" width="7" height="6.1" fill="#1ee0dc"/>
<rect x="844" y="518.0" width="7" height="5.0" fill="#1ee0dc"/>
<rect x="853" y="519.0" width="7" height="4.0" fill="#1ee0dc"/>
<rect x="863" y="519.0" width="7" height="4.0" fill="#ff0a50"/>
<rect x="872" y="519.9" width="7" height="3.1" fill="#1ee0dc"/>
<rect x="882" y="519.9" width="7" height="3.1" fill="#ff0a50"/>
<rect x="891" y="519.0" width="7" height="4.0" fill="#ff0a50"/>
<rect x="901" y="519.0" width="7" height="4.0" fill="#ff0a50"/>
<rect x="910" y="519.9" width="7" height="3.1" fill="#1ee0dc"/>
<rect x="920" y="519.9" width="7" height="3.1" fill="#1ee0dc"/>
<rect x="929" y="519.0" width="7" height="4.0" fill="#ff0a50"/>
<rect x="939" y="519.9" width="7" height="3.1" fill="#1ee0dc"/>
<rect x="948" y="519.9" width="7" height="3.1" fill="#ff0a50"/>
<rect x="957" y="520.2" width="7" height="2.8" fill="#1ee0dc"/>
<rect x="967" y="518.8" width="7" height="4.2" fill="#ff0a50"/>
<rect x="976" y="518.8" width="7" height="4.2" fill="#1ee0dc"/>
<rect x="986" y="519.8" width="7" height="3.2" fill="#1ee0dc"/>
<rect x="995" y="519.8" width="7" height="3.2" fill="#1ee0dc"/>
<rect x="1005" y="517.9" width="7" height="5.1" fill="#ff0a50"/>
<rect x="1014" y="518.8" width="7" height="4.2" fill="#1ee0dc"/>
<rect x="1024" y="515.0" width="7" height="8.0" fill="#ff0a50"/>
<rect x="1033" y="519.8" width="7" height="3.2" fill="#1ee0dc"/>
<rect x="1043" y="518.8" width="7" height="4.2" fill="#ff0a50"/>
<rect x="1052" y="519.8" width="7" height="3.2" fill="#1ee0dc"/>
<rect x="1062" y="517.9" width="7" height="5.1" fill="#ff0a50"/>
<rect x="1071" y="518.8" width="7" height="4.2" fill="#1ee0dc"/>
<rect x="1081" y="518.8" width="7" height="4.2" fill="#1ee0dc"/>
<rect x="1090" y="518.8" width="7" height="4.2" fill="#1ee0dc"/>
<rect x="1100" y="518.8" width="7" height="4.2" fill="#ff0a50"/>
<rect x="1109" y="517.9" width="7" height="5.1" fill="#ff0a50"/>
<rect x="1128" y="508.8" width="7" height="14.2" fill="#ff0a50"/>
<rect x="1147" y="502.9" width="7" height="20.1" fill="#ff0a50"/>
<rect x="1156" y="512.9" width="7" height="10.1" fill="#1ee0dc"/>
<rect x="1166" y="512.9" width="7" height="10.1" fill="#ff0a50"/>
<rect x="1175" y="515.0" width="7" height="8.0" fill="#1ee0dc"/>
<rect x="1185" y="515.0" width="7" height="8.0" fill="#1ee0dc"/>
<rect x="1194" y="516.9" width="7" height="6.1" fill="#1ee0dc"/>
<rect x="1204" y="517.9" width="7" height="5.1" fill="#1ee0dc"/>
<rect x="1213" y="517.9" width="7" height="5.1" fill="#ff0a50"/>
<rect x="1223" y="515.0" width="7" height="8.0" fill="#ff0a50"/>
<rect x="1232" y="515.0" width="7" height="8.0" fill="#ff0a50"/>
<rect x="1242" y="517.9" width="7" height="5.1" fill="#1ee0dc"/>
<rect x="1251" y="517.9" width="7" height="5.1" fill="#1ee0dc"/>
<rect x="1261" y="516.0" width="7" height="7.0" fill="#ff0a50"/>
<rect x="1270" y="516.9" width="7" height="6.1" fill="#1ee0dc"/>
<rect x="1280" y="516.0" width="7" height="7.0" fill="#ff0a50"/>
<rect x="1289" y="518.8" width="7" height="4.2" fill="#1ee0dc"/>
<rect x="0" y="593" width="1781" height="1.2" fill="#a8a6b4"/>
<rect x="1" y="589.0" width="7" height="4.0" fill="#ff0a50"/>
<rect x="10" y="594" width="7" height="1.0" fill="#1ee0dc"/>
<rect x="20" y="588.0" width="7" height="5.0" fill="#ff0a50"/>
<rect x="29" y="586.1" width="7" height="6.9" fill="#ff0a50"/>
<rect x="39" y="589.0" width="7" height="4.0" fill="#ff0a50"/>
<rect x="58" y="592.0" width="7" height="1.0" fill="#ff0a50"/>
<rect x="67" y="591.0" width="7" height="2.0" fill="#ff0a50"/>
<rect x="76" y="590.0" width="7" height="3.0" fill="#ff0a50"/>
<rect x="86" y="590.0" width="7" height="3.0" fill="#ff0a50"/>
<rect x="95" y="590.0" width="7" height="3.0" fill="#ff0a50"/>
<rect x="105" y="592.0" width="7" height="1.0" fill="#ff0a50"/>
<rect x="114" y="594" width="7" height="1.0" fill="#1ee0dc"/>
<rect x="124" y="594" width="7" height="2.0" fill="#1ee0dc"/>
<rect x="133" y="594" width="7" height="2.7" fill="#1ee0dc"/>
<rect x="143" y="594" width="7" height="10.8" fill="#1ee0dc"/>
<rect x="152" y="594" width="7" height="13.8" fill="#1ee0dc"/>
<rect x="162" y="594" width="7" height="16.8" fill="#1ee0dc"/>
<rect x="171" y="594" width="7" height="18.5" fill="#1ee0dc"/>
<rect x="181" y="594" width="7" height="20.8" fill="#1ee0dc"/>
<rect x="190" y="594" width="7" height="19.6" fill="#1ee0dc"/>
<rect x="200" y="594" width="7" height="20.0" fill="#1ee0dc"/>
<rect x="209" y="594" width="7" height="16.8" fill="#1ee0dc"/>
<rect x="219" y="594" width="7" height="12.6" fill="#1ee0dc"/>
<rect x="228" y="594" width="7" height="8.5" fill="#1ee0dc"/>
<rect x="238" y="594" width="7" height="4.5" fill="#1ee0dc"/>
<rect x="247" y="594" width="7" height="2.0" fill="#1ee0dc"/>
<rect x="256" y="594" width="7" height="1.0" fill="#1ee0dc"/>
<rect x="266" y="594" width="7" height="1.0" fill="#1ee0dc"/>
<rect x="294" y="594" width="7" height="1.0" fill="#1ee0dc"/>
<rect x="304" y="594" width="7" height="3.8" fill="#1ee0dc"/>
<rect x="313" y="594" width="7" height="5.5" fill="#1ee0dc"/>
<rect x="323" y="594" width="7" height="5.8" fill="#1ee0dc"/>
<rect x="332" y="594" width="7" height="5.8" fill="#1ee0dc"/>
<rect x="342" y="594" width="7" height="4.8" fill="#1ee0dc"/>
<rect x="351" y="594" width="7" height="3.8" fill="#1ee0dc"/>
<rect x="361" y="594" width="7" height="2.7" fill="#1ee0dc"/>
<rect x="370" y="594" width="7" height="0.7" fill="#1ee0dc"/>
<rect x="380" y="594" width="7" height="0.7" fill="#1ee0dc"/>
<rect x="389" y="594" width="7" height="2.1" fill="#1ee0dc"/>
<rect x="399" y="594" width="7" height="2.7" fill="#1ee0dc"/>
<rect x="408" y="594" width="7" height="4.8" fill="#1ee0dc"/>
<rect x="418" y="594" width="7" height="8.9" fill="#1ee0dc"/>
<rect x="427" y="594" width="7" height="8.9" fill="#1ee0dc"/>
<rect x="436" y="594" width="7" height="8.9" fill="#1ee0dc"/>
<rect x="446" y="594" width="7" height="9.9" fill="#1ee0dc"/>
<rect x="455" y="594" width="7" height="12.9" fill="#1ee0dc"/>
<rect x="465" y="594" width="7" height="9.9" fill="#1ee0dc"/>
<rect x="474" y="594" width="7" height="6.8" fill="#1ee0dc"/>
<rect x="484" y="594" width="7" height="4.8" fill="#1ee0dc"/>
<rect x="493" y="594" width="7" height="16.6" fill="#1ee0dc"/>
<rect x="503" y="594" width="7" height="27.6" fill="#1ee0dc"/>
<rect x="512" y="594" width="7" height="35.0" fill="#1ee0dc"/>
<rect x="522" y="594" width="7" height="39.5" fill="#1ee0dc"/>
<rect x="531" y="594" width="7" height="39.5" fill="#1ee0dc"/>
<rect x="541" y="594" width="7" height="39.5" fill="#1ee0dc"/>
<rect x="550" y="594" width="7" height="40.9" fill="#1ee0dc"/>
<rect x="560" y="594" width="7" height="32.9" fill="#1ee0dc"/>
<rect x="569" y="594" width="7" height="22.7" fill="#1ee0dc"/>
<rect x="579" y="594" width="7" height="14.0" fill="#1ee0dc"/>
<rect x="588" y="594" width="7" height="8.9" fill="#1ee0dc"/>
<rect x="597" y="594" width="7" height="5.8" fill="#1ee0dc"/>
<rect x="607" y="594" width="7" height="10.9" fill="#1ee0dc"/>
<rect x="616" y="594" width="7" height="11.9" fill="#1ee0dc"/>
<rect x="626" y="594" width="7" height="10.9" fill="#1ee0dc"/>
<rect x="635" y="594" width="7" height="10.9" fill="#1ee0dc"/>
<rect x="645" y="594" width="7" height="7.8" fill="#1ee0dc"/>
<rect x="654" y="594" width="7" height="0.7" fill="#1ee0dc"/>
<rect x="664" y="591.0" width="7" height="2.0" fill="#ff0a50"/>
<rect x="673" y="588.0" width="7" height="5.0" fill="#ff0a50"/>
<rect x="683" y="584.1" width="7" height="8.9" fill="#ff0a50"/>
<rect x="692" y="580.8" width="7" height="12.2" fill="#ff0a50"/>
<rect x="702" y="579.0" width="7" height="14.0" fill="#ff0a50"/>
<rect x="711" y="580.8" width="7" height="12.2" fill="#ff0a50"/>
<rect x="721" y="582.0" width="7" height="11.0" fill="#ff0a50"/>
<rect x="730" y="582.0" width="7" height="11.0" fill="#ff0a50"/>
<rect x="740" y="582.0" width="7" height="11.0" fill="#ff0a50"/>
<rect x="749" y="580.8" width="7" height="12.2" fill="#ff0a50"/>
<rect x="759" y="578.0" width="7" height="15.0" fill="#ff0a50"/>
<rect x="768" y="578.0" width="7" height="15.0" fill="#ff0a50"/>
<rect x="777" y="578.0" width="7" height="15.0" fill="#ff0a50"/>
<rect x="787" y="587.0" width="7" height="6.0" fill="#ff0a50"/>
<rect x="796" y="594" width="7" height="0.7" fill="#1ee0dc"/>
<rect x="806" y="594" width="7" height="3.8" fill="#1ee0dc"/>
<rect x="815" y="594" width="7" height="5.8" fill="#1ee0dc"/>
<rect x="825" y="594" width="7" height="7.8" fill="#1ee0dc"/>
<rect x="834" y="594" width="7" height="6.8" fill="#1ee0dc"/>
<rect x="844" y="594" width="7" height="3.8" fill="#1ee0dc"/>
<rect x="853" y="594" width="7" height="1.7" fill="#1ee0dc"/>
<rect x="863" y="594" width="7" height="0.7" fill="#1ee0dc"/>
<rect x="872" y="592.0" width="7" height="1.0" fill="#ff0a50"/>
<rect x="882" y="588.0" width="7" height="5.0" fill="#ff0a50"/>
<rect x="891" y="584.9" width="7" height="8.1" fill="#ff0a50"/>
<rect x="901" y="582.9" width="7" height="10.1" fill="#ff0a50"/>
<rect x="910" y="582.0" width="7" height="11.0" fill="#ff0a50"/>
<rect x="920" y="580.8" width="7" height="12.2" fill="#ff0a50"/>
<rect x="929" y="579.0" width="7" height="14.0" fill="#ff0a50"/>
<rect x="939" y="578.0" width="7" height="15.0" fill="#ff0a50"/>
<rect x="948" y="578.0" width="7" height="15.0" fill="#ff0a50"/>
<rect x="957" y="578.0" width="7" height="15.0" fill="#ff0a50"/>
<rect x="967" y="579.0" width="7" height="14.0" fill="#ff0a50"/>
<rect x="976" y="579.0" width="7" height="14.0" fill="#ff0a50"/>
<rect x="986" y="578.0" width="7" height="15.0" fill="#ff0a50"/>
<rect x="995" y="578.0" width="7" height="15.0" fill="#ff0a50"/>
<rect x="1005" y="580.0" width="7" height="13.0" fill="#ff0a50"/>
<rect x="1014" y="582.0" width="7" height="11.0" fill="#ff0a50"/>
<rect x="1024" y="584.1" width="7" height="8.9" fill="#ff0a50"/>
<rect x="1033" y="584.1" width="7" height="8.9" fill="#ff0a50"/>
<rect x="1043" y="584.1" width="7" height="8.9" fill="#ff0a50"/>
<rect x="1052" y="584.1" width="7" height="8.9" fill="#ff0a50"/>
<rect x="1062" y="584.1" width="7" height="8.9" fill="#ff0a50"/>
<rect x="1071" y="582.9" width="7" height="10.1" fill="#ff0a50"/>
<rect x="1081" y="584.9" width="7" height="8.1" fill="#ff0a50"/>
<rect x="1090" y="586.1" width="7" height="6.9" fill="#ff0a50"/>
<rect x="1100" y="586.9" width="7" height="6.1" fill="#ff0a50"/>
<rect x="1109" y="586.9" width="7" height="6.1" fill="#ff0a50"/>
<rect x="1119" y="586.9" width="7" height="6.1" fill="#ff0a50"/>
<rect x="1128" y="586.1" width="7" height="6.9" fill="#ff0a50"/>
<rect x="1137" y="586.1" width="7" height="6.9" fill="#ff0a50"/>
<rect x="1147" y="594" width="7" height="8.9" fill="#1ee0dc"/>
<rect x="1156" y="594" width="7" height="22.7" fill="#1ee0dc"/>
<rect x="1166" y="594" width="7" height="26.8" fill="#1ee0dc"/>
<rect x="1175" y="594" width="7" height="24.2" fill="#1ee0dc"/>
<rect x="1185" y="594" width="7" height="24.8" fill="#1ee0dc"/>
<rect x="1194" y="594" width="7" height="20.7" fill="#1ee0dc"/>
<rect x="1204" y="594" width="7" height="18.0" fill="#1ee0dc"/>
<rect x="1213" y="594" width="7" height="14.0" fill="#1ee0dc"/>
<rect x="1223" y="594" width="7" height="0.7" fill="#1ee0dc"/>
<rect x="1232" y="586.1" width="7" height="6.9" fill="#ff0a50"/>
<rect x="1242" y="580.8" width="7" height="12.2" fill="#ff0a50"/>
<rect x="1251" y="576.9" width="7" height="16.1" fill="#ff0a50"/>
<rect x="1261" y="571.2" width="7" height="21.8" fill="#ff0a50"/>
<rect x="1270" y="571.8" width="7" height="21.2" fill="#ff0a50"/>
<rect x="1280" y="568.2" width="7" height="24.8" fill="#ff0a50"/>
<rect x="1289" y="568.2" width="7" height="24.8" fill="#ff0a50"/>
<polyline points="4.4,571.3 31.7,567.3 59.9,566.8 95.1,562.5 133.8,564.3 146.2,566.4 176.1,578.7 199.0,592.8 221.9,602.5 241.2,606.6 264.1,606.6 299.3,606.6 317.0,609.6 330.0,611.0 344.5,613.1 362.9,614.1 401.6,615.5 422.0,619.2 458.8,629.4 487.3,633.5 503.7,643.7 528.2,667.1 560.8,700.8 575.1,709.0 605.7,716.1 647.0,726.3 652.2,727.3 676.7,726.3 711.4,715.1 752.2,702.4 787.0,689.6 807.3,689.6 833.9,694.7 864.5,697.1 893.1,693.1 931.8,682.0 970.0,666.1 986.5,658.0 1019.2,647.3 1072.2,634.5 1139.6,622.2 1149.8,624.3 1196.7,653.9 1217.1,661.0 1227.3,661.0 1253.9,652.9 1274.3,641.6 1292.7,629.4" fill="none" stroke="#3a86ff" stroke-width="1.3" stroke-linejoin="round" />
<polyline points="2.6,565.5 13.2,571.7 31.7,561.1 51.0,566.0 59.9,565.5 84.5,560.8 102.1,560.3 114.5,563.8 135.6,566.0 146.2,577.9 163.8,590.2 181.4,602.5 202.5,615.4 218.3,615.4 250.0,607.8 267.7,606.9 281.7,605.2 292.3,605.5 313.4,614.0 330.0,617.6 362.9,617.6 369.0,615.1 381.2,615.1 389.4,617.1 401.6,617.6 411.8,621.2 420.0,627.8 430.2,629.8 448.6,635.5 458.8,641.6 466.9,641.2 477.1,639.6 487.3,639.6 493.5,649.8 507.8,674.3 524.1,702.9 534.3,713.1 553.7,734.5 562.9,734.5 581.2,723.3 599.6,720.2 609.8,727.8 622.0,731.4 636.3,735.5 647.0,735.1 658.4,727.3 676.7,718.2 695.1,708.0 705.3,702.4 713.5,702.4 731.8,697.1 750.2,690.2 760.4,682.4 779.8,675.3 791.0,683.5 801.2,690.6 829.8,700.8 842.0,700.5 864.5,698.4 880.8,692.7 903.3,679.4 925.7,669.8 942.0,661.0 960.0,654.3 970.2,651.8 998.8,638.0 1025.3,635.9 1055.9,629.4 1072.2,624.3 1111.0,620.8 1139.6,614.1 1158.0,652.9 1168.2,663.1 1178.4,666.5 1196.7,675.3 1215.1,675.3 1225.3,662.0 1237.6,648.8 1262.0,624.9 1272.2,620.2 1284.5,608.0 1292.7,601.8" fill="none" stroke="#e0cc28" stroke-width="3.2" stroke-linejoin="round" />
<polyline points="4.7,795.7 35.2,792.4 51.7,793.3 93.9,794.8 112.7,797.6 140.9,798.7 159.7,803.4 178.4,808.8 192.5,811.7 206.6,819.9 223.1,827.6 231.3,829.3 241.8,828.6 270.0,828.6 281.8,822.2 298.2,816.8 317.0,813.5 335.8,810.5 354.6,809.3 366.3,813.5 389.8,818.7 408.6,823.9 422.6,829.3 430.0,830.9 439.4,833.3 458.2,834.0 469.9,832.3 509.8,832.8 533.3,839.4 552.1,842.6 570.9,845.7 594.4,842.2 617.8,841.0 641.3,837.5 676.5,832.8 695.3,824.6 735.2,824.6 754.0,822.2 772.8,821.5 786.9,821.5 812.7,823.4 829.1,829.3 847.9,835.1 866.6,842.2 870.0,841.7 876.4,839.4 914.0,839.4 935.1,832.8 958.6,822.9 989.1,809.3 999.7,802.7 1012.6,801.8 1047.8,805.1 1071.3,808.1 1085.4,813.5 1118.3,814.0 1141.8,814.5 1160.5,822.2 1193.4,829.3 1216.9,831.6 1226.3,833.3 1254.5,821.5 1273.3,816.8 1292.0,805.1" fill="none" stroke="#3a86ff" stroke-width="1.5" stroke-linejoin="round" />
<polyline points="4.7,795.2 13.6,799.4 32.9,787.0 42.3,790.0 51.7,795.2 61.0,795.2 70.4,798.0 78.7,794.0 89.2,794.8 98.6,811.2 108.0,804.6 117.4,795.2 126.8,795.2 136.2,790.0 145.6,802.3 155.0,825.3 164.4,825.7 176.1,821.5 183.1,821.5 201.9,844.1 212.5,834.0 221.9,830.0 232.4,822.9 240.7,822.2 251.2,817.5 259.4,822.2 268.8,822.2 278.2,799.4 288.8,809.3 298.2,810.5 315.8,810.5 325.2,809.3 334.6,805.1 345.1,811.2 353.4,817.5 363.9,833.3 373.3,819.9 382.7,833.3 392.1,832.8 401.5,832.8 409.7,838.7 419.1,844.1 429.7,830.9 438.2,828.6 447.6,829.3 458.2,837.5 468.7,822.2 478.1,826.2 487.5,826.2 495.7,841.0 506.3,849.2 526.3,849.7 553.3,849.2 561.5,841.0 573.2,834.7 580.3,833.3 590.8,833.3 601.4,841.0 610.8,845.0 619.0,844.1 629.6,837.0 637.8,834.0 647.2,828.6 657.8,816.8 667.1,819.9 676.5,816.8 685.9,809.3 695.3,822.2 714.1,837.0 734.1,830.0 743.5,814.5 751.7,814.5 761.1,808.1 771.6,803.4 781.0,812.1 789.2,843.4 798.6,843.4 809.2,839.4 818.6,847.3 828.0,848.0 837.4,842.6 846.8,835.1 857.3,838.0 866.6,841.0 876.4,836.3 885.8,835.6 894.0,841.0 914.0,839.4 922.2,818.7 932.8,807.4 941.0,807.4 950.4,806.5 959.8,799.4 971.5,806.5 978.6,806.5 989.1,791.0 997.4,787.7 1017.3,821.0 1026.7,819.2 1036.1,815.2 1047.8,807.0 1054.9,805.8 1072.5,813.5 1083.1,820.6 1092.5,812.1 1101.8,813.5 1111.2,816.4 1120.6,823.4 1131.2,813.5 1140.6,804.6 1150.0,844.5 1158.2,849.7 1178.1,830.4 1188.7,834.0 1198.1,830.9 1207.5,830.9 1216.9,826.9 1226.3,812.8 1245.1,812.8 1254.5,811.2 1263.9,808.1 1273.3,809.8 1282.6,782.3 1292.0,773.6" fill="none" stroke="#e0cc28" stroke-width="1.2" stroke-linejoin="round" />
<rect x="0" y="80" width="1874" height="1" fill="#4a4a4a"/>
<rect x="0" y="498" width="1874" height="2" fill="#555"/>
<rect x="0" y="523" width="1874" height="2" fill="#555"/>
<rect x="0" y="755" width="1874" height="2" fill="#555"/>
<rect x="1791" y="81" width="1" height="796" fill="#555"/>
<rect x="0" y="859" width="1791" height="1" fill="#777"/>
<rect x="18" y="860" width="1" height="3" fill="#ddd"/>
<rect x="75" y="860" width="1" height="3" fill="#ddd"/>
<rect x="132" y="860" width="1" height="3" fill="#ddd"/>
<rect x="142" y="860" width="1" height="3" fill="#ddd"/>
<rect x="198" y="860" width="1" height="3" fill="#ddd"/>
<rect x="255" y="860" width="1" height="3" fill="#ddd"/>
<rect x="312" y="860" width="1" height="3" fill="#ddd"/>
<rect x="369" y="860" width="1" height="3" fill="#ddd"/>
<rect x="426" y="860" width="1" height="3" fill="#ddd"/>
<rect x="483" y="860" width="1" height="3" fill="#ddd"/>
<rect x="549" y="860" width="1" height="3" fill="#ddd"/>
<rect x="606" y="860" width="1" height="3" fill="#ddd"/>
<rect x="663" y="860" width="1" height="3" fill="#ddd"/>
<rect x="719" y="860" width="1" height="3" fill="#ddd"/>
<rect x="776" y="860" width="1" height="3" fill="#ddd"/>
<rect x="786" y="860" width="1" height="3" fill="#ddd"/>
<rect x="843" y="860" width="1" height="3" fill="#ddd"/>
<rect x="899" y="860" width="1" height="3" fill="#ddd"/>
<rect x="956" y="860" width="1" height="3" fill="#ddd"/>
<rect x="1013" y="860" width="1" height="3" fill="#ddd"/>
<rect x="1070" y="860" width="1" height="3" fill="#ddd"/>
<rect x="1127" y="860" width="1" height="3" fill="#ddd"/>
<rect x="1193" y="860" width="1" height="3" fill="#ddd"/>
<rect x="1250" y="860" width="1" height="3" fill="#ddd"/>
<rect x="1307" y="860" width="1" height="3" fill="#ddd"/>
<rect x="1364" y="860" width="1" height="3" fill="#ddd"/>
<rect x="1421" y="860" width="1" height="3" fill="#ddd"/>
<rect x="1430" y="860" width="1" height="3" fill="#ddd"/>
<rect x="1487" y="860" width="1" height="3" fill="#ddd"/>
<rect x="1544" y="860" width="1" height="3" fill="#ddd"/>
<rect x="1601" y="860" width="1" height="3" fill="#ddd"/>
<rect x="1657" y="860" width="1" height="3" fill="#ddd"/>
<rect x="1714" y="860" width="1" height="3" fill="#ddd"/>
<rect x="1771" y="860" width="1" height="3" fill="#ddd"/>
<rect x="492" y="860" width="1.5" height="17" fill="#eee"/>
<rect x="1136" y="860" width="1.5" height="17" fill="#eee"/>
<rect x="0" y="877" width="1874" height="5" fill="#4a4a4a"/>
<rect x="1818" y="877" width="12" height="5" fill="#1a1a1a"/>
<text x="1.3" y="23.0" font-size="16.8" fill="#fff" font-weight="normal" font-family="Liberation Sans, sans-serif" textLength="35.7" lengthAdjust="spacingAndGlyphs">9984</text>
<text x="69.8" y="21.9" font-size="15.6" fill="#d0d0d0" font-weight="normal" font-family="Liberation Sans, sans-serif" textLength="63.4" lengthAdjust="spacingAndGlyphs">銘柄登録</text>
<text x="153.7" y="22.7" font-size="14.4" fill="#fff" font-weight="normal" font-family="Liberation Sans, sans-serif" textLength="24.3" lengthAdjust="spacingAndGlyphs">東P</text>
<text x="1.5" y="46.0" font-size="19.4" fill="#fff" font-weight="normal" font-family="Liberation Sans, sans-serif" textLength="124.5" lengthAdjust="spacingAndGlyphs">ソフトバンクグループ</text>
<text x="187.0" y="32.9" font-size="16.4" fill="#1e9cff" font-weight="normal" font-family="Liberation Sans, sans-serif" textLength="31.4" lengthAdjust="spacingAndGlyphs">東証</text>
<text x="231.2" y="33.0" font-size="16.7" fill="#dddddd" font-weight="normal" font-family="Liberation Sans, sans-serif" textLength="28.0" lengthAdjust="spacingAndGlyphs">PTS</text>
<text x="322.8" y="31.4" font-size="9.9" fill="#dddddd" font-weight="normal" font-family="Liberation Sans, sans-serif" textLength="7.7" lengthAdjust="spacingAndGlyphs">G</text>
<text x="388.8" y="22.8" font-size="14.5" fill="#fff" font-weight="normal" font-family="Liberation Sans, sans-serif" textLength="30.6" lengthAdjust="spacingAndGlyphs">貸借</text>
<text x="456.5" y="22.8" font-size="14.5" fill="#fff" font-weight="normal" font-family="Liberation Sans, sans-serif" textLength="49.1" lengthAdjust="spacingAndGlyphs">一般売</text>
<text x="578.7" y="21.2" font-size="14.5" fill="#b4b4b4" font-weight="normal" font-family="Liberation Sans, sans-serif" textLength="46.3" lengthAdjust="spacingAndGlyphs">現在値</text>
<text x="652.0" y="22.0" font-size="16.7" fill="#22d8d0" font-weight="normal" font-family="Liberation Sans, sans-serif" textLength="35.6" lengthAdjust="spacingAndGlyphs">5228</text>
<text x="747.3" y="22.5" font-size="17.4" fill="#fff" font-weight="normal" font-family="Liberation Sans, sans-serif" textLength="40.2" lengthAdjust="spacingAndGlyphs">10:23</text>
<text x="578.7" y="45.5" font-size="13.7" fill="#b4b4b4" font-weight="normal" font-family="Liberation Sans, sans-serif" textLength="46.3" lengthAdjust="spacingAndGlyphs">前日比</text>
<text x="640.0" y="45.5" font-size="16.0" fill="#22d8d0" font-weight="normal" font-family="Liberation Sans, sans-serif" textLength="23.0" lengthAdjust="spacingAndGlyphs">-40</text>
<text x="674.0" y="45.5" font-size="16.0" fill="#22d8d0" font-weight="normal" font-family="Liberation Sans, sans-serif" textLength="53.0" lengthAdjust="spacingAndGlyphs">-0.76%</text>
<text x="739.0" y="45.5" font-size="16.0" fill="#ff2a6a" font-weight="normal" font-family="Liberation Sans, sans-serif" textLength="58.8" lengthAdjust="spacingAndGlyphs">+2.52%</text>
<text x="873.0" y="22.5" font-size="15.3" fill="#b4b4b4" font-weight="normal" font-family="Liberation Sans, sans-serif" textLength="30.4" lengthAdjust="spacingAndGlyphs">高値</text>
<text x="873.0" y="45.6" font-size="14.7" fill="#b4b4b4" font-weight="normal" font-family="Liberation Sans, sans-serif" textLength="30.4" lengthAdjust="spacingAndGlyphs">安値</text>
<text x="981.6" y="22.0" font-size="16.4" fill="#fff" font-weight="normal" font-family="Liberation Sans, sans-serif" textLength="35.1" lengthAdjust="spacingAndGlyphs">5258</text>
<text x="1019.4" y="23.0" font-size="16.7" fill="#fff" font-weight="normal" font-family="Liberation Sans, sans-serif" textLength="41.0" lengthAdjust="spacingAndGlyphs">10:18</text>
<text x="981.6" y="45.6" font-size="16.7" fill="#fff" font-weight="normal" font-family="Liberation Sans, sans-serif" textLength="35.1" lengthAdjust="spacingAndGlyphs">4956</text>
<text x="1019.4" y="46.3" font-size="16.4" fill="#fff" font-weight="normal" font-family="Liberation Sans, sans-serif" textLength="41.0" lengthAdjust="spacingAndGlyphs">09:08</text>
<text x="1132.6" y="22.9" font-size="15.3" fill="#b4b4b4" font-weight="normal" font-family="Liberation Sans, sans-serif" textLength="46.9" lengthAdjust="spacingAndGlyphs">前終値</text>
<text x="1132.6" y="45.8" font-size="14.9" fill="#b4b4b4" font-weight="normal" font-family="Liberation Sans, sans-serif" textLength="30.4" lengthAdjust="spacingAndGlyphs">始値</text>
<text x="1308.8" y="22.0" font-size="16.4" fill="#fff" font-weight="normal" font-family="Liberation Sans, sans-serif" textLength="35.4" lengthAdjust="spacingAndGlyphs">5268</text>
<text x="1347.3" y="23.5" font-size="17.4" fill="#fff" font-weight="normal" font-family="Liberation Sans, sans-serif" textLength="41.0" lengthAdjust="spacingAndGlyphs">04/28</text>
<text x="1308.8" y="45.6" font-size="16.7" fill="#fff" font-weight="normal" font-family="Liberation Sans, sans-serif" textLength="35.4" lengthAdjust="spacingAndGlyphs">4968</text>
<text x="1347.3" y="46.3" font-size="16.4" fill="#fff" font-weight="normal" font-family="Liberation Sans, sans-serif" textLength="41.0" lengthAdjust="spacingAndGlyphs">09:07</text>
<text x="1462.0" y="22.7" font-size="15.6" fill="#b4b4b4" font-weight="normal" font-family="Liberation Sans, sans-serif" textLength="62.0" lengthAdjust="spacingAndGlyphs">時価総額</text>
<text x="1618.8" y="22.3" font-size="16.3" fill="#fff" font-weight="normal" font-family="Liberation Sans, sans-serif" textLength="53.8" lengthAdjust="spacingAndGlyphs">298615</text>
<text x="1678.0" y="23.4" font-size="16.3" fill="#a8a8a8" font-weight="normal" font-family="Liberation Sans, sans-serif" textLength="38.6" lengthAdjust="spacingAndGlyphs">(億円)</text>
<text x="1462.0" y="45.8" font-size="14.9" fill="#b4b4b4" font-weight="normal" font-family="Liberation Sans, sans-serif" textLength="46.0" lengthAdjust="spacingAndGlyphs">出来高</text>
<text x="1601.0" y="45.6" font-size="16.0" fill="#fff" font-weight="normal" font-family="Liberation Sans, sans-serif" textLength="71.6" lengthAdjust="spacingAndGlyphs">37152000</text>
<text x="1702.0" y="45.6" font-size="16.0" fill="#fff" font-weight="normal" font-family="Liberation Sans, sans-serif" textLength="80.4" lengthAdjust="spacingAndGlyphs">189452903</text>
<text x="1788.0" y="46.9" font-size="16.3" fill="#a8a8a8" font-weight="normal" font-family="Liberation Sans, sans-serif" textLength="39.0" lengthAdjust="spacingAndGlyphs">(千円)</text>
<text x="5.1" y="69.9" font-size="16.3" fill="#fff" font-weight="normal" font-family="Liberation Sans, sans-serif" textLength="60.2" lengthAdjust="spacingAndGlyphs">ローソク足</text>
<text x="133.2" y="69.9" font-size="16.3" fill="#fff" font-weight="normal" font-family="Liberation Sans, sans-serif" textLength="24.3" lengthAdjust="spacingAndGlyphs">5分</text>
<text x="234.4" y="69.9" font-size="16.3" fill="#7c7c7c" font-weight="normal" font-family="Liberation Sans, sans-serif" textLength="62.4" lengthAdjust="spacingAndGlyphs">期間指定</text>
<text x="341.6" y="69.5" font-size="14.5" fill="#1ea8ff" font-weight="normal" font-family="Liberation Sans, sans-serif" textLength="21.9" lengthAdjust="spacingAndGlyphs">1日</text>
<text x="403.4" y="69.5" font-size="14.5" fill="#e0e0e0" font-weight="normal" font-family="Liberation Sans, sans-serif" textLength="22.2" lengthAdjust="spacingAndGlyphs">2日</text>
<text x="465.1" y="69.5" font-size="14.5" fill="#e0e0e0" font-weight="normal" font-family="Liberation Sans, sans-serif" textLength="22.2" lengthAdjust="spacingAndGlyphs">3日</text>
<text x="527.5" y="69.5" font-size="14.5" fill="#e0e0e0" font-weight="normal" font-family="Liberation Sans, sans-serif" textLength="21.9" lengthAdjust="spacingAndGlyphs">5日</text>
<text x="585.0" y="69.5" font-size="14.5" fill="#e0e0e0" font-weight="normal" font-family="Liberation Sans, sans-serif" textLength="33.3" lengthAdjust="spacingAndGlyphs">30本</text>
<text x="647.1" y="69.5" font-size="14.5" fill="#e0e0e0" font-weight="normal" font-family="Liberation Sans, sans-serif" textLength="32.9" lengthAdjust="spacingAndGlyphs">60本</text>
<text x="705.0" y="69.5" font-size="14.5" fill="#e0e0e0" font-weight="normal" font-family="Liberation Sans, sans-serif" textLength="40.9" lengthAdjust="spacingAndGlyphs">100本</text>
<text x="766.4" y="69.5" font-size="14.5" fill="#e0e0e0" font-weight="normal" font-family="Liberation Sans, sans-serif" textLength="41.9" lengthAdjust="spacingAndGlyphs">300本</text>
<text x="828.4" y="69.5" font-size="14.5" fill="#e0e0e0" font-weight="normal" font-family="Liberation Sans, sans-serif" textLength="42.4" lengthAdjust="spacingAndGlyphs">600本</text>
<text x="1616.8" y="70.2" font-size="16.7" fill="#e0e0e0" font-weight="normal" font-family="Liberation Sans, sans-serif" textLength="60.0" lengthAdjust="spacingAndGlyphs">テクニカル</text>
<path d="M690,16.5 H704 M700,13 L704.5,16.5 L700,20" stroke="#fff" stroke-width="1.3" fill="none"/>
<path d="M272.5,36.5 V18 H275 L286,33 V24 H288.3 V36.5 H285.8 L274.8,21.5 V36.5 Z" fill="#e4e4e4"/>
<circle cx="285.7" cy="21.4" r="5.6" fill="#e83838"/>
<text x="2.4" y="95.0" font-size="11.0" fill="#fff" font-weight="normal" font-family="Liberation Sans, sans-serif" textLength="64.6" lengthAdjust="spacingAndGlyphs">単純移動平均</text>
<text x="73.4" y="95.0" font-size="11.0" fill="#e0d030" font-weight="normal" font-family="Liberation Sans, sans-serif" textLength="34.6" lengthAdjust="spacingAndGlyphs">SMA(5)</text>
<text x="114.2" y="95.0" font-size="11.0" fill="#3a86ff" font-weight="normal" font-family="Liberation Sans, sans-serif" textLength="41.0" lengthAdjust="spacingAndGlyphs">SMA(25)</text>
<text x="161.3" y="95.0" font-size="11.0" fill="#ff8cac" font-weight="normal" font-family="Liberation Sans, sans-serif" textLength="40.9" lengthAdjust="spacingAndGlyphs">SMA(77)</text>
<text x="208.3" y="95.0" font-size="11.0" fill="#fff" font-weight="normal" font-family="Liberation Sans, sans-serif" textLength="46.9" lengthAdjust="spacingAndGlyphs">SMA(200)</text>
<text x="262.7" y="95.0" font-size="11.0" fill="#fff" font-weight="normal" font-family="Liberation Sans, sans-serif" textLength="53.7" lengthAdjust="spacingAndGlyphs">一目均衡表</text>
<text x="323.5" y="95.0" font-size="11.0" fill="#ff8cac" font-weight="normal" font-family="Liberation Sans, sans-serif" textLength="45.7" lengthAdjust="spacingAndGlyphs">転換線(9)</text>
<text x="376.0" y="95.0" font-size="11.0" fill="#d8c828" font-weight="normal" font-family="Liberation Sans, sans-serif" textLength="52.4" lengthAdjust="spacingAndGlyphs">基準線(26)</text>
<text x="435.3" y="95.0" font-size="11.0" fill="#ff5a10" font-weight="normal" font-family="Liberation Sans, sans-serif" textLength="72.0" lengthAdjust="spacingAndGlyphs">先行スパン1(26)</text>
<text x="514.4" y="95.0" font-size="11.0" fill="#18a08a" font-weight="normal" font-family="Liberation Sans, sans-serif" textLength="71.6" lengthAdjust="spacingAndGlyphs">先行スパン2(52)</text>
<text x="593.0" y="95.0" font-size="11.0" fill="#3a86ff" font-weight="normal" font-family="Liberation Sans, sans-serif" textLength="65.4" lengthAdjust="spacingAndGlyphs">遅行スパン(26)</text>
<text x="665.7" y="95.0" font-size="11.0" fill="#fff" font-weight="normal" font-family="Liberation Sans, sans-serif" textLength="28.3" lengthAdjust="spacingAndGlyphs">VWAP</text>
<text x="700.6" y="95.0" font-size="11.0" fill="#ff00ff" font-weight="normal" font-family="Liberation Sans, sans-serif" textLength="28.4" lengthAdjust="spacingAndGlyphs">VWAP</text>
<text x="2.6" y="514.0" font-size="11.0" fill="#fff" font-weight="normal" font-family="Liberation Sans, sans-serif" textLength="31.4" lengthAdjust="spacingAndGlyphs">出来高</text>
<text x="1.8" y="540.0" font-size="11.5" fill="#fff" font-weight="normal" font-family="Liberation Sans, sans-serif" textLength="28.2" lengthAdjust="spacingAndGlyphs">MACD</text>
<text x="36.0" y="540.0" font-size="11.5" fill="#e0d030" font-weight="normal" font-family="Liberation Sans, sans-serif" textLength="65.0" lengthAdjust="spacingAndGlyphs">MACD(12,26)</text>
<text x="107.4" y="540.0" font-size="11.5" fill="#3a86ff" font-weight="normal" font-family="Liberation Sans, sans-serif" textLength="41.4" lengthAdjust="spacingAndGlyphs">Signal(9)</text>
<text x="155.8" y="540.0" font-size="11.5" fill="#ff1a50" font-weight="normal" font-family="Liberation Sans, sans-serif" textLength="89.8" lengthAdjust="spacingAndGlyphs">Oscillator(12,26,9)</text>
<text x="0.8" y="772.0" font-size="11.5" fill="#fff" font-weight="normal" font-family="Liberation Sans, sans-serif" textLength="54.0" lengthAdjust="spacingAndGlyphs">RSI(simple)</text>
<text x="61.2" y="772.0" font-size="11.5" fill="#e0d030" font-weight="normal" font-family="Liberation Sans, sans-serif" textLength="37.0" lengthAdjust="spacingAndGlyphs">RSI(14)</text>
<text x="104.7" y="772.0" font-size="11.5" fill="#3a86ff" font-weight="normal" font-family="Liberation Sans, sans-serif" textLength="41.0" lengthAdjust="spacingAndGlyphs">Signal(9)</text>
<text x="1798.4" y="119.4" font-size="16.4" fill="#fff" font-weight="normal" font-family="Liberation Sans, sans-serif" textLength="35.2" lengthAdjust="spacingAndGlyphs">6200</text>
<text x="1798.4" y="176.2" font-size="16.4" fill="#fff" font-weight="normal" font-family="Liberation Sans, sans-serif" textLength="35.2" lengthAdjust="spacingAndGlyphs">6000</text>
<text x="1798.4" y="232.8" font-size="16.4" fill="#fff" font-weight="normal" font-family="Liberation Sans, sans-serif" textLength="35.2" lengthAdjust="spacingAndGlyphs">5800</text>
<text x="1798.4" y="289.4" font-size="16.4" fill="#fff" font-weight="normal" font-family="Liberation Sans, sans-serif" textLength="35.2" lengthAdjust="spacingAndGlyphs">5600</text>
<text x="1798.4" y="345.9" font-size="16.4" fill="#fff" font-weight="normal" font-family="Liberation Sans, sans-serif" textLength="35.2" lengthAdjust="spacingAndGlyphs">5400</text>
<text x="1798.4" y="402.8" font-size="16.4" fill="#fff" font-weight="normal" font-family="Liberation Sans, sans-serif" textLength="35.2" lengthAdjust="spacingAndGlyphs">5200</text>
<text x="1798.4" y="459.9" font-size="16.4" fill="#fff" font-weight="normal" font-family="Liberation Sans, sans-serif" textLength="35.2" lengthAdjust="spacingAndGlyphs">5000</text>
<text x="1798.4" y="516.8" font-size="16.4" fill="#fff" font-weight="normal" font-family="Liberation Sans, sans-serif" textLength="35.2" lengthAdjust="spacingAndGlyphs">5000</text>
<g clip-path="url(#clipm)">
<text x="1798.4" y="531.7" font-size="16.4" fill="#fff" font-weight="normal" font-family="Liberation Sans, sans-serif" textLength="17.4" lengthAdjust="spacingAndGlyphs">50</text>
</g>
<text x="1798.4" y="565.6" font-size="16.4" fill="#fff" font-weight="normal" font-family="Liberation Sans, sans-serif" textLength="17.4" lengthAdjust="spacingAndGlyphs">25</text>
<text x="1798.4" y="599.5" font-size="16.4" fill="#fff" font-weight="normal" font-family="Liberation Sans, sans-serif" textLength="8.7" lengthAdjust="spacingAndGlyphs">0</text>
<text x="1798.4" y="633.5" font-size="16.4" fill="#fff" font-weight="normal" font-family="Liberation Sans, sans-serif" textLength="23.5" lengthAdjust="spacingAndGlyphs">-25</text>
<text x="1798.4" y="667.6" font-size="16.4" fill="#fff" font-weight="normal" font-family="Liberation Sans, sans-serif" textLength="23.5" lengthAdjust="spacingAndGlyphs">-50</text>
<text x="1798.4" y="701.5" font-size="16.4" fill="#fff" font-weight="normal" font-family="Liberation Sans, sans-serif" textLength="23.5" lengthAdjust="spacingAndGlyphs">-75</text>
<text x="1798.4" y="735.6" font-size="16.4" fill="#fff" font-weight="normal" font-family="Liberation Sans, sans-serif" textLength="32.5" lengthAdjust="spacingAndGlyphs">-100</text>
<text x="1798.2" y="778.4" font-size="16.4" fill="#fff" font-weight="normal" font-family="Liberation Sans, sans-serif" textLength="17.4" lengthAdjust="spacingAndGlyphs">75</text>
<text x="1798.2" y="809.9" font-size="16.4" fill="#fff" font-weight="normal" font-family="Liberation Sans, sans-serif" textLength="17.4" lengthAdjust="spacingAndGlyphs">50</text>
<text x="1798.2" y="841.3" font-size="16.4" fill="#fff" font-weight="normal" font-family="Liberation Sans, sans-serif" textLength="17.4" lengthAdjust="spacingAndGlyphs">25</text>
<rect x="1792" y="377.6" width="74" height="21.2" fill="#fbec52"/>
<text x="1804.2" y="394.3" font-size="17.0" fill="#000" font-weight="normal" font-family="Liberation Sans, sans-serif" textLength="49.2" lengthAdjust="spacingAndGlyphs">5228.0</text>
<text x="3.2" y="873.3" font-size="12.0" fill="#fff" font-weight="bold" font-family="Liberation Serif, sans-serif" textLength="33.5" lengthAdjust="spacingAndGlyphs">04/27</text>
<text x="79.0" y="873.0" font-size="11.0" fill="#fff" font-weight="normal" font-family="Liberation Sans, sans-serif" textLength="26.0" lengthAdjust="spacingAndGlyphs">11:00</text>
<text x="136.1" y="873.0" font-size="11.0" fill="#fff" font-weight="normal" font-family="Liberation Sans, sans-serif" textLength="26.0" lengthAdjust="spacingAndGlyphs">11:30</text>
<text x="202.1" y="873.0" font-size="11.0" fill="#fff" font-weight="normal" font-family="Liberation Sans, sans-serif" textLength="26.0" lengthAdjust="spacingAndGlyphs">13:00</text>
<text x="258.9" y="873.0" font-size="11.0" fill="#fff" font-weight="normal" font-family="Liberation Sans, sans-serif" textLength="26.0" lengthAdjust="spacingAndGlyphs">13:30</text>
<text x="316.1" y="873.0" font-size="11.0" fill="#fff" font-weight="normal" font-family="Liberation Sans, sans-serif" textLength="26.0" lengthAdjust="spacingAndGlyphs">14:00</text>
<text x="373.0" y="873.0" font-size="11.0" fill="#fff" font-weight="normal" font-family="Liberation Sans, sans-serif" textLength="26.0" lengthAdjust="spacingAndGlyphs">14:30</text>
<text x="429.7" y="873.0" font-size="11.0" fill="#fff" font-weight="normal" font-family="Liberation Sans, sans-serif" textLength="26.0" lengthAdjust="spacingAndGlyphs">15:00</text>
<text x="495.2" y="873.3" font-size="12.0" fill="#fff" font-weight="bold" font-family="Liberation Serif, sans-serif" textLength="33.5" lengthAdjust="spacingAndGlyphs">04/28</text>
<text x="552.0" y="873.0" font-size="11.0" fill="#fff" font-weight="normal" font-family="Liberation Sans, sans-serif" textLength="26.0" lengthAdjust="spacingAndGlyphs">09:30</text>
<text x="610.2" y="873.0" font-size="11.0" fill="#fff" font-weight="normal" font-family="Liberation Sans, sans-serif" textLength="26.0" lengthAdjust="spacingAndGlyphs">10:00</text>
<text x="666.9" y="873.0" font-size="11.0" fill="#fff" font-weight="normal" font-family="Liberation Sans, sans-serif" textLength="26.0" lengthAdjust="spacingAndGlyphs">10:30</text>
<text x="722.7" y="873.0" font-size="11.0" fill="#fff" font-weight="normal" font-family="Liberation Sans, sans-serif" textLength="26.0" lengthAdjust="spacingAndGlyphs">11:00</text>
<text x="780.0" y="873.0" font-size="11.0" fill="#fff" font-weight="normal" font-family="Liberation Sans, sans-serif" textLength="26.0" lengthAdjust="spacingAndGlyphs">11:30</text>
<text x="847.4" y="873.0" font-size="11.0" fill="#fff" font-weight="normal" font-family="Liberation Sans, sans-serif" textLength="26.0" lengthAdjust="spacingAndGlyphs">13:00</text>
<text x="902.9" y="873.0" font-size="11.0" fill="#fff" font-weight="normal" font-family="Liberation Sans, sans-serif" textLength="26.0" lengthAdjust="spacingAndGlyphs">13:30</text>
<text x="960.1" y="873.0" font-size="11.0" fill="#fff" font-weight="normal" font-family="Liberation Sans, sans-serif" textLength="26.0" lengthAdjust="spacingAndGlyphs">14:00</text>
<text x="1016.8" y="873.0" font-size="11.0" fill="#fff" font-weight="normal" font-family="Liberation Sans, sans-serif" textLength="26.0" lengthAdjust="spacingAndGlyphs">14:30</text>
<text x="1074.1" y="873.0" font-size="11.0" fill="#fff" font-weight="normal" font-family="Liberation Sans, sans-serif" textLength="26.0" lengthAdjust="spacingAndGlyphs">15:00</text>
<text x="1139.2" y="873.3" font-size="12.0" fill="#fff" font-weight="bold" font-family="Liberation Serif, sans-serif" textLength="33.5" lengthAdjust="spacingAndGlyphs">04/30</text>
<text x="1195.9" y="873.0" font-size="11.0" fill="#fff" font-weight="normal" font-family="Liberation Sans, sans-serif" textLength="26.0" lengthAdjust="spacingAndGlyphs">09:30</text>
<text x="1253.7" y="873.0" font-size="11.0" fill="#fff" font-weight="normal" font-family="Liberation Sans, sans-serif" textLength="26.0" lengthAdjust="spacingAndGlyphs">10:00</text>
<text x="1311.0" y="873.0" font-size="11.0" fill="#fff" font-weight="normal" font-family="Liberation Sans, sans-serif" textLength="26.0" lengthAdjust="spacingAndGlyphs">10:30</text>
<text x="1368.2" y="873.0" font-size="11.0" fill="#fff" font-weight="normal" font-family="Liberation Sans, sans-serif" textLength="26.0" lengthAdjust="spacingAndGlyphs">11:00</text>
<text x="1424.9" y="873.0" font-size="11.0" fill="#fff" font-weight="normal" font-family="Liberation Sans, sans-serif" textLength="26.0" lengthAdjust="spacingAndGlyphs">11:30</text>
<text x="1490.9" y="873.0" font-size="11.0" fill="#fff" font-weight="normal" font-family="Liberation Sans, sans-serif" textLength="26.0" lengthAdjust="spacingAndGlyphs">13:00</text>
<text x="1548.2" y="873.0" font-size="11.0" fill="#fff" font-weight="normal" font-family="Liberation Sans, sans-serif" textLength="26.0" lengthAdjust="spacingAndGlyphs">13:30</text>
<text x="1604.8" y="873.0" font-size="11.0" fill="#fff" font-weight="normal" font-family="Liberation Sans, sans-serif" textLength="26.0" lengthAdjust="spacingAndGlyphs">14:00</text>
<text x="1661.1" y="873.0" font-size="11.0" fill="#fff" font-weight="normal" font-family="Liberation Sans, sans-serif" textLength="26.0" lengthAdjust="spacingAndGlyphs">14:30</text>
<text x="1718.0" y="873.0" font-size="11.0" fill="#fff" font-weight="normal" font-family="Liberation Sans, sans-serif" textLength="26.0" lengthAdjust="spacingAndGlyphs">15:00</text>
<path d="M36.7,136.3 H27.9 L21.8,142.4 M21.6,138.6 V142.6 H25.6" stroke="#ff1a50" stroke-width="1.2" fill="none"/>
<text x="38.8" y="143.3" font-size="11.0" fill="#ff1a50" font-weight="normal" font-family="Liberation Sans, sans-serif" textLength="70.0" lengthAdjust="spacingAndGlyphs">最高値:6084.0</text>
<path d="M1134.2,474.4 H1143.6 L1149.2,469.1" stroke="#1ee0dc" stroke-width="1.2" fill="none"/><rect x="1147" y="468" width="3" height="3" fill="#1ee0dc"/>
<text x="1061.1" y="480.3" font-size="11.0" fill="#1ee0dc" font-weight="normal" font-family="Liberation Sans, sans-serif" textLength="69.9" lengthAdjust="spacingAndGlyphs">最安値:4956.0</text>
<rect x="1868" y="85" width="8" height="16" rx="2" fill="#555"/>
<rect x="1868" y="104" width="8" height="16" rx="2" fill="#555"/>
<rect x="1868.5" y="123.5" width="8" height="16" rx="2" fill="none" stroke="#666"/>
<rect x="1868.5" y="141.5" width="8" height="16" rx="2" fill="none" stroke="#666"/>
<rect x="1868" y="503" width="8" height="17" rx="2" fill="#4a4a4a"/>
<path d="M1870.5,507.5 L1874,511 M1870.5,515.5 L1874,512" stroke="#ddd" stroke-width="1.2" fill="none"/>
<rect x="1868" y="528" width="8" height="17" rx="2" fill="#4a4a4a"/>
<path d="M1870.5,532.5 L1874,536 M1870.5,540.5 L1874,537" stroke="#ddd" stroke-width="1.2" fill="none"/>
<rect x="1868" y="760" width="8" height="17" rx="2" fill="#4a4a4a"/>
<path d="M1870.5,764.5 L1874,768 M1870.5,772.5 L1874,769" stroke="#ddd" stroke-width="1.2" fill="none"/>
<defs><clipPath id="clipm"><rect x="0" y="525" width="1874" height="300"/></clipPath></defs>
<rect x="1671" y="0" width="111" height="2.5" fill="#0c1a5a"/>
<rect x="17" y="0" width="1.5" height="3" fill="#1a1a1a"/>
<rect x="40" y="0" width="1.5" height="3" fill="#1a1a1a"/>
<rect x="74" y="0" width="1.5" height="3" fill="#1a1a1a"/>
<rect x="188" y="0" width="1.5" height="3" fill="#1a1a1a"/>
<rect x="302" y="0" width="1.5" height="3" fill="#1a1a1a"/>
<rect x="416" y="0" width="1.5" height="3" fill="#1a1a1a"/>
<rect x="530" y="0" width="1.5" height="3" fill="#1a1a1a"/>
<rect x="644" y="0" width="1.5" height="3" fill="#1a1a1a"/>
<rect x="758" y="0" width="1.5" height="3" fill="#1a1a1a"/>
<rect x="872" y="0" width="1.5" height="3" fill="#1a1a1a"/>
<rect x="986" y="0" width="1.5" height="3" fill="#1a1a1a"/>
<rect x="1100" y="0" width="1.5" height="3" fill="#1a1a1a"/>
<rect x="1214" y="0" width="1.5" height="3" fill="#1a1a1a"/>
<rect x="1328" y="0" width="1.5" height="3" fill="#1a1a1a"/>
<rect x="1442" y="0" width="1.5" height="3" fill="#1a1a1a"/>
<rect x="1556" y="0" width="1.5" height="3" fill="#1a1a1a"/>
<rect x="1670" y="0" width="1.5" height="3" fill="#1a1a1a"/>
<rect x="1806" y="0" width="1.5" height="3" fill="#1a1a1a"/>
<rect x="1829" y="0" width="1.5" height="3" fill="#1a1a1a"/>
<rect x="1852" y="0" width="1.5" height="3" fill="#1a1a1a"/>
</svg>
</body></html>
